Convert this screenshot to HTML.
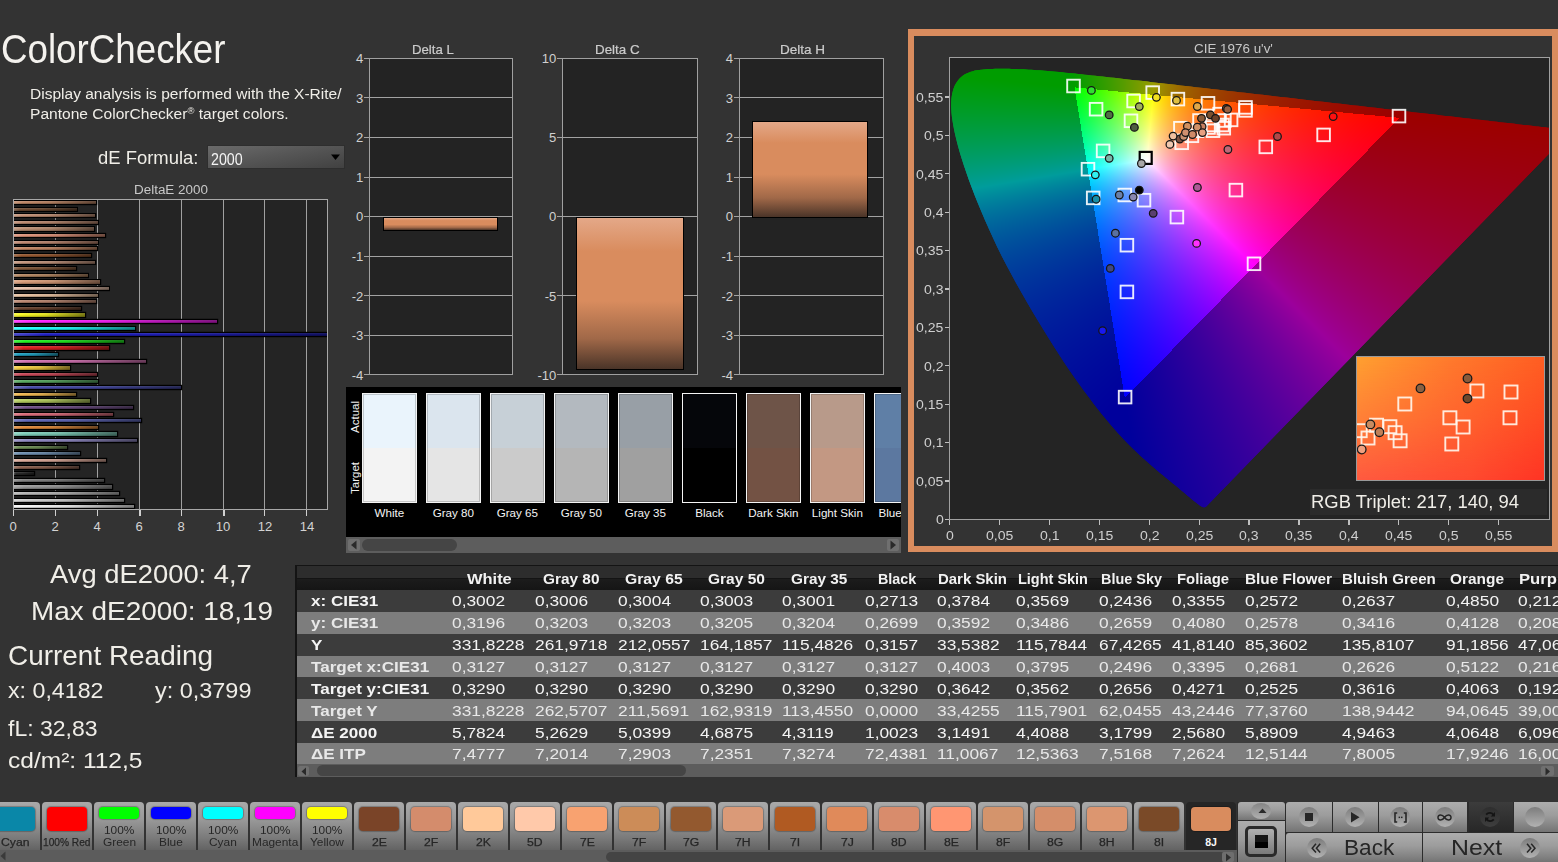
<!DOCTYPE html><html><head><meta charset="utf-8"><style>
html,body{margin:0;padding:0;}
body{width:1558px;height:862px;overflow:hidden;background:#333333;position:relative;font-family:"Liberation Sans",sans-serif;}
.t{position:absolute;white-space:nowrap;}
.r{position:absolute;}
</style></head><body><div class="t" style="left:1.00px;top:29.89px;font-size:39.83px;line-height:39.83px;color:#f4f2ee;transform:scaleX(0.9221);transform-origin:0 0;">ColorChecker</div>
<div class="t" style="left:30.00px;top:87.05px;font-size:14.83px;line-height:14.83px;color:#f0eee8;transform:scaleX(1.0472);transform-origin:0 0;">Display analysis is performed with the X-Rite/</div>
<div class="t" style="left:30.00px;top:107.05px;font-size:14.83px;line-height:14.83px;color:#f0eee8;transform:scaleX(1.0495);transform-origin:0 0;">Pantone ColorChecker<span style="font-size:9px;position:relative;top:-5px">&reg;</span> target colors.</div>
<div class="t" style="left:98.00px;top:150.04px;font-size:17.44px;line-height:17.44px;color:#f0eee8;transform:scaleX(1.0579);transform-origin:0 0;">dE Formula:</div>
<div class="r" style="left:206.80px;top:144.70px;width:138.50px;height:24.50px;background:linear-gradient(170deg,#6c6c6c 0%,#575757 45%,#404040 100%);box-shadow:inset 0 0 0 1px #2e2e2e;"></div>
<div class="t" style="left:211.00px;top:151.40px;font-size:17.01px;line-height:17.01px;color:#f4f4f4;transform:scaleX(0.8379);transform-origin:0 0;">2000</div>
<svg class="r" style="left:331px;top:154px" width="10" height="7"><path d="M0 0.5 L9 0.5 L4.5 6 Z" fill="#000"/></svg>
<div class="t" style="left:133.70px;top:184.00px;font-size:12.65px;line-height:12.65px;color:#c8c8c8;transform:scaleX(1.0632);transform-origin:0 0;">DeltaE 2000</div>
<div class="r" style="left:13.20px;top:199.30px;width:314.70px;height:310.70px;background:#242424;"></div>
<div class="r" style="left:55.00px;top:199.30px;width:1.00px;height:310.70px;background:#a0a0a0;"></div>
<div class="r" style="left:97.00px;top:199.30px;width:1.00px;height:310.70px;background:#a0a0a0;"></div>
<div class="r" style="left:139.00px;top:199.30px;width:1.00px;height:310.70px;background:#a0a0a0;"></div>
<div class="r" style="left:181.00px;top:199.30px;width:1.00px;height:310.70px;background:#a0a0a0;"></div>
<div class="r" style="left:223.00px;top:199.30px;width:1.00px;height:310.70px;background:#a0a0a0;"></div>
<div class="r" style="left:264.00px;top:199.30px;width:1.00px;height:310.70px;background:#a0a0a0;"></div>
<div class="r" style="left:306.00px;top:199.30px;width:1.00px;height:310.70px;background:#a0a0a0;"></div>
<div class="r" style="left:55.00px;top:199.30px;width:1.00px;height:310.70px;background:#a0a0a0;"></div>
<div class="r" style="left:97.00px;top:199.30px;width:1.00px;height:310.70px;background:#a0a0a0;"></div>
<div class="r" style="left:139.00px;top:199.30px;width:1.00px;height:310.70px;background:#a0a0a0;"></div>
<div class="r" style="left:181.00px;top:199.30px;width:1.00px;height:310.70px;background:#a0a0a0;"></div>
<div class="r" style="left:223.00px;top:199.30px;width:1.00px;height:310.70px;background:#a0a0a0;"></div>
<div class="r" style="left:264.00px;top:199.30px;width:1.00px;height:310.70px;background:#a0a0a0;"></div>
<div class="r" style="left:306.00px;top:199.30px;width:1.00px;height:310.70px;background:#a0a0a0;"></div>
<div class="r" style="left:14.2px;top:200.3px;width:312.7px;height:308.7px;overflow:hidden">
<div class="r" style="left:-0.50px;top:304.90px;width:120.76px;height:3.20px;background:linear-gradient(90deg,rgba(255,255,255,0.18),rgba(255,255,255,0) 10%,rgba(0,0,0,0.1) 45%,rgba(0,0,0,0.5)),linear-gradient(180deg,rgba(255,255,255,0.15),rgba(0,0,0,0) 50%,rgba(0,0,0,0.3)),#f4f4f4;box-shadow:0 0 0 1.2px #000;"></div>
<div class="r" style="left:-0.50px;top:298.29px;width:109.85px;height:3.20px;background:linear-gradient(90deg,rgba(255,255,255,0.18),rgba(255,255,255,0) 10%,rgba(0,0,0,0.1) 45%,rgba(0,0,0,0.5)),linear-gradient(180deg,rgba(255,255,255,0.15),rgba(0,0,0,0) 50%,rgba(0,0,0,0.3)),#cfcfcf;box-shadow:0 0 0 1.2px #000;"></div>
<div class="r" style="left:-0.50px;top:291.67px;width:105.24px;height:3.20px;background:linear-gradient(90deg,rgba(255,255,255,0.18),rgba(255,255,255,0) 10%,rgba(0,0,0,0.1) 45%,rgba(0,0,0,0.5)),linear-gradient(180deg,rgba(255,255,255,0.15),rgba(0,0,0,0) 50%,rgba(0,0,0,0.3)),#b5b5b5;box-shadow:0 0 0 1.2px #000;"></div>
<div class="r" style="left:-0.50px;top:285.06px;width:97.90px;height:3.20px;background:linear-gradient(90deg,rgba(255,255,255,0.18),rgba(255,255,255,0) 10%,rgba(0,0,0,0.1) 45%,rgba(0,0,0,0.5)),linear-gradient(180deg,rgba(255,255,255,0.15),rgba(0,0,0,0) 50%,rgba(0,0,0,0.3)),#9a9a9a;box-shadow:0 0 0 1.2px #000;"></div>
<div class="r" style="left:-0.50px;top:278.45px;width:89.92px;height:3.20px;background:linear-gradient(90deg,rgba(255,255,255,0.18),rgba(255,255,255,0) 10%,rgba(0,0,0,0.1) 45%,rgba(0,0,0,0.5)),linear-gradient(180deg,rgba(255,255,255,0.15),rgba(0,0,0,0) 50%,rgba(0,0,0,0.3)),#808080;box-shadow:0 0 0 1.2px #000;"></div>
<div class="r" style="left:-0.50px;top:271.83px;width:20.48px;height:3.20px;background:linear-gradient(90deg,rgba(255,255,255,0.18),rgba(255,255,255,0) 10%,rgba(0,0,0,0.1) 45%,rgba(0,0,0,0.5)),linear-gradient(180deg,rgba(255,255,255,0.15),rgba(0,0,0,0) 50%,rgba(0,0,0,0.3)),#2a2a2a;box-shadow:0 0 0 1.2px #000;"></div>
<div class="r" style="left:-0.50px;top:265.22px;width:65.59px;height:3.20px;background:linear-gradient(90deg,rgba(255,255,255,0.18),rgba(255,255,255,0) 10%,rgba(0,0,0,0.1) 45%,rgba(0,0,0,0.5)),linear-gradient(180deg,rgba(255,255,255,0.15),rgba(0,0,0,0) 50%,rgba(0,0,0,0.3)),#8a5f4e;box-shadow:0 0 0 1.2px #000;"></div>
<div class="r" style="left:-0.50px;top:258.61px;width:92.02px;height:3.20px;background:linear-gradient(90deg,rgba(255,255,255,0.18),rgba(255,255,255,0) 10%,rgba(0,0,0,0.1) 45%,rgba(0,0,0,0.5)),linear-gradient(180deg,rgba(255,255,255,0.15),rgba(0,0,0,0) 50%,rgba(0,0,0,0.3)),#d8a898;box-shadow:0 0 0 1.2px #000;"></div>
<div class="r" style="left:-0.50px;top:252.00px;width:66.22px;height:3.20px;background:linear-gradient(90deg,rgba(255,255,255,0.18),rgba(255,255,255,0) 10%,rgba(0,0,0,0.1) 45%,rgba(0,0,0,0.5)),linear-gradient(180deg,rgba(255,255,255,0.15),rgba(0,0,0,0) 50%,rgba(0,0,0,0.3)),#6f8fb0;box-shadow:0 0 0 1.2px #000;"></div>
<div class="r" style="left:-0.50px;top:245.38px;width:53.42px;height:3.20px;background:linear-gradient(90deg,rgba(255,255,255,0.18),rgba(255,255,255,0) 10%,rgba(0,0,0,0.1) 45%,rgba(0,0,0,0.5)),linear-gradient(180deg,rgba(255,255,255,0.15),rgba(0,0,0,0) 50%,rgba(0,0,0,0.3)),#6f8f55;box-shadow:0 0 0 1.2px #000;"></div>
<div class="r" style="left:-0.50px;top:238.77px;width:123.07px;height:3.20px;background:linear-gradient(90deg,rgba(255,255,255,0.18),rgba(255,255,255,0) 10%,rgba(0,0,0,0.1) 45%,rgba(0,0,0,0.5)),linear-gradient(180deg,rgba(255,255,255,0.15),rgba(0,0,0,0) 50%,rgba(0,0,0,0.3)),#8f88c0;box-shadow:0 0 0 1.2px #000;"></div>
<div class="r" style="left:-0.50px;top:232.16px;width:103.35px;height:3.20px;background:linear-gradient(90deg,rgba(255,255,255,0.18),rgba(255,255,255,0) 10%,rgba(0,0,0,0.1) 45%,rgba(0,0,0,0.5)),linear-gradient(180deg,rgba(255,255,255,0.15),rgba(0,0,0,0) 50%,rgba(0,0,0,0.3)),#7fd0bb;box-shadow:0 0 0 1.2px #000;"></div>
<div class="r" style="left:-0.50px;top:225.54px;width:84.68px;height:3.20px;background:linear-gradient(90deg,rgba(255,255,255,0.18),rgba(255,255,255,0) 10%,rgba(0,0,0,0.1) 45%,rgba(0,0,0,0.5)),linear-gradient(180deg,rgba(255,255,255,0.15),rgba(0,0,0,0) 50%,rgba(0,0,0,0.3)),#e08a3a;box-shadow:0 0 0 1.2px #000;"></div>
<div class="r" style="left:-0.50px;top:218.93px;width:127.27px;height:3.20px;background:linear-gradient(90deg,rgba(255,255,255,0.18),rgba(255,255,255,0) 10%,rgba(0,0,0,0.1) 45%,rgba(0,0,0,0.5)),linear-gradient(180deg,rgba(255,255,255,0.15),rgba(0,0,0,0) 50%,rgba(0,0,0,0.3)),#6068b8;box-shadow:0 0 0 1.2px #000;"></div>
<div class="r" style="left:-0.50px;top:212.32px;width:99.78px;height:3.20px;background:linear-gradient(90deg,rgba(255,255,255,0.18),rgba(255,255,255,0) 10%,rgba(0,0,0,0.1) 45%,rgba(0,0,0,0.5)),linear-gradient(180deg,rgba(255,255,255,0.15),rgba(0,0,0,0) 50%,rgba(0,0,0,0.3)),#d86a78;box-shadow:0 0 0 1.2px #000;"></div>
<div class="r" style="left:-0.50px;top:205.70px;width:118.88px;height:3.20px;background:linear-gradient(90deg,rgba(255,255,255,0.18),rgba(255,255,255,0) 10%,rgba(0,0,0,0.1) 45%,rgba(0,0,0,0.5)),linear-gradient(180deg,rgba(255,255,255,0.15),rgba(0,0,0,0) 50%,rgba(0,0,0,0.3)),#705088;box-shadow:0 0 0 1.2px #000;"></div>
<div class="r" style="left:-0.50px;top:199.09px;width:76.71px;height:3.20px;background:linear-gradient(90deg,rgba(255,255,255,0.18),rgba(255,255,255,0) 10%,rgba(0,0,0,0.1) 45%,rgba(0,0,0,0.5)),linear-gradient(180deg,rgba(255,255,255,0.15),rgba(0,0,0,0) 50%,rgba(0,0,0,0.3)),#b8d060;box-shadow:0 0 0 1.2px #000;"></div>
<div class="r" style="left:-0.50px;top:192.48px;width:62.44px;height:3.20px;background:linear-gradient(90deg,rgba(255,255,255,0.18),rgba(255,255,255,0) 10%,rgba(0,0,0,0.1) 45%,rgba(0,0,0,0.5)),linear-gradient(180deg,rgba(255,255,255,0.15),rgba(0,0,0,0) 50%,rgba(0,0,0,0.3)),#f0b850;box-shadow:0 0 0 1.2px #000;"></div>
<div class="r" style="left:-0.50px;top:185.87px;width:167.34px;height:3.20px;background:linear-gradient(90deg,rgba(255,255,255,0.18),rgba(255,255,255,0) 10%,rgba(0,0,0,0.1) 45%,rgba(0,0,0,0.5)),linear-gradient(180deg,rgba(255,255,255,0.15),rgba(0,0,0,0) 50%,rgba(0,0,0,0.3)),#484ca8;box-shadow:0 0 0 1.2px #000;"></div>
<div class="r" style="left:-0.50px;top:179.25px;width:83.84px;height:3.20px;background:linear-gradient(90deg,rgba(255,255,255,0.18),rgba(255,255,255,0) 10%,rgba(0,0,0,0.1) 45%,rgba(0,0,0,0.5)),linear-gradient(180deg,rgba(255,255,255,0.15),rgba(0,0,0,0) 50%,rgba(0,0,0,0.3)),#58a860;box-shadow:0 0 0 1.2px #000;"></div>
<div class="r" style="left:-0.50px;top:172.64px;width:83.21px;height:3.20px;background:linear-gradient(90deg,rgba(255,255,255,0.18),rgba(255,255,255,0) 10%,rgba(0,0,0,0.1) 45%,rgba(0,0,0,0.5)),linear-gradient(180deg,rgba(255,255,255,0.15),rgba(0,0,0,0) 50%,rgba(0,0,0,0.3)),#c84858;box-shadow:0 0 0 1.2px #000;"></div>
<div class="r" style="left:-0.50px;top:166.03px;width:55.94px;height:3.20px;background:linear-gradient(90deg,rgba(255,255,255,0.18),rgba(255,255,255,0) 10%,rgba(0,0,0,0.1) 45%,rgba(0,0,0,0.5)),linear-gradient(180deg,rgba(255,255,255,0.15),rgba(0,0,0,0) 50%,rgba(0,0,0,0.3)),#f8d040;box-shadow:0 0 0 1.2px #000;"></div>
<div class="r" style="left:-0.50px;top:159.41px;width:131.88px;height:3.20px;background:linear-gradient(90deg,rgba(255,255,255,0.18),rgba(255,255,255,0) 10%,rgba(0,0,0,0.1) 45%,rgba(0,0,0,0.5)),linear-gradient(180deg,rgba(255,255,255,0.15),rgba(0,0,0,0) 50%,rgba(0,0,0,0.3)),#d070b0;box-shadow:0 0 0 1.2px #000;"></div>
<div class="r" style="left:-0.50px;top:152.80px;width:44.61px;height:3.20px;background:linear-gradient(90deg,rgba(255,255,255,0.18),rgba(255,255,255,0) 10%,rgba(0,0,0,0.1) 45%,rgba(0,0,0,0.5)),linear-gradient(180deg,rgba(255,255,255,0.15),rgba(0,0,0,0) 50%,rgba(0,0,0,0.3)),#20a0c0;box-shadow:0 0 0 1.2px #000;"></div>
<div class="r" style="left:-0.50px;top:146.19px;width:94.96px;height:3.20px;background:linear-gradient(90deg,rgba(255,255,255,0.18),rgba(255,255,255,0) 10%,rgba(0,0,0,0.1) 45%,rgba(0,0,0,0.5)),linear-gradient(180deg,rgba(255,255,255,0.15),rgba(0,0,0,0) 50%,rgba(0,0,0,0.3)),#e02020;box-shadow:0 0 0 1.2px #000;"></div>
<div class="r" style="left:-0.50px;top:139.57px;width:110.27px;height:3.20px;background:linear-gradient(90deg,rgba(255,255,255,0.18),rgba(255,255,255,0) 10%,rgba(0,0,0,0.1) 45%,rgba(0,0,0,0.5)),linear-gradient(180deg,rgba(255,255,255,0.15),rgba(0,0,0,0) 50%,rgba(0,0,0,0.3)),#20f020;box-shadow:0 0 0 1.2px #000;"></div>
<div class="r" style="left:-0.50px;top:132.96px;width:314.20px;height:3.20px;background:linear-gradient(90deg,rgba(255,255,255,0.18),rgba(255,255,255,0) 10%,rgba(0,0,0,0.1) 45%,rgba(0,0,0,0.5)),linear-gradient(180deg,rgba(255,255,255,0.15),rgba(0,0,0,0) 50%,rgba(0,0,0,0.3)),#2020c0;box-shadow:0 0 0 1.2px #000;"></div>
<div class="r" style="left:-0.50px;top:126.35px;width:121.18px;height:3.20px;background:linear-gradient(90deg,rgba(255,255,255,0.18),rgba(255,255,255,0) 10%,rgba(0,0,0,0.1) 45%,rgba(0,0,0,0.5)),linear-gradient(180deg,rgba(255,255,255,0.15),rgba(0,0,0,0) 50%,rgba(0,0,0,0.3)),#20ffff;box-shadow:0 0 0 1.2px #000;"></div>
<div class="r" style="left:-0.50px;top:119.73px;width:203.43px;height:3.20px;background:linear-gradient(90deg,rgba(255,255,255,0.18),rgba(255,255,255,0) 10%,rgba(0,0,0,0.1) 45%,rgba(0,0,0,0.5)),linear-gradient(180deg,rgba(255,255,255,0.15),rgba(0,0,0,0) 50%,rgba(0,0,0,0.3)),#ff20ff;box-shadow:0 0 0 1.2px #000;"></div>
<div class="r" style="left:-0.50px;top:113.12px;width:71.67px;height:3.20px;background:linear-gradient(90deg,rgba(255,255,255,0.18),rgba(255,255,255,0) 10%,rgba(0,0,0,0.1) 45%,rgba(0,0,0,0.5)),linear-gradient(180deg,rgba(255,255,255,0.15),rgba(0,0,0,0) 50%,rgba(0,0,0,0.3)),#f8f820;box-shadow:0 0 0 1.2px #000;"></div>
<div class="r" style="left:-0.50px;top:106.51px;width:67.69px;height:3.20px;filter:saturate(0.75) brightness(0.95);background:linear-gradient(90deg,rgba(255,255,255,0.18),rgba(255,255,255,0) 10%,rgba(0,0,0,0.1) 45%,rgba(0,0,0,0.5)),linear-gradient(180deg,rgba(255,255,255,0.15),rgba(0,0,0,0) 50%,rgba(0,0,0,0.3)),#7a4428;box-shadow:0 0 0 1.2px #000;"></div>
<div class="r" style="left:-0.50px;top:99.90px;width:82.37px;height:3.20px;filter:saturate(0.75) brightness(0.95);background:linear-gradient(90deg,rgba(255,255,255,0.18),rgba(255,255,255,0) 10%,rgba(0,0,0,0.1) 45%,rgba(0,0,0,0.5)),linear-gradient(180deg,rgba(255,255,255,0.15),rgba(0,0,0,0) 50%,rgba(0,0,0,0.3)),#d48c6c;box-shadow:0 0 0 1.2px #000;"></div>
<div class="r" style="left:-0.50px;top:93.28px;width:83.84px;height:3.20px;filter:saturate(0.75) brightness(0.95);background:linear-gradient(90deg,rgba(255,255,255,0.18),rgba(255,255,255,0) 10%,rgba(0,0,0,0.1) 45%,rgba(0,0,0,0.5)),linear-gradient(180deg,rgba(255,255,255,0.15),rgba(0,0,0,0) 50%,rgba(0,0,0,0.3)),#ffc99a;box-shadow:0 0 0 1.2px #000;"></div>
<div class="r" style="left:-0.50px;top:86.67px;width:94.96px;height:3.20px;filter:saturate(0.75) brightness(0.95);background:linear-gradient(90deg,rgba(255,255,255,0.18),rgba(255,255,255,0) 10%,rgba(0,0,0,0.1) 45%,rgba(0,0,0,0.5)),linear-gradient(180deg,rgba(255,255,255,0.15),rgba(0,0,0,0) 50%,rgba(0,0,0,0.3)),#ffc9aa;box-shadow:0 0 0 1.2px #000;"></div>
<div class="r" style="left:-0.50px;top:80.06px;width:86.57px;height:3.20px;filter:saturate(0.75) brightness(0.95);background:linear-gradient(90deg,rgba(255,255,255,0.18),rgba(255,255,255,0) 10%,rgba(0,0,0,0.1) 45%,rgba(0,0,0,0.5)),linear-gradient(180deg,rgba(255,255,255,0.15),rgba(0,0,0,0) 50%,rgba(0,0,0,0.3)),#f8a270;box-shadow:0 0 0 1.2px #000;"></div>
<div class="r" style="left:-0.50px;top:73.44px;width:73.98px;height:3.20px;filter:saturate(0.75) brightness(0.95);background:linear-gradient(90deg,rgba(255,255,255,0.18),rgba(255,255,255,0) 10%,rgba(0,0,0,0.1) 45%,rgba(0,0,0,0.5)),linear-gradient(180deg,rgba(255,255,255,0.15),rgba(0,0,0,0) 50%,rgba(0,0,0,0.3)),#cc8c58;box-shadow:0 0 0 1.2px #000;"></div>
<div class="r" style="left:-0.50px;top:66.83px;width:62.44px;height:3.20px;filter:saturate(0.75) brightness(0.95);background:linear-gradient(90deg,rgba(255,255,255,0.18),rgba(255,255,255,0) 10%,rgba(0,0,0,0.1) 45%,rgba(0,0,0,0.5)),linear-gradient(180deg,rgba(255,255,255,0.15),rgba(0,0,0,0) 50%,rgba(0,0,0,0.3)),#93592f;box-shadow:0 0 0 1.2px #000;"></div>
<div class="r" style="left:-0.50px;top:60.22px;width:81.32px;height:3.20px;filter:saturate(0.75) brightness(0.95);background:linear-gradient(90deg,rgba(255,255,255,0.18),rgba(255,255,255,0) 10%,rgba(0,0,0,0.1) 45%,rgba(0,0,0,0.5)),linear-gradient(180deg,rgba(255,255,255,0.15),rgba(0,0,0,0) 50%,rgba(0,0,0,0.3)),#da9a78;box-shadow:0 0 0 1.2px #000;"></div>
<div class="r" style="left:-0.50px;top:53.60px;width:77.13px;height:3.20px;filter:saturate(0.75) brightness(0.95);background:linear-gradient(90deg,rgba(255,255,255,0.18),rgba(255,255,255,0) 10%,rgba(0,0,0,0.1) 45%,rgba(0,0,0,0.5)),linear-gradient(180deg,rgba(255,255,255,0.15),rgba(0,0,0,0) 50%,rgba(0,0,0,0.3)),#b05a22;box-shadow:0 0 0 1.2px #000;"></div>
<div class="r" style="left:-0.50px;top:46.99px;width:83.42px;height:3.20px;filter:saturate(0.75) brightness(0.95);background:linear-gradient(90deg,rgba(255,255,255,0.18),rgba(255,255,255,0) 10%,rgba(0,0,0,0.1) 45%,rgba(0,0,0,0.5)),linear-gradient(180deg,rgba(255,255,255,0.15),rgba(0,0,0,0) 50%,rgba(0,0,0,0.3)),#e08a5a;box-shadow:0 0 0 1.2px #000;"></div>
<div class="r" style="left:-0.50px;top:40.38px;width:83.84px;height:3.20px;filter:saturate(0.75) brightness(0.95);background:linear-gradient(90deg,rgba(255,255,255,0.18),rgba(255,255,255,0) 10%,rgba(0,0,0,0.1) 45%,rgba(0,0,0,0.5)),linear-gradient(180deg,rgba(255,255,255,0.15),rgba(0,0,0,0) 50%,rgba(0,0,0,0.3)),#d88c6c;box-shadow:0 0 0 1.2px #000;"></div>
<div class="r" style="left:-0.50px;top:33.77px;width:91.81px;height:3.20px;filter:saturate(0.75) brightness(0.95);background:linear-gradient(90deg,rgba(255,255,255,0.18),rgba(255,255,255,0) 10%,rgba(0,0,0,0.1) 45%,rgba(0,0,0,0.5)),linear-gradient(180deg,rgba(255,255,255,0.15),rgba(0,0,0,0) 50%,rgba(0,0,0,0.3)),#ff9672;box-shadow:0 0 0 1.2px #000;"></div>
<div class="r" style="left:-0.50px;top:27.15px;width:80.27px;height:3.20px;filter:saturate(0.75) brightness(0.95);background:linear-gradient(90deg,rgba(255,255,255,0.18),rgba(255,255,255,0) 10%,rgba(0,0,0,0.1) 45%,rgba(0,0,0,0.5)),linear-gradient(180deg,rgba(255,255,255,0.15),rgba(0,0,0,0) 50%,rgba(0,0,0,0.3)),#d4946c;box-shadow:0 0 0 1.2px #000;"></div>
<div class="r" style="left:-0.50px;top:20.54px;width:83.84px;height:3.20px;filter:saturate(0.75) brightness(0.95);background:linear-gradient(90deg,rgba(255,255,255,0.18),rgba(255,255,255,0) 10%,rgba(0,0,0,0.1) 45%,rgba(0,0,0,0.5)),linear-gradient(180deg,rgba(255,255,255,0.15),rgba(0,0,0,0) 50%,rgba(0,0,0,0.3)),#d48e6a;box-shadow:0 0 0 1.2px #000;"></div>
<div class="r" style="left:-0.50px;top:13.93px;width:81.32px;height:3.20px;filter:saturate(0.75) brightness(0.95);background:linear-gradient(90deg,rgba(255,255,255,0.18),rgba(255,255,255,0) 10%,rgba(0,0,0,0.1) 45%,rgba(0,0,0,0.5)),linear-gradient(180deg,rgba(255,255,255,0.15),rgba(0,0,0,0) 50%,rgba(0,0,0,0.3)),#dc9670;box-shadow:0 0 0 1.2px #000;"></div>
<div class="r" style="left:-0.50px;top:7.31px;width:62.86px;height:3.20px;filter:saturate(0.75) brightness(0.95);background:linear-gradient(90deg,rgba(255,255,255,0.18),rgba(255,255,255,0) 10%,rgba(0,0,0,0.1) 45%,rgba(0,0,0,0.5)),linear-gradient(180deg,rgba(255,255,255,0.15),rgba(0,0,0,0) 50%,rgba(0,0,0,0.3)),#7a4a28;box-shadow:0 0 0 1.2px #000;"></div>
<div class="r" style="left:-0.50px;top:0.70px;width:82.37px;height:3.20px;filter:saturate(0.75) brightness(0.95);background:linear-gradient(90deg,rgba(255,255,255,0.18),rgba(255,255,255,0) 10%,rgba(0,0,0,0.1) 45%,rgba(0,0,0,0.5)),linear-gradient(180deg,rgba(255,255,255,0.15),rgba(0,0,0,0) 50%,rgba(0,0,0,0.3)),#d98c5e;box-shadow:0 0 0 1.2px #000;"></div>
</div>
<div class="r" style="left:13.20px;top:199.30px;width:314.70px;height:310.70px;box-shadow:inset 0 0 0 1px #a8a8a8;"></div>
<div class="r" style="left:13.00px;top:510.00px;width:1.00px;height:5.50px;background:#d0d0d0;"></div>
<div class="t" style="left:9.56px;top:519.93px;font-size:13.08px;line-height:13.08px;color:#d4d4d4;">0</div>
<div class="r" style="left:55.00px;top:510.00px;width:1.00px;height:5.50px;background:#d0d0d0;"></div>
<div class="t" style="left:51.52px;top:519.93px;font-size:13.08px;line-height:13.08px;color:#d4d4d4;">2</div>
<div class="r" style="left:97.00px;top:510.00px;width:1.00px;height:5.50px;background:#d0d0d0;"></div>
<div class="t" style="left:93.48px;top:519.93px;font-size:13.08px;line-height:13.08px;color:#d4d4d4;">4</div>
<div class="r" style="left:138.50px;top:510.00px;width:2.00px;height:5.50px;background:#d0d0d0;"></div>
<div class="t" style="left:135.44px;top:519.93px;font-size:13.08px;line-height:13.08px;color:#d4d4d4;">6</div>
<div class="r" style="left:181.00px;top:510.00px;width:1.00px;height:5.50px;background:#d0d0d0;"></div>
<div class="t" style="left:177.40px;top:519.93px;font-size:13.08px;line-height:13.08px;color:#d4d4d4;">8</div>
<div class="r" style="left:222.50px;top:510.00px;width:2.00px;height:5.50px;background:#d0d0d0;"></div>
<div class="t" style="left:215.72px;top:519.93px;font-size:13.08px;line-height:13.08px;color:#d4d4d4;">10</div>
<div class="r" style="left:264.00px;top:510.00px;width:1.00px;height:5.50px;background:#d0d0d0;"></div>
<div class="t" style="left:257.68px;top:519.93px;font-size:13.08px;line-height:13.08px;color:#d4d4d4;">12</div>
<div class="r" style="left:306.00px;top:510.00px;width:1.00px;height:5.50px;background:#d0d0d0;"></div>
<div class="t" style="left:299.64px;top:519.93px;font-size:13.08px;line-height:13.08px;color:#d4d4d4;">14</div>
<div class="r" style="left:368.80px;top:58.10px;width:144.20px;height:316.50px;background:#232323;"></div>
<div class="r" style="left:363.80px;top:58.00px;width:149.20px;height:1.00px;background:#a2a2a2;"></div>
<div class="t" style="left:356.02px;top:52.13px;font-size:13.08px;line-height:13.08px;color:#d0d0d0;">4</div>
<div class="r" style="left:363.80px;top:97.00px;width:149.20px;height:1.00px;background:#a2a2a2;"></div>
<div class="t" style="left:356.02px;top:91.69px;font-size:13.08px;line-height:13.08px;color:#d0d0d0;">3</div>
<div class="r" style="left:363.80px;top:137.00px;width:149.20px;height:1.00px;background:#a2a2a2;"></div>
<div class="t" style="left:356.02px;top:131.25px;font-size:13.08px;line-height:13.08px;color:#d0d0d0;">2</div>
<div class="r" style="left:363.80px;top:177.00px;width:149.20px;height:1.00px;background:#a2a2a2;"></div>
<div class="t" style="left:356.02px;top:170.81px;font-size:13.08px;line-height:13.08px;color:#d0d0d0;">1</div>
<div class="r" style="left:363.80px;top:216.00px;width:149.20px;height:1.00px;background:#a2a2a2;"></div>
<div class="t" style="left:356.02px;top:210.38px;font-size:13.08px;line-height:13.08px;color:#d0d0d0;">0</div>
<div class="r" style="left:363.80px;top:256.00px;width:149.20px;height:1.00px;background:#a2a2a2;"></div>
<div class="t" style="left:351.67px;top:249.94px;font-size:13.08px;line-height:13.08px;color:#d0d0d0;">-1</div>
<div class="r" style="left:363.80px;top:295.00px;width:149.20px;height:1.00px;background:#a2a2a2;"></div>
<div class="t" style="left:351.67px;top:289.50px;font-size:13.08px;line-height:13.08px;color:#d0d0d0;">-2</div>
<div class="r" style="left:363.80px;top:335.00px;width:149.20px;height:1.00px;background:#a2a2a2;"></div>
<div class="t" style="left:351.67px;top:329.06px;font-size:13.08px;line-height:13.08px;color:#d0d0d0;">-3</div>
<div class="r" style="left:363.80px;top:374.00px;width:149.20px;height:1.00px;background:#a2a2a2;"></div>
<div class="t" style="left:351.67px;top:368.63px;font-size:13.08px;line-height:13.08px;color:#d0d0d0;">-4</div>
<div class="r" style="left:368.80px;top:58.10px;width:144.20px;height:316.50px;box-shadow:inset 0 0 0 1px #a0a0a0;"></div>
<div class="t" style="left:411.90px;top:43.97px;font-size:12.79px;line-height:12.79px;color:#cccccc;transform:scaleX(1.0314);transform-origin:0 0;-webkit-text-stroke:0.2px #cccccc;">Delta L</div>
<div class="r" style="left:383.50px;top:217.60px;width:113.50px;height:12.20px;background:linear-gradient(180deg,#e4a888 0%,#d98c5e 22%,#d98c5e 55%,#a06848 80%,#4a3428 100%);box-shadow:0 0 0 1px #000;"></div>
<div class="r" style="left:561.80px;top:58.10px;width:135.80px;height:316.50px;background:#232323;"></div>
<div class="r" style="left:556.80px;top:58.00px;width:140.80px;height:1.00px;background:#a2a2a2;"></div>
<div class="t" style="left:541.75px;top:52.13px;font-size:13.08px;line-height:13.08px;color:#d0d0d0;">10</div>
<div class="r" style="left:556.80px;top:137.00px;width:140.80px;height:1.00px;background:#a2a2a2;"></div>
<div class="t" style="left:549.02px;top:131.25px;font-size:13.08px;line-height:13.08px;color:#d0d0d0;">5</div>
<div class="r" style="left:556.80px;top:216.00px;width:140.80px;height:1.00px;background:#a2a2a2;"></div>
<div class="t" style="left:549.02px;top:210.38px;font-size:13.08px;line-height:13.08px;color:#d0d0d0;">0</div>
<div class="r" style="left:556.80px;top:295.00px;width:140.80px;height:1.00px;background:#a2a2a2;"></div>
<div class="t" style="left:544.67px;top:289.50px;font-size:13.08px;line-height:13.08px;color:#d0d0d0;">-5</div>
<div class="r" style="left:556.80px;top:374.00px;width:140.80px;height:1.00px;background:#a2a2a2;"></div>
<div class="t" style="left:537.39px;top:368.63px;font-size:13.08px;line-height:13.08px;color:#d0d0d0;">-10</div>
<div class="r" style="left:561.80px;top:58.10px;width:135.80px;height:316.50px;box-shadow:inset 0 0 0 1px #a0a0a0;"></div>
<div class="t" style="left:595.20px;top:43.97px;font-size:12.79px;line-height:12.79px;color:#cccccc;transform:scaleX(1.0457);transform-origin:0 0;-webkit-text-stroke:0.2px #cccccc;">Delta C</div>
<div class="r" style="left:576.80px;top:217.60px;width:106.40px;height:151.00px;background:linear-gradient(180deg,#e4a888 0%,#d98c5e 22%,#d98c5e 55%,#a06848 80%,#4a3428 100%);box-shadow:0 0 0 1px #000;"></div>
<div class="r" style="left:738.60px;top:58.10px;width:145.30px;height:316.50px;background:#232323;"></div>
<div class="r" style="left:733.60px;top:58.00px;width:150.30px;height:1.00px;background:#a2a2a2;"></div>
<div class="t" style="left:725.82px;top:52.13px;font-size:13.08px;line-height:13.08px;color:#d0d0d0;">4</div>
<div class="r" style="left:733.60px;top:97.00px;width:150.30px;height:1.00px;background:#a2a2a2;"></div>
<div class="t" style="left:725.82px;top:91.69px;font-size:13.08px;line-height:13.08px;color:#d0d0d0;">3</div>
<div class="r" style="left:733.60px;top:137.00px;width:150.30px;height:1.00px;background:#a2a2a2;"></div>
<div class="t" style="left:725.82px;top:131.25px;font-size:13.08px;line-height:13.08px;color:#d0d0d0;">2</div>
<div class="r" style="left:733.60px;top:177.00px;width:150.30px;height:1.00px;background:#a2a2a2;"></div>
<div class="t" style="left:725.82px;top:170.81px;font-size:13.08px;line-height:13.08px;color:#d0d0d0;">1</div>
<div class="r" style="left:733.60px;top:216.00px;width:150.30px;height:1.00px;background:#a2a2a2;"></div>
<div class="t" style="left:725.82px;top:210.38px;font-size:13.08px;line-height:13.08px;color:#d0d0d0;">0</div>
<div class="r" style="left:733.60px;top:256.00px;width:150.30px;height:1.00px;background:#a2a2a2;"></div>
<div class="t" style="left:721.47px;top:249.94px;font-size:13.08px;line-height:13.08px;color:#d0d0d0;">-1</div>
<div class="r" style="left:733.60px;top:295.00px;width:150.30px;height:1.00px;background:#a2a2a2;"></div>
<div class="t" style="left:721.47px;top:289.50px;font-size:13.08px;line-height:13.08px;color:#d0d0d0;">-2</div>
<div class="r" style="left:733.60px;top:335.00px;width:150.30px;height:1.00px;background:#a2a2a2;"></div>
<div class="t" style="left:721.47px;top:329.06px;font-size:13.08px;line-height:13.08px;color:#d0d0d0;">-3</div>
<div class="r" style="left:733.60px;top:374.00px;width:150.30px;height:1.00px;background:#a2a2a2;"></div>
<div class="t" style="left:721.47px;top:368.63px;font-size:13.08px;line-height:13.08px;color:#d0d0d0;">-4</div>
<div class="r" style="left:738.60px;top:58.10px;width:145.30px;height:316.50px;box-shadow:inset 0 0 0 1px #a0a0a0;"></div>
<div class="t" style="left:779.70px;top:43.97px;font-size:12.79px;line-height:12.79px;color:#cccccc;transform:scaleX(1.0574);transform-origin:0 0;-webkit-text-stroke:0.2px #cccccc;">Delta H</div>
<div class="r" style="left:753.30px;top:121.80px;width:113.70px;height:94.80px;background:linear-gradient(180deg,#e4a888 0%,#d98c5e 22%,#d98c5e 55%,#a06848 80%,#4a3428 100%);box-shadow:0 0 0 1px #000;"></div>
<div class="r" style="left:346.30px;top:387.30px;width:554.50px;height:149.50px;background:#000;"></div>
<div class="t" style="left:355px;top:416.5px;font-size:11.5px;line-height:12px;color:#f4f4f4;transform:translate(-50%,-50%) rotate(-90deg);">Actual</div>
<div class="t" style="left:355px;top:478px;font-size:11.5px;line-height:12px;color:#f4f4f4;transform:translate(-50%,-50%) rotate(-90deg);">Target</div>
<div class="r" style="left:346.3px;top:387.3px;width:554.5px;height:149.5px;overflow:hidden">
<div class="r" style="left:15.60px;top:5.9px;width:55px;height:109.6px;box-sizing:border-box;border:1.5px solid #f4f4f4;box-shadow:inset 0 0 0 1px rgba(0,0,0,0.18);background:linear-gradient(180deg,#eaf4fc 50%,#f3f3f3 50%);"></div>
<div class="t" style="left:28.24px;top:119.66px;font-size:11.63px;line-height:11.63px;color:#f4f4f4">White</div>
<div class="r" style="left:79.60px;top:5.9px;width:55px;height:109.6px;box-sizing:border-box;border:1.5px solid #f4f4f4;box-shadow:inset 0 0 0 1px rgba(0,0,0,0.18);background:linear-gradient(180deg,#dbe5ee 50%,#e5e5e5 50%);"></div>
<div class="t" style="left:86.42px;top:119.66px;font-size:11.63px;line-height:11.63px;color:#f4f4f4">Gray 80</div>
<div class="r" style="left:143.60px;top:5.9px;width:55px;height:109.6px;box-sizing:border-box;border:1.5px solid #f4f4f4;box-shadow:inset 0 0 0 1px rgba(0,0,0,0.18);background:linear-gradient(180deg,#c7d0d7 50%,#cbcbcb 50%);"></div>
<div class="t" style="left:150.42px;top:119.66px;font-size:11.63px;line-height:11.63px;color:#f4f4f4">Gray 65</div>
<div class="r" style="left:207.60px;top:5.9px;width:55px;height:109.6px;box-sizing:border-box;border:1.5px solid #f4f4f4;box-shadow:inset 0 0 0 1px rgba(0,0,0,0.18);background:linear-gradient(180deg,#b3b9bf 50%,#b5b5b5 50%);"></div>
<div class="t" style="left:214.42px;top:119.66px;font-size:11.63px;line-height:11.63px;color:#f4f4f4">Gray 50</div>
<div class="r" style="left:271.60px;top:5.9px;width:55px;height:109.6px;box-sizing:border-box;border:1.5px solid #f4f4f4;box-shadow:inset 0 0 0 1px rgba(0,0,0,0.18);background:linear-gradient(180deg,#989fa6 50%,#a0a0a0 50%);"></div>
<div class="t" style="left:278.42px;top:119.66px;font-size:11.63px;line-height:11.63px;color:#f4f4f4">Gray 35</div>
<div class="r" style="left:335.60px;top:5.9px;width:55px;height:109.6px;box-sizing:border-box;border:1.5px solid #f4f4f4;box-shadow:inset 0 0 0 1px rgba(0,0,0,0.18);background:linear-gradient(180deg,#05060a 50%,#000000 50%);"></div>
<div class="t" style="left:348.88px;top:119.66px;font-size:11.63px;line-height:11.63px;color:#f4f4f4">Black</div>
<div class="r" style="left:399.60px;top:5.9px;width:55px;height:109.6px;box-sizing:border-box;border:1.5px solid #f4f4f4;box-shadow:inset 0 0 0 1px rgba(0,0,0,0.18);background:linear-gradient(180deg,#6e5448 50%,#735244 50%);"></div>
<div class="t" style="left:401.90px;top:119.66px;font-size:11.63px;line-height:11.63px;color:#f4f4f4">Dark Skin</div>
<div class="r" style="left:463.60px;top:5.9px;width:55px;height:109.6px;box-sizing:border-box;border:1.5px solid #f4f4f4;box-shadow:inset 0 0 0 1px rgba(0,0,0,0.18);background:linear-gradient(180deg,#b89a8a 50%,#c39883 50%);"></div>
<div class="t" style="left:465.57px;top:119.66px;font-size:11.63px;line-height:11.63px;color:#f4f4f4">Light Skin</div>
<div class="r" style="left:527.60px;top:5.9px;width:55px;height:109.6px;box-sizing:border-box;border:1.5px solid #f4f4f4;box-shadow:inset 0 0 0 1px rgba(0,0,0,0.18);background:linear-gradient(180deg,#5f7fa6 50%,#5c78a0 50%);"></div>
<div class="t" style="left:532.16px;top:119.66px;font-size:11.63px;line-height:11.63px;color:#f4f4f4">Blue Sky</div>
</div>
<div class="r" style="left:346.30px;top:536.60px;width:554.50px;height:16.70px;background:#5d5d5d;"></div>
<div class="r" style="left:362.00px;top:538.60px;width:94.50px;height:12.50px;background:#454545;border-radius:6px;"></div>
<div class="r" style="left:347.50px;top:538.80px;width:12.50px;height:12.50px;background:#6f6f6f;border-radius:2px;"></div>
<svg class="r" style="left:350px;top:540px" width="8" height="10"><path d="M6.5 0.5 L6.5 9.5 L1 5 Z" fill="#2a2a2a"/></svg>
<div class="r" style="left:886.50px;top:538.80px;width:12.50px;height:12.50px;background:#6f6f6f;border-radius:2px;"></div>
<svg class="r" style="left:889px;top:540px" width="8" height="10"><path d="M1.5 0.5 L1.5 9.5 L7 5 Z" fill="#2a2a2a"/></svg>
<div class="t" style="left:49.90px;top:560.75px;font-size:26.16px;line-height:26.16px;color:#f0eee8;transform:scaleX(1.0461);transform-origin:0 0;">Avg dE2000: 4,7</div>
<div class="t" style="left:30.50px;top:598.45px;font-size:26.16px;line-height:26.16px;color:#f0eee8;transform:scaleX(1.0674);transform-origin:0 0;">Max dE2000: 18,19</div>
<div class="t" style="left:8.00px;top:643.31px;font-size:27.04px;line-height:27.04px;color:#f0eee8;transform:scaleX(1.0334);transform-origin:0 0;">Current Reading</div>
<div class="t" style="left:7.80px;top:681.09px;font-size:21.51px;line-height:21.51px;color:#f0eee8;transform:scaleX(1.0790);transform-origin:0 0;">x: 0,4182</div>
<div class="t" style="left:154.60px;top:681.09px;font-size:21.51px;line-height:21.51px;color:#f0eee8;transform:scaleX(1.0903);transform-origin:0 0;">y: 0,3799</div>
<div class="t" style="left:7.80px;top:719.39px;font-size:21.51px;line-height:21.51px;color:#f0eee8;transform:scaleX(1.0689);transform-origin:0 0;">fL: 32,83</div>
<div class="t" style="left:7.80px;top:751.39px;font-size:21.51px;line-height:21.51px;color:#f0eee8;transform:scaleX(1.1403);transform-origin:0 0;">cd/m&sup2;: 112,5</div>
<div class="r" style="left:908.00px;top:29.30px;width:650.00px;height:522.70px;background:#d98c5e;"></div>
<div class="r" style="left:914.20px;top:35.60px;width:638.10px;height:510.20px;background:#333333;"></div>
<div class="t" style="left:1194.00px;top:43.05px;font-size:12.94px;line-height:12.94px;color:#c8c8c8;transform:scaleX(1.0363);transform-origin:0 0;">CIE 1976 u'v'</div>
<div class="r" style="left:949.00px;top:57.00px;width:601.00px;height:463.00px;background:#242424;"></div>
<div class="r" style="left:949.0px;top:57.0px;width:601.0px;height:463.0px;overflow:hidden">
<svg class="r" style="left:0;top:0" width="601.0" height="463.0"><defs><clipPath id="hs"><path d="M256.99 449.66 L256.97 449.65 L256.95 449.65 L256.92 449.64 L256.89 449.64 L256.85 449.64 L256.82 449.66 L256.79 449.69 L256.76 449.73 L256.72 449.78 L256.69 449.83 L256.65 449.88 L256.60 449.91 L256.55 449.92 L256.50 449.92 L256.45 449.91 L256.39 449.90 L256.33 449.90 L256.27 449.91 L256.21 449.94 L256.15 449.98 L256.09 450.04 L256.02 450.09 L255.96 450.13 L255.89 450.16 L255.81 450.18 L255.73 450.18 L255.65 450.18 L255.57 450.17 L255.48 450.17 L255.39 450.16 L255.29 450.17 L255.18 450.17 L255.08 450.17 L254.96 450.17 L254.85 450.17 L254.72 450.17 L254.60 450.18 L254.48 450.20 L254.36 450.22 L254.23 450.23 L254.07 450.22 L253.89 450.17 L253.70 450.10 L253.49 450.02 L253.26 449.91 L253.01 449.78 L252.72 449.62 L252.40 449.43 L252.04 449.21 L251.65 448.97 L251.23 448.69 L250.79 448.39 L250.31 448.06 L249.82 447.71 L249.31 447.33 L248.78 446.94 L248.23 446.52 L247.64 446.06 L247.01 445.57 L246.33 445.03 L245.59 444.44 L244.81 443.82 L243.99 443.15 L243.12 442.45 L242.22 441.71 L241.28 440.94 L240.32 440.12 L239.32 439.27 L238.29 438.38 L237.22 437.46 L236.10 436.50 L234.93 435.51 L233.71 434.50 L232.46 433.46 L231.17 432.38 L229.81 431.27 L228.39 430.09 L226.89 428.85 L225.30 427.55 L223.64 426.19 L221.90 424.78 L220.11 423.31 L218.25 421.78 L216.34 420.20 L214.38 418.58 L212.38 416.93 L210.31 415.23 L208.18 413.45 L205.96 411.57 L203.65 409.58 L201.26 407.49 L198.79 405.33 L196.24 403.07 L193.60 400.69 L190.88 398.17 L188.07 395.50 L185.20 392.73 L182.29 389.91 L179.29 386.95 L176.16 383.78 L172.87 380.29 L169.36 376.43 L165.63 372.19 L161.70 367.65 L157.61 362.81 L153.36 357.66 L149.00 352.21 L144.53 346.44 L139.93 340.36 L135.18 333.96 L130.31 327.26 L125.34 320.26 L120.30 312.98 L115.22 305.44 L110.05 297.56 L104.76 289.33 L99.40 280.81 L94.02 272.09 L88.68 263.27 L83.42 254.40 L78.17 245.42 L72.88 236.23 L67.62 226.93 L62.47 217.60 L57.51 208.34 L52.81 199.22 L48.35 190.16 L44.06 181.08 L39.95 172.07 L36.05 163.20 L32.35 154.55 L28.89 146.23 L25.65 138.17 L22.62 130.30 L19.81 122.66 L17.21 115.29 L14.82 108.24 L12.66 101.56 L10.74 95.25 L9.05 89.27 L7.58 83.62 L6.30 78.26 L5.21 73.18 L4.26 68.37 L3.50 63.85 L2.92 59.65 L2.52 55.73 L2.29 52.05 L2.20 48.57 L2.23 45.25 L2.41 42.12 L2.75 39.21 L3.23 36.50 L3.84 33.96 L4.58 31.60 L5.43 29.37 L6.41 27.30 L7.53 25.40 L8.77 23.66 L10.11 22.07 L11.55 20.62 L13.06 19.29 L14.65 18.11 L16.35 17.09 L18.13 16.20 L19.99 15.44 L21.90 14.76 L23.86 14.14 L25.87 13.62 L27.95 13.22 L30.09 12.90 L32.27 12.65 L34.49 12.44 L36.72 12.24 L38.99 12.07 L41.30 11.96 L43.64 11.88 L46.01 11.83 L48.38 11.80 L50.74 11.77 L53.09 11.76 L55.45 11.77 L57.81 11.79 L60.18 11.83 L62.57 11.88 L64.98 11.95 L67.41 12.03 L69.84 12.13 L72.30 12.24 L74.78 12.36 L77.28 12.50 L79.83 12.65 L82.42 12.81 L85.03 12.98 L87.68 13.17 L90.36 13.37 L93.08 13.58 L95.84 13.80 L98.64 14.03 L101.47 14.28 L104.34 14.54 L107.26 14.81 L110.22 15.08 L113.23 15.37 L116.29 15.67 L119.40 15.98 L122.55 16.29 L125.75 16.62 L129.02 16.96 L132.34 17.30 L135.73 17.66 L139.17 18.02 L142.67 18.40 L146.23 18.78 L149.85 19.17 L153.53 19.58 L157.28 19.99 L161.08 20.41 L164.95 20.85 L168.88 21.29 L172.89 21.74 L176.96 22.20 L181.11 22.66 L185.33 23.14 L189.62 23.62 L193.98 24.11 L198.41 24.62 L202.91 25.13 L207.48 25.65 L212.13 26.18 L216.84 26.72 L221.63 27.27 L226.48 27.83 L231.42 28.40 L236.42 28.97 L241.50 29.56 L246.65 30.15 L251.87 30.75 L257.16 31.36 L262.51 31.98 L267.94 32.61 L273.44 33.24 L279.01 33.88 L284.64 34.53 L290.32 35.19 L296.05 35.84 L301.84 36.51 L307.70 37.18 L313.61 37.86 L319.56 38.54 L325.54 39.22 L331.53 39.91 L337.56 40.61 L343.65 41.31 L349.76 42.02 L355.88 42.73 L361.96 43.43 L367.98 44.13 L373.94 44.81 L379.87 45.50 L385.77 46.18 L391.64 46.85 L397.49 47.52 L403.31 48.19 L409.13 48.86 L414.96 49.53 L420.76 50.20 L426.50 50.86 L432.16 51.51 L437.69 52.14 L443.11 52.76 L448.45 53.37 L453.70 53.97 L458.85 54.56 L463.90 55.13 L468.84 55.70 L473.69 56.25 L478.44 56.80 L483.09 57.34 L487.64 57.87 L492.07 58.38 L496.38 58.88 L500.56 59.36 L504.63 59.83 L508.59 60.29 L512.43 60.74 L516.17 61.17 L519.81 61.59 L523.33 61.99 L526.74 62.38 L530.05 62.76 L533.25 63.12 L536.38 63.48 L539.42 63.83 L542.38 64.17 L545.25 64.50 L548.03 64.82 L550.73 65.13 L553.37 65.44 L555.97 65.74 L558.51 66.03 L560.99 66.32 L563.42 66.60 L565.78 66.87 L568.07 67.13 L570.31 67.39 L572.49 67.64 L574.60 67.89 L576.66 68.13 L578.65 68.36 L580.58 68.58 L582.44 68.79 L584.23 69.00 L585.96 69.19 L587.62 69.38 L589.22 69.56 L590.76 69.73 L592.24 69.90 L593.66 70.06 L595.01 70.22 L596.29 70.36 L597.52 70.51 L598.71 70.64 L599.86 70.78 L600.96 70.90 L602.01 71.03 L603.02 71.14 L603.98 71.25 L604.90 71.36 L605.78 71.46 L606.62 71.56 L607.43 71.65 L608.19 71.74 L608.90 71.82 L609.58 71.90 L610.21 71.97 L610.79 72.04 L611.31 72.10 L611.79 72.15 L612.23 72.21 L612.67 72.26 L613.10 72.31 L613.51 72.35 L613.88 72.40 L614.24 72.44 L614.61 72.48 L615.01 72.53 L615.48 72.58 L616.03 72.64 L616.63 72.71 L617.28 72.79 L617.93 72.86 L618.59 72.94 L619.21 73.01 L619.84 73.09 L620.52 73.16 L621.19 73.24 L621.80 73.31 L622.32 73.37 L622.70 73.41 Z"/></clipPath></defs><g clip-path="url(#hs)" shape-rendering="crispEdges"><rect x="0" y="0" width="12" height="12" fill="#009c00"/><rect x="12" y="0" width="12" height="12" fill="#009c00"/><rect x="24" y="0" width="12" height="12" fill="#009c00"/><rect x="36" y="0" width="12" height="12" fill="#009c00"/><rect x="48" y="0" width="12" height="12" fill="#009c00"/><rect x="60" y="0" width="12" height="12" fill="#009c00"/><rect x="72" y="0" width="12" height="12" fill="#009c00"/><rect x="84" y="0" width="12" height="12" fill="#009c00"/><rect x="96" y="0" width="12" height="12" fill="#009c00"/><rect x="108" y="0" width="12" height="12" fill="#009c00"/><rect x="120" y="0" width="12" height="12" fill="#069c00"/><rect x="132" y="0" width="12" height="12" fill="#189c00"/><rect x="144" y="0" width="12" height="12" fill="#2b9c00"/><rect x="156" y="0" width="12" height="12" fill="#409c00"/><rect x="168" y="0" width="12" height="12" fill="#569c00"/><rect x="180" y="0" width="12" height="12" fill="#6d9c00"/><rect x="192" y="0" width="12" height="12" fill="#879c00"/><rect x="204" y="0" width="12" height="12" fill="#9c9500"/><rect x="216" y="0" width="12" height="12" fill="#9c7e00"/><rect x="228" y="0" width="12" height="12" fill="#9c6c00"/><rect x="240" y="0" width="12" height="12" fill="#9c5d00"/><rect x="252" y="0" width="12" height="12" fill="#9c5100"/><rect x="264" y="0" width="12" height="12" fill="#9c4700"/><rect x="276" y="0" width="12" height="12" fill="#9c3e00"/><rect x="288" y="0" width="12" height="12" fill="#9c3700"/><rect x="300" y="0" width="12" height="12" fill="#9c3000"/><rect x="312" y="0" width="12" height="12" fill="#9c2b00"/><rect x="324" y="0" width="12" height="12" fill="#9c2600"/><rect x="336" y="0" width="12" height="12" fill="#9c2100"/><rect x="348" y="0" width="12" height="12" fill="#9c1d00"/><rect x="360" y="0" width="12" height="12" fill="#9c1900"/><rect x="372" y="0" width="12" height="12" fill="#9c1600"/><rect x="384" y="0" width="12" height="12" fill="#9c1300"/><rect x="396" y="0" width="12" height="12" fill="#9c1000"/><rect x="408" y="0" width="12" height="12" fill="#9c0e00"/><rect x="420" y="0" width="12" height="12" fill="#9c0c00"/><rect x="432" y="0" width="12" height="12" fill="#9c0900"/><rect x="444" y="0" width="12" height="12" fill="#9c0700"/><rect x="456" y="0" width="12" height="12" fill="#9c0600"/><rect x="468" y="0" width="12" height="12" fill="#9c0400"/><rect x="480" y="0" width="12" height="12" fill="#9c0200"/><rect x="492" y="0" width="12" height="12" fill="#9c0100"/><rect x="504" y="0" width="12" height="12" fill="#9c0000"/><rect x="516" y="0" width="12" height="12" fill="#9c0000"/><rect x="528" y="0" width="12" height="12" fill="#9c0000"/><rect x="540" y="0" width="12" height="12" fill="#9c0000"/><rect x="552" y="0" width="12" height="12" fill="#9c0000"/><rect x="564" y="0" width="12" height="12" fill="#9c0000"/><rect x="576" y="0" width="12" height="12" fill="#9c0000"/><rect x="588" y="0" width="12" height="12" fill="#9c0000"/><rect x="600" y="0" width="12" height="12" fill="#9c0000"/><rect x="612" y="0" width="12" height="12" fill="#9c0000"/><rect x="0" y="12" width="12" height="12" fill="#009c00"/><rect x="12" y="12" width="12" height="12" fill="#009c00"/><rect x="24" y="12" width="12" height="12" fill="#009c00"/><rect x="36" y="12" width="12" height="12" fill="#009c00"/><rect x="48" y="12" width="12" height="12" fill="#009c00"/><rect x="60" y="12" width="12" height="12" fill="#009c00"/><rect x="72" y="12" width="12" height="12" fill="#009c00"/><rect x="84" y="12" width="12" height="12" fill="#009c00"/><rect x="96" y="12" width="12" height="12" fill="#009c00"/><rect x="108" y="12" width="12" height="12" fill="#009c00"/><rect x="120" y="12" width="12" height="12" fill="#049c00"/><rect x="132" y="12" width="12" height="12" fill="#169c00"/><rect x="144" y="12" width="12" height="12" fill="#2a9c00"/><rect x="156" y="12" width="12" height="12" fill="#3f9c00"/><rect x="168" y="12" width="12" height="12" fill="#569c00"/><rect x="180" y="12" width="12" height="12" fill="#6e9c00"/><rect x="192" y="12" width="12" height="12" fill="#889c00"/><rect x="204" y="12" width="12" height="12" fill="#9c9300"/><rect x="216" y="12" width="12" height="12" fill="#9c7b00"/><rect x="228" y="12" width="12" height="12" fill="#9c6900"/><rect x="240" y="12" width="12" height="12" fill="#9c5a00"/><rect x="252" y="12" width="12" height="12" fill="#9c4e00"/><rect x="264" y="12" width="12" height="12" fill="#9c4400"/><rect x="276" y="12" width="12" height="12" fill="#9c3c00"/><rect x="288" y="12" width="12" height="12" fill="#9c3400"/><rect x="300" y="12" width="12" height="12" fill="#9c2e00"/><rect x="312" y="12" width="12" height="12" fill="#9c2800"/><rect x="324" y="12" width="12" height="12" fill="#9c2300"/><rect x="336" y="12" width="12" height="12" fill="#9c1f00"/><rect x="348" y="12" width="12" height="12" fill="#9c1b00"/><rect x="360" y="12" width="12" height="12" fill="#9c1700"/><rect x="372" y="12" width="12" height="12" fill="#9c1400"/><rect x="384" y="12" width="12" height="12" fill="#9c1100"/><rect x="396" y="12" width="12" height="12" fill="#9c0f00"/><rect x="408" y="12" width="12" height="12" fill="#9c0c00"/><rect x="420" y="12" width="12" height="12" fill="#9c0a00"/><rect x="432" y="12" width="12" height="12" fill="#9c0800"/><rect x="444" y="12" width="12" height="12" fill="#9c0600"/><rect x="456" y="12" width="12" height="12" fill="#9c0400"/><rect x="468" y="12" width="12" height="12" fill="#9c0200"/><rect x="480" y="12" width="12" height="12" fill="#9c0100"/><rect x="492" y="12" width="12" height="12" fill="#9c0000"/><rect x="504" y="12" width="12" height="12" fill="#9c0000"/><rect x="516" y="12" width="12" height="12" fill="#9c0000"/><rect x="528" y="12" width="12" height="12" fill="#9c0000"/><rect x="540" y="12" width="12" height="12" fill="#9c0000"/><rect x="552" y="12" width="12" height="12" fill="#9c0000"/><rect x="564" y="12" width="12" height="12" fill="#9c0000"/><rect x="576" y="12" width="12" height="12" fill="#9c0000"/><rect x="588" y="12" width="12" height="12" fill="#9c0000"/><rect x="600" y="12" width="12" height="12" fill="#9c0000"/><rect x="612" y="12" width="12" height="12" fill="#9c0000"/><rect x="0" y="24" width="12" height="12" fill="#009c0b"/><rect x="12" y="24" width="12" height="12" fill="#009c0a"/><rect x="24" y="24" width="12" height="12" fill="#009c0a"/><rect x="36" y="24" width="12" height="12" fill="#009c08"/><rect x="48" y="24" width="12" height="12" fill="#009c07"/><rect x="60" y="24" width="12" height="12" fill="#009c06"/><rect x="72" y="24" width="12" height="12" fill="#009c05"/><rect x="84" y="24" width="12" height="12" fill="#009c04"/><rect x="96" y="24" width="12" height="12" fill="#009c02"/><rect x="108" y="24" width="12" height="12" fill="#009c01"/><rect x="120" y="24" width="12" height="12" fill="#019c00"/><rect x="132" y="24" width="12" height="12" fill="#149c00"/><rect x="144" y="24" width="12" height="12" fill="#289c00"/><rect x="156" y="24" width="12" height="12" fill="#3e9c00"/><rect x="168" y="24" width="12" height="12" fill="#559c00"/><rect x="180" y="24" width="12" height="12" fill="#6f9c00"/><rect x="192" y="24" width="12" height="12" fill="#8a9c00"/><rect x="204" y="24" width="12" height="12" fill="#9c9000"/><rect x="216" y="24" width="12" height="12" fill="#9c7800"/><rect x="228" y="24" width="12" height="12" fill="#9c6600"/><rect x="240" y="24" width="12" height="12" fill="#9c5700"/><rect x="252" y="24" width="12" height="12" fill="#9c4b00"/><rect x="264" y="24" width="12" height="12" fill="#9c4100"/><rect x="276" y="24" width="12" height="12" fill="#9c3900"/><rect x="288" y="24" width="12" height="12" fill="#9c3200"/><rect x="300" y="24" width="12" height="12" fill="#9c2b00"/><rect x="312" y="24" width="12" height="12" fill="#9c2600"/><rect x="324" y="24" width="12" height="12" fill="#9c2100"/><rect x="336" y="24" width="12" height="12" fill="#9c1d00"/><rect x="348" y="24" width="12" height="12" fill="#9c1900"/><rect x="360" y="24" width="12" height="12" fill="#9c1500"/><rect x="372" y="24" width="12" height="12" fill="#9c1200"/><rect x="384" y="24" width="12" height="12" fill="#9c0f00"/><rect x="396" y="24" width="12" height="12" fill="#9c0d00"/><rect x="408" y="24" width="12" height="12" fill="#9c0a00"/><rect x="420" y="24" width="12" height="12" fill="#9c0800"/><rect x="432" y="24" width="12" height="12" fill="#9c0600"/><rect x="444" y="24" width="12" height="12" fill="#9c0400"/><rect x="456" y="24" width="12" height="12" fill="#9c0200"/><rect x="468" y="24" width="12" height="12" fill="#9c0100"/><rect x="480" y="24" width="12" height="12" fill="#9c0000"/><rect x="492" y="24" width="12" height="12" fill="#9c0000"/><rect x="504" y="24" width="12" height="12" fill="#9c0000"/><rect x="516" y="24" width="12" height="12" fill="#9c0000"/><rect x="528" y="24" width="12" height="12" fill="#9c0000"/><rect x="540" y="24" width="12" height="12" fill="#9c0000"/><rect x="552" y="24" width="12" height="12" fill="#9c0000"/><rect x="564" y="24" width="12" height="12" fill="#9c0000"/><rect x="576" y="24" width="12" height="12" fill="#9c0000"/><rect x="588" y="24" width="12" height="12" fill="#9c0000"/><rect x="600" y="24" width="12" height="12" fill="#9c0000"/><rect x="612" y="24" width="12" height="12" fill="#9c0000"/><rect x="0" y="36" width="12" height="12" fill="#009c19"/><rect x="12" y="36" width="12" height="12" fill="#009c18"/><rect x="24" y="36" width="12" height="12" fill="#009c17"/><rect x="36" y="36" width="12" height="12" fill="#009c17"/><rect x="48" y="36" width="12" height="12" fill="#009c16"/><rect x="60" y="36" width="12" height="12" fill="#009c15"/><rect x="72" y="36" width="12" height="12" fill="#009c15"/><rect x="84" y="36" width="12" height="12" fill="#009c14"/><rect x="96" y="36" width="12" height="12" fill="#009c13"/><rect x="108" y="36" width="12" height="12" fill="#009c12"/><rect x="120" y="36" width="12" height="12" fill="#009c11"/><rect x="132" y="36" width="12" height="12" fill="#119c10"/><rect x="144" y="36" width="12" height="12" fill="#269c0f"/><rect x="156" y="36" width="12" height="12" fill="#3d9c0d"/><rect x="168" y="36" width="12" height="12" fill="#559c0c"/><rect x="180" y="36" width="12" height="12" fill="#709c0b"/><rect x="192" y="36" width="12" height="12" fill="#8d9c09"/><rect x="204" y="36" width="12" height="12" fill="#9c8d06"/><rect x="216" y="36" width="12" height="12" fill="#9c7504"/><rect x="228" y="36" width="12" height="12" fill="#9c6302"/><rect x="240" y="36" width="12" height="12" fill="#9c5400"/><rect x="252" y="36" width="12" height="12" fill="#9c4800"/><rect x="264" y="36" width="12" height="12" fill="#9c3f00"/><rect x="276" y="36" width="12" height="12" fill="#9c3600"/><rect x="288" y="36" width="12" height="12" fill="#9c2f00"/><rect x="300" y="36" width="12" height="12" fill="#9c2900"/><rect x="312" y="36" width="12" height="12" fill="#9c2400"/><rect x="324" y="36" width="12" height="12" fill="#9c1f00"/><rect x="336" y="36" width="12" height="12" fill="#9c1b00"/><rect x="348" y="36" width="12" height="12" fill="#9c1700"/><rect x="360" y="36" width="12" height="12" fill="#9c1300"/><rect x="372" y="36" width="12" height="12" fill="#9c1000"/><rect x="384" y="36" width="12" height="12" fill="#9c0d00"/><rect x="396" y="36" width="12" height="12" fill="#9c0b00"/><rect x="408" y="36" width="12" height="12" fill="#9c0900"/><rect x="420" y="36" width="12" height="12" fill="#9c0600"/><rect x="432" y="36" width="12" height="12" fill="#9c0400"/><rect x="444" y="36" width="12" height="12" fill="#9c0300"/><rect x="456" y="36" width="12" height="12" fill="#9c0100"/><rect x="468" y="36" width="12" height="12" fill="#9c0000"/><rect x="480" y="36" width="12" height="12" fill="#9c0000"/><rect x="492" y="36" width="12" height="12" fill="#9c0000"/><rect x="504" y="36" width="12" height="12" fill="#9c0000"/><rect x="516" y="36" width="12" height="12" fill="#9c0000"/><rect x="528" y="36" width="12" height="12" fill="#9c0000"/><rect x="540" y="36" width="12" height="12" fill="#9c0000"/><rect x="552" y="36" width="12" height="12" fill="#9c0000"/><rect x="564" y="36" width="12" height="12" fill="#9c0000"/><rect x="576" y="36" width="12" height="12" fill="#9c0000"/><rect x="588" y="36" width="12" height="12" fill="#9c0000"/><rect x="600" y="36" width="12" height="12" fill="#9c0000"/><rect x="612" y="36" width="12" height="12" fill="#9c0000"/><rect x="0" y="48" width="12" height="12" fill="#009c27"/><rect x="12" y="48" width="12" height="12" fill="#009c26"/><rect x="24" y="48" width="12" height="12" fill="#009c26"/><rect x="36" y="48" width="12" height="12" fill="#009c26"/><rect x="48" y="48" width="12" height="12" fill="#009c26"/><rect x="60" y="48" width="12" height="12" fill="#009c25"/><rect x="72" y="48" width="12" height="12" fill="#009c25"/><rect x="84" y="48" width="12" height="12" fill="#009c25"/><rect x="96" y="48" width="12" height="12" fill="#009c24"/><rect x="108" y="48" width="12" height="12" fill="#009c24"/><rect x="120" y="48" width="12" height="12" fill="#009c24"/><rect x="132" y="48" width="12" height="12" fill="#0f9c23"/><rect x="144" y="48" width="12" height="12" fill="#249c23"/><rect x="156" y="48" width="12" height="12" fill="#3c9c22"/><rect x="168" y="48" width="12" height="12" fill="#559c22"/><rect x="180" y="48" width="12" height="12" fill="#719c21"/><rect x="192" y="48" width="12" height="12" fill="#8f9c21"/><rect x="204" y="48" width="12" height="12" fill="#9c891c"/><rect x="216" y="48" width="12" height="12" fill="#9c7217"/><rect x="228" y="48" width="12" height="12" fill="#9c6013"/><rect x="240" y="48" width="12" height="12" fill="#9c510f"/><rect x="252" y="48" width="12" height="12" fill="#9c450d"/><rect x="264" y="48" width="12" height="12" fill="#9c3c0a"/><rect x="276" y="48" width="12" height="12" fill="#9c3308"/><rect x="288" y="48" width="12" height="12" fill="#9c2c07"/><rect x="300" y="48" width="12" height="12" fill="#9c2605"/><rect x="312" y="48" width="12" height="12" fill="#9c2104"/><rect x="324" y="48" width="12" height="12" fill="#9c1c03"/><rect x="336" y="48" width="12" height="12" fill="#9c1802"/><rect x="348" y="48" width="12" height="12" fill="#9c1501"/><rect x="360" y="48" width="12" height="12" fill="#9c1101"/><rect x="372" y="48" width="12" height="12" fill="#9c0e00"/><rect x="384" y="48" width="12" height="12" fill="#9c0c00"/><rect x="396" y="48" width="12" height="12" fill="#9c0900"/><rect x="408" y="48" width="12" height="12" fill="#9c0700"/><rect x="420" y="48" width="12" height="12" fill="#9c0500"/><rect x="432" y="48" width="12" height="12" fill="#9c0300"/><rect x="444" y="48" width="12" height="12" fill="#9c0100"/><rect x="456" y="48" width="12" height="12" fill="#9c0000"/><rect x="468" y="48" width="12" height="12" fill="#9c0000"/><rect x="480" y="48" width="12" height="12" fill="#9c0000"/><rect x="492" y="48" width="12" height="12" fill="#9c0000"/><rect x="504" y="48" width="12" height="12" fill="#9c0000"/><rect x="516" y="48" width="12" height="12" fill="#9c0000"/><rect x="528" y="48" width="12" height="12" fill="#9c0000"/><rect x="540" y="48" width="12" height="12" fill="#9c0000"/><rect x="552" y="48" width="12" height="12" fill="#9c0000"/><rect x="564" y="48" width="12" height="12" fill="#9c0000"/><rect x="576" y="48" width="12" height="12" fill="#9c0000"/><rect x="588" y="48" width="12" height="12" fill="#9c0000"/><rect x="600" y="48" width="12" height="12" fill="#9c0000"/><rect x="612" y="48" width="12" height="12" fill="#9c0000"/><rect x="0" y="60" width="12" height="12" fill="#009c35"/><rect x="12" y="60" width="12" height="12" fill="#009c36"/><rect x="24" y="60" width="12" height="12" fill="#009c36"/><rect x="36" y="60" width="12" height="12" fill="#009c36"/><rect x="48" y="60" width="12" height="12" fill="#009c36"/><rect x="60" y="60" width="12" height="12" fill="#009c36"/><rect x="72" y="60" width="12" height="12" fill="#009c37"/><rect x="84" y="60" width="12" height="12" fill="#009c37"/><rect x="96" y="60" width="12" height="12" fill="#009c37"/><rect x="108" y="60" width="12" height="12" fill="#009c38"/><rect x="120" y="60" width="12" height="12" fill="#009c38"/><rect x="132" y="60" width="12" height="12" fill="#0c9c38"/><rect x="144" y="60" width="12" height="12" fill="#229c39"/><rect x="156" y="60" width="12" height="12" fill="#3a9c39"/><rect x="168" y="60" width="12" height="12" fill="#559c39"/><rect x="180" y="60" width="12" height="12" fill="#729c3a"/><rect x="192" y="60" width="12" height="12" fill="#919c3a"/><rect x="204" y="60" width="12" height="12" fill="#9c8633"/><rect x="216" y="60" width="12" height="12" fill="#9c6f2a"/><rect x="228" y="60" width="12" height="12" fill="#9c5c24"/><rect x="240" y="60" width="12" height="12" fill="#9c4e1f"/><rect x="252" y="60" width="12" height="12" fill="#9c421a"/><rect x="264" y="60" width="12" height="12" fill="#9c3917"/><rect x="276" y="60" width="12" height="12" fill="#9c3114"/><rect x="288" y="60" width="12" height="12" fill="#9c2a12"/><rect x="300" y="60" width="12" height="12" fill="#9c240f"/><rect x="312" y="60" width="12" height="12" fill="#9c1f0e"/><rect x="324" y="60" width="12" height="12" fill="#9c1a0c"/><rect x="336" y="60" width="12" height="12" fill="#9c160b"/><rect x="348" y="60" width="12" height="12" fill="#9c1209"/><rect x="360" y="60" width="12" height="12" fill="#9c0f08"/><rect x="372" y="60" width="12" height="12" fill="#9c0c07"/><rect x="384" y="60" width="12" height="12" fill="#9c0a06"/><rect x="396" y="60" width="12" height="12" fill="#9c0705"/><rect x="408" y="60" width="12" height="12" fill="#9c0504"/><rect x="420" y="60" width="12" height="12" fill="#9c0304"/><rect x="432" y="60" width="12" height="12" fill="#9c0103"/><rect x="444" y="60" width="12" height="12" fill="#9c0002"/><rect x="456" y="60" width="12" height="12" fill="#9c0002"/><rect x="468" y="60" width="12" height="12" fill="#9c0001"/><rect x="480" y="60" width="12" height="12" fill="#9c0001"/><rect x="492" y="60" width="12" height="12" fill="#9c0000"/><rect x="504" y="60" width="12" height="12" fill="#9c0000"/><rect x="516" y="60" width="12" height="12" fill="#9c0000"/><rect x="528" y="60" width="12" height="12" fill="#9c0000"/><rect x="540" y="60" width="12" height="12" fill="#9c0000"/><rect x="552" y="60" width="12" height="12" fill="#9c0000"/><rect x="564" y="60" width="12" height="12" fill="#9c0000"/><rect x="576" y="60" width="12" height="12" fill="#9c0000"/><rect x="588" y="60" width="12" height="12" fill="#9c0000"/><rect x="600" y="60" width="12" height="12" fill="#9c0000"/><rect x="612" y="60" width="12" height="12" fill="#9c0000"/><rect x="0" y="72" width="12" height="12" fill="#009c45"/><rect x="12" y="72" width="12" height="12" fill="#009c46"/><rect x="24" y="72" width="12" height="12" fill="#009c46"/><rect x="36" y="72" width="12" height="12" fill="#009c47"/><rect x="48" y="72" width="12" height="12" fill="#009c48"/><rect x="60" y="72" width="12" height="12" fill="#009c49"/><rect x="72" y="72" width="12" height="12" fill="#009c49"/><rect x="84" y="72" width="12" height="12" fill="#009c4a"/><rect x="96" y="72" width="12" height="12" fill="#009c4b"/><rect x="108" y="72" width="12" height="12" fill="#009c4c"/><rect x="120" y="72" width="12" height="12" fill="#009c4e"/><rect x="132" y="72" width="12" height="12" fill="#099c4f"/><rect x="144" y="72" width="12" height="12" fill="#209c50"/><rect x="156" y="72" width="12" height="12" fill="#399c52"/><rect x="168" y="72" width="12" height="12" fill="#559c53"/><rect x="180" y="72" width="12" height="12" fill="#739c55"/><rect x="192" y="72" width="12" height="12" fill="#949c57"/><rect x="204" y="72" width="12" height="12" fill="#9c834b"/><rect x="216" y="72" width="12" height="12" fill="#9c6b3f"/><rect x="228" y="72" width="12" height="12" fill="#9c5936"/><rect x="240" y="72" width="12" height="12" fill="#9c4b2f"/><rect x="252" y="72" width="12" height="12" fill="#9c3f29"/><rect x="264" y="72" width="12" height="12" fill="#9c3624"/><rect x="276" y="72" width="12" height="12" fill="#9c2e20"/><rect x="288" y="72" width="12" height="12" fill="#9c271d"/><rect x="300" y="72" width="12" height="12" fill="#9c211a"/><rect x="312" y="72" width="12" height="12" fill="#9c1c17"/><rect x="324" y="72" width="12" height="12" fill="#9c1815"/><rect x="336" y="72" width="12" height="12" fill="#9c1413"/><rect x="348" y="72" width="12" height="12" fill="#9c1011"/><rect x="360" y="72" width="12" height="12" fill="#9c0d10"/><rect x="372" y="72" width="12" height="12" fill="#9c0a0e"/><rect x="384" y="72" width="12" height="12" fill="#9c080d"/><rect x="396" y="72" width="12" height="12" fill="#9c050c"/><rect x="408" y="72" width="12" height="12" fill="#9c030b"/><rect x="420" y="72" width="12" height="12" fill="#9c010a"/><rect x="432" y="72" width="12" height="12" fill="#9c0009"/><rect x="444" y="72" width="12" height="12" fill="#9c0008"/><rect x="456" y="72" width="12" height="12" fill="#9c0007"/><rect x="468" y="72" width="12" height="12" fill="#9c0006"/><rect x="480" y="72" width="12" height="12" fill="#9c0006"/><rect x="492" y="72" width="12" height="12" fill="#9c0005"/><rect x="504" y="72" width="12" height="12" fill="#9c0004"/><rect x="516" y="72" width="12" height="12" fill="#9c0004"/><rect x="528" y="72" width="12" height="12" fill="#9c0003"/><rect x="540" y="72" width="12" height="12" fill="#9c0003"/><rect x="552" y="72" width="12" height="12" fill="#9c0002"/><rect x="564" y="72" width="12" height="12" fill="#9c0002"/><rect x="576" y="72" width="12" height="12" fill="#9c0002"/><rect x="588" y="72" width="12" height="12" fill="#9c0001"/><rect x="600" y="72" width="12" height="12" fill="#9c0001"/><rect x="612" y="72" width="12" height="12" fill="#9c0000"/><rect x="0" y="84" width="12" height="12" fill="#009c55"/><rect x="12" y="84" width="12" height="12" fill="#009c57"/><rect x="24" y="84" width="12" height="12" fill="#009c58"/><rect x="36" y="84" width="12" height="12" fill="#009c59"/><rect x="48" y="84" width="12" height="12" fill="#009c5a"/><rect x="60" y="84" width="12" height="12" fill="#009c5c"/><rect x="72" y="84" width="12" height="12" fill="#009c5d"/><rect x="84" y="84" width="12" height="12" fill="#009c5f"/><rect x="96" y="84" width="12" height="12" fill="#009c61"/><rect x="108" y="84" width="12" height="12" fill="#009c63"/><rect x="120" y="84" width="12" height="12" fill="#009c65"/><rect x="132" y="84" width="12" height="12" fill="#059c67"/><rect x="144" y="84" width="12" height="12" fill="#1d9c6a"/><rect x="156" y="84" width="12" height="12" fill="#389c6c"/><rect x="168" y="84" width="12" height="12" fill="#549c6f"/><rect x="180" y="84" width="12" height="12" fill="#749c73"/><rect x="192" y="84" width="12" height="12" fill="#979c76"/><rect x="204" y="84" width="12" height="12" fill="#9c7f64"/><rect x="216" y="84" width="12" height="12" fill="#9c6754"/><rect x="228" y="84" width="12" height="12" fill="#9c5548"/><rect x="240" y="84" width="12" height="12" fill="#9c473f"/><rect x="252" y="84" width="12" height="12" fill="#9c3c38"/><rect x="264" y="84" width="12" height="12" fill="#9c3331"/><rect x="276" y="84" width="12" height="12" fill="#9c2b2c"/><rect x="288" y="84" width="12" height="12" fill="#9c2428"/><rect x="300" y="84" width="12" height="12" fill="#9c1e24"/><rect x="312" y="84" width="12" height="12" fill="#9c1a21"/><rect x="324" y="84" width="12" height="12" fill="#9c151e"/><rect x="336" y="84" width="12" height="12" fill="#9c111c"/><rect x="348" y="84" width="12" height="12" fill="#9c0e19"/><rect x="360" y="84" width="12" height="12" fill="#9c0b17"/><rect x="372" y="84" width="12" height="12" fill="#9c0815"/><rect x="384" y="84" width="12" height="12" fill="#9c0614"/><rect x="396" y="84" width="12" height="12" fill="#9c0312"/><rect x="408" y="84" width="12" height="12" fill="#9c0111"/><rect x="420" y="84" width="12" height="12" fill="#9c0010"/><rect x="432" y="84" width="12" height="12" fill="#9c000e"/><rect x="444" y="84" width="12" height="12" fill="#9c000d"/><rect x="456" y="84" width="12" height="12" fill="#9c000c"/><rect x="468" y="84" width="12" height="12" fill="#9c000c"/><rect x="480" y="84" width="12" height="12" fill="#9c000b"/><rect x="492" y="84" width="12" height="12" fill="#9c000a"/><rect x="504" y="84" width="12" height="12" fill="#9c0009"/><rect x="516" y="84" width="12" height="12" fill="#9c0008"/><rect x="528" y="84" width="12" height="12" fill="#9c0008"/><rect x="540" y="84" width="12" height="12" fill="#9c0007"/><rect x="552" y="84" width="12" height="12" fill="#9c0007"/><rect x="564" y="84" width="12" height="12" fill="#9c0006"/><rect x="576" y="84" width="12" height="12" fill="#9c0005"/><rect x="588" y="84" width="12" height="12" fill="#9c0005"/><rect x="600" y="84" width="12" height="12" fill="#9c0004"/><rect x="612" y="84" width="12" height="12" fill="#9c0004"/><rect x="0" y="96" width="12" height="12" fill="#009c67"/><rect x="12" y="96" width="12" height="12" fill="#009c68"/><rect x="24" y="96" width="12" height="12" fill="#009c6a"/><rect x="36" y="96" width="12" height="12" fill="#009c6c"/><rect x="48" y="96" width="12" height="12" fill="#009c6e"/><rect x="60" y="96" width="12" height="12" fill="#009c70"/><rect x="72" y="96" width="12" height="12" fill="#009c73"/><rect x="84" y="96" width="12" height="12" fill="#009c75"/><rect x="96" y="96" width="12" height="12" fill="#009c78"/><rect x="108" y="96" width="12" height="12" fill="#009c7b"/><rect x="120" y="96" width="12" height="12" fill="#009c7e"/><rect x="132" y="96" width="12" height="12" fill="#029c82"/><rect x="144" y="96" width="12" height="12" fill="#1b9c86"/><rect x="156" y="96" width="12" height="12" fill="#369c8a"/><rect x="168" y="96" width="12" height="12" fill="#549c8e"/><rect x="180" y="96" width="12" height="12" fill="#769c94"/><rect x="192" y="96" width="12" height="12" fill="#9b9c99"/><rect x="204" y="96" width="12" height="12" fill="#9c7b7e"/><rect x="216" y="96" width="12" height="12" fill="#9c636b"/><rect x="228" y="96" width="12" height="12" fill="#9c525c"/><rect x="240" y="96" width="12" height="12" fill="#9c4450"/><rect x="252" y="96" width="12" height="12" fill="#9c3847"/><rect x="264" y="96" width="12" height="12" fill="#9c2f3f"/><rect x="276" y="96" width="12" height="12" fill="#9c2839"/><rect x="288" y="96" width="12" height="12" fill="#9c2133"/><rect x="300" y="96" width="12" height="12" fill="#9c1c2f"/><rect x="312" y="96" width="12" height="12" fill="#9c172b"/><rect x="324" y="96" width="12" height="12" fill="#9c1327"/><rect x="336" y="96" width="12" height="12" fill="#9c0f24"/><rect x="348" y="96" width="12" height="12" fill="#9c0c21"/><rect x="360" y="96" width="12" height="12" fill="#9c091f"/><rect x="372" y="96" width="12" height="12" fill="#9c061d"/><rect x="384" y="96" width="12" height="12" fill="#9c041b"/><rect x="396" y="96" width="12" height="12" fill="#9c0119"/><rect x="408" y="96" width="12" height="12" fill="#9c0017"/><rect x="420" y="96" width="12" height="12" fill="#9c0016"/><rect x="432" y="96" width="12" height="12" fill="#9c0014"/><rect x="444" y="96" width="12" height="12" fill="#9c0013"/><rect x="456" y="96" width="12" height="12" fill="#9c0012"/><rect x="468" y="96" width="12" height="12" fill="#9c0011"/><rect x="480" y="96" width="12" height="12" fill="#9c0010"/><rect x="492" y="96" width="12" height="12" fill="#9c000f"/><rect x="504" y="96" width="12" height="12" fill="#9c000e"/><rect x="516" y="96" width="12" height="12" fill="#9c000d"/><rect x="528" y="96" width="12" height="12" fill="#9c000c"/><rect x="540" y="96" width="12" height="12" fill="#9c000b"/><rect x="552" y="96" width="12" height="12" fill="#9c000b"/><rect x="564" y="96" width="12" height="12" fill="#9c000a"/><rect x="576" y="96" width="12" height="12" fill="#9c0009"/><rect x="588" y="96" width="12" height="12" fill="#9c0009"/><rect x="600" y="96" width="12" height="12" fill="#9c0008"/><rect x="612" y="96" width="12" height="12" fill="#9c0008"/><rect x="0" y="108" width="12" height="12" fill="#009c79"/><rect x="12" y="108" width="12" height="12" fill="#009c7b"/><rect x="24" y="108" width="12" height="12" fill="#009c7e"/><rect x="36" y="108" width="12" height="12" fill="#009c81"/><rect x="48" y="108" width="12" height="12" fill="#009c83"/><rect x="60" y="108" width="12" height="12" fill="#009c87"/><rect x="72" y="108" width="12" height="12" fill="#009c8a"/><rect x="84" y="108" width="12" height="12" fill="#009c8d"/><rect x="96" y="108" width="12" height="12" fill="#009c91"/><rect x="108" y="108" width="12" height="12" fill="#009c95"/><rect x="120" y="108" width="12" height="12" fill="#009c9a"/><rect x="132" y="108" width="12" height="12" fill="#00989c"/><rect x="144" y="108" width="12" height="12" fill="#17939c"/><rect x="156" y="108" width="12" height="12" fill="#308e9c"/><rect x="168" y="108" width="12" height="12" fill="#4a899c"/><rect x="180" y="108" width="12" height="12" fill="#65839c"/><rect x="192" y="108" width="12" height="12" fill="#807e9c"/><rect x="204" y="108" width="12" height="12" fill="#9c779a"/><rect x="216" y="108" width="12" height="12" fill="#9c5f82"/><rect x="228" y="108" width="12" height="12" fill="#9c4e70"/><rect x="240" y="108" width="12" height="12" fill="#9c4062"/><rect x="252" y="108" width="12" height="12" fill="#9c3557"/><rect x="264" y="108" width="12" height="12" fill="#9c2c4d"/><rect x="276" y="108" width="12" height="12" fill="#9c2546"/><rect x="288" y="108" width="12" height="12" fill="#9c1e3f"/><rect x="300" y="108" width="12" height="12" fill="#9c193a"/><rect x="312" y="108" width="12" height="12" fill="#9c1435"/><rect x="324" y="108" width="12" height="12" fill="#9c1031"/><rect x="336" y="108" width="12" height="12" fill="#9c0c2d"/><rect x="348" y="108" width="12" height="12" fill="#9c092a"/><rect x="360" y="108" width="12" height="12" fill="#9c0627"/><rect x="372" y="108" width="12" height="12" fill="#9c0424"/><rect x="384" y="108" width="12" height="12" fill="#9c0222"/><rect x="396" y="108" width="12" height="12" fill="#9c0020"/><rect x="408" y="108" width="12" height="12" fill="#9c001e"/><rect x="420" y="108" width="12" height="12" fill="#9c001c"/><rect x="432" y="108" width="12" height="12" fill="#9c001a"/><rect x="444" y="108" width="12" height="12" fill="#9c0019"/><rect x="456" y="108" width="12" height="12" fill="#9c0017"/><rect x="468" y="108" width="12" height="12" fill="#9c0016"/><rect x="480" y="108" width="12" height="12" fill="#9c0015"/><rect x="492" y="108" width="12" height="12" fill="#9c0014"/><rect x="504" y="108" width="12" height="12" fill="#9c0013"/><rect x="516" y="108" width="12" height="12" fill="#9c0012"/><rect x="528" y="108" width="12" height="12" fill="#9c0011"/><rect x="540" y="108" width="12" height="12" fill="#9c0010"/><rect x="552" y="108" width="12" height="12" fill="#9c000f"/><rect x="564" y="108" width="12" height="12" fill="#9c000e"/><rect x="576" y="108" width="12" height="12" fill="#9c000d"/><rect x="588" y="108" width="12" height="12" fill="#9c000d"/><rect x="600" y="108" width="12" height="12" fill="#9c000c"/><rect x="612" y="108" width="12" height="12" fill="#9c000b"/><rect x="0" y="120" width="12" height="12" fill="#009c8d"/><rect x="12" y="120" width="12" height="12" fill="#009c90"/><rect x="24" y="120" width="12" height="12" fill="#009c93"/><rect x="36" y="120" width="12" height="12" fill="#009c97"/><rect x="48" y="120" width="12" height="12" fill="#009c9a"/><rect x="60" y="120" width="12" height="12" fill="#00999c"/><rect x="72" y="120" width="12" height="12" fill="#00959c"/><rect x="84" y="120" width="12" height="12" fill="#00919c"/><rect x="96" y="120" width="12" height="12" fill="#008c9c"/><rect x="108" y="120" width="12" height="12" fill="#00889c"/><rect x="120" y="120" width="12" height="12" fill="#00849c"/><rect x="132" y="120" width="12" height="12" fill="#007f9c"/><rect x="144" y="120" width="12" height="12" fill="#107a9c"/><rect x="156" y="120" width="12" height="12" fill="#26769c"/><rect x="168" y="120" width="12" height="12" fill="#3d719c"/><rect x="180" y="120" width="12" height="12" fill="#546c9c"/><rect x="192" y="120" width="12" height="12" fill="#6b669c"/><rect x="204" y="120" width="12" height="12" fill="#84619c"/><rect x="216" y="120" width="12" height="12" fill="#9c5b9b"/><rect x="228" y="120" width="12" height="12" fill="#9c4a85"/><rect x="240" y="120" width="12" height="12" fill="#9c3c74"/><rect x="252" y="120" width="12" height="12" fill="#9c3167"/><rect x="264" y="120" width="12" height="12" fill="#9c295c"/><rect x="276" y="120" width="12" height="12" fill="#9c2153"/><rect x="288" y="120" width="12" height="12" fill="#9c1b4b"/><rect x="300" y="120" width="12" height="12" fill="#9c1645"/><rect x="312" y="120" width="12" height="12" fill="#9c113f"/><rect x="324" y="120" width="12" height="12" fill="#9c0d3b"/><rect x="336" y="120" width="12" height="12" fill="#9c0a36"/><rect x="348" y="120" width="12" height="12" fill="#9c0732"/><rect x="360" y="120" width="12" height="12" fill="#9c042f"/><rect x="372" y="120" width="12" height="12" fill="#9c022c"/><rect x="384" y="120" width="12" height="12" fill="#9c0029"/><rect x="396" y="120" width="12" height="12" fill="#9c0027"/><rect x="408" y="120" width="12" height="12" fill="#9c0024"/><rect x="420" y="120" width="12" height="12" fill="#9c0022"/><rect x="432" y="120" width="12" height="12" fill="#9c0020"/><rect x="444" y="120" width="12" height="12" fill="#9c001f"/><rect x="456" y="120" width="12" height="12" fill="#9c001d"/><rect x="468" y="120" width="12" height="12" fill="#9c001b"/><rect x="480" y="120" width="12" height="12" fill="#9c001a"/><rect x="492" y="120" width="12" height="12" fill="#9c0019"/><rect x="504" y="120" width="12" height="12" fill="#9c0017"/><rect x="516" y="120" width="12" height="12" fill="#9c0016"/><rect x="528" y="120" width="12" height="12" fill="#9c0015"/><rect x="540" y="120" width="12" height="12" fill="#9c0014"/><rect x="552" y="120" width="12" height="12" fill="#9c0013"/><rect x="564" y="120" width="12" height="12" fill="#9c0012"/><rect x="576" y="120" width="12" height="12" fill="#9c0011"/><rect x="588" y="120" width="12" height="12" fill="#9c0011"/><rect x="600" y="120" width="12" height="12" fill="#9c0010"/><rect x="612" y="120" width="12" height="12" fill="#9c000f"/><rect x="0" y="132" width="12" height="12" fill="#00969c"/><rect x="12" y="132" width="12" height="12" fill="#00929c"/><rect x="24" y="132" width="12" height="12" fill="#008f9c"/><rect x="36" y="132" width="12" height="12" fill="#008b9c"/><rect x="48" y="132" width="12" height="12" fill="#00879c"/><rect x="60" y="132" width="12" height="12" fill="#00849c"/><rect x="72" y="132" width="12" height="12" fill="#00809c"/><rect x="84" y="132" width="12" height="12" fill="#007c9c"/><rect x="96" y="132" width="12" height="12" fill="#00789c"/><rect x="108" y="132" width="12" height="12" fill="#00749c"/><rect x="120" y="132" width="12" height="12" fill="#00709c"/><rect x="132" y="132" width="12" height="12" fill="#006b9c"/><rect x="144" y="132" width="12" height="12" fill="#0b679c"/><rect x="156" y="132" width="12" height="12" fill="#1f639c"/><rect x="168" y="132" width="12" height="12" fill="#325e9c"/><rect x="180" y="132" width="12" height="12" fill="#47599c"/><rect x="192" y="132" width="12" height="12" fill="#5b559c"/><rect x="204" y="132" width="12" height="12" fill="#71509c"/><rect x="216" y="132" width="12" height="12" fill="#864b9c"/><rect x="228" y="132" width="12" height="12" fill="#9c459b"/><rect x="240" y="132" width="12" height="12" fill="#9c3887"/><rect x="252" y="132" width="12" height="12" fill="#9c2e78"/><rect x="264" y="132" width="12" height="12" fill="#9c256b"/><rect x="276" y="132" width="12" height="12" fill="#9c1e61"/><rect x="288" y="132" width="12" height="12" fill="#9c1858"/><rect x="300" y="132" width="12" height="12" fill="#9c1350"/><rect x="312" y="132" width="12" height="12" fill="#9c0f4a"/><rect x="324" y="132" width="12" height="12" fill="#9c0b44"/><rect x="336" y="132" width="12" height="12" fill="#9c073f"/><rect x="348" y="132" width="12" height="12" fill="#9c043b"/><rect x="360" y="132" width="12" height="12" fill="#9c0237"/><rect x="372" y="132" width="12" height="12" fill="#9c0034"/><rect x="384" y="132" width="12" height="12" fill="#9c0031"/><rect x="396" y="132" width="12" height="12" fill="#9c002e"/><rect x="408" y="132" width="12" height="12" fill="#9c002b"/><rect x="420" y="132" width="12" height="12" fill="#9c0029"/><rect x="432" y="132" width="12" height="12" fill="#9c0026"/><rect x="444" y="132" width="12" height="12" fill="#9c0024"/><rect x="456" y="132" width="12" height="12" fill="#9c0023"/><rect x="468" y="132" width="12" height="12" fill="#9c0021"/><rect x="480" y="132" width="12" height="12" fill="#9c001f"/><rect x="492" y="132" width="12" height="12" fill="#9c001e"/><rect x="504" y="132" width="12" height="12" fill="#9c001c"/><rect x="516" y="132" width="12" height="12" fill="#9c001b"/><rect x="528" y="132" width="12" height="12" fill="#9c001a"/><rect x="540" y="132" width="12" height="12" fill="#9c0018"/><rect x="552" y="132" width="12" height="12" fill="#9c0017"/><rect x="564" y="132" width="12" height="12" fill="#9c0016"/><rect x="576" y="132" width="12" height="12" fill="#9c0015"/><rect x="588" y="132" width="12" height="12" fill="#9c0014"/><rect x="600" y="132" width="12" height="12" fill="#9c0014"/><rect x="612" y="132" width="12" height="12" fill="#9c0013"/><rect x="0" y="144" width="12" height="12" fill="#00849c"/><rect x="12" y="144" width="12" height="12" fill="#00809c"/><rect x="24" y="144" width="12" height="12" fill="#007d9c"/><rect x="36" y="144" width="12" height="12" fill="#007a9c"/><rect x="48" y="144" width="12" height="12" fill="#00769c"/><rect x="60" y="144" width="12" height="12" fill="#00739c"/><rect x="72" y="144" width="12" height="12" fill="#006f9c"/><rect x="84" y="144" width="12" height="12" fill="#006b9c"/><rect x="96" y="144" width="12" height="12" fill="#00679c"/><rect x="108" y="144" width="12" height="12" fill="#00649c"/><rect x="120" y="144" width="12" height="12" fill="#00609c"/><rect x="132" y="144" width="12" height="12" fill="#005c9c"/><rect x="144" y="144" width="12" height="12" fill="#07589c"/><rect x="156" y="144" width="12" height="12" fill="#19549c"/><rect x="168" y="144" width="12" height="12" fill="#2a4f9c"/><rect x="180" y="144" width="12" height="12" fill="#3c4b9c"/><rect x="192" y="144" width="12" height="12" fill="#4f479c"/><rect x="204" y="144" width="12" height="12" fill="#62429c"/><rect x="216" y="144" width="12" height="12" fill="#753e9c"/><rect x="228" y="144" width="12" height="12" fill="#88399c"/><rect x="240" y="144" width="12" height="12" fill="#9c349b"/><rect x="252" y="144" width="12" height="12" fill="#9c2a89"/><rect x="264" y="144" width="12" height="12" fill="#9c217b"/><rect x="276" y="144" width="12" height="12" fill="#9c1b6f"/><rect x="288" y="144" width="12" height="12" fill="#9c1565"/><rect x="300" y="144" width="12" height="12" fill="#9c105c"/><rect x="312" y="144" width="12" height="12" fill="#9c0c55"/><rect x="324" y="144" width="12" height="12" fill="#9c084f"/><rect x="336" y="144" width="12" height="12" fill="#9c0549"/><rect x="348" y="144" width="12" height="12" fill="#9c0244"/><rect x="360" y="144" width="12" height="12" fill="#9c0040"/><rect x="372" y="144" width="12" height="12" fill="#9c003c"/><rect x="384" y="144" width="12" height="12" fill="#9c0038"/><rect x="396" y="144" width="12" height="12" fill="#9c0035"/><rect x="408" y="144" width="12" height="12" fill="#9c0032"/><rect x="420" y="144" width="12" height="12" fill="#9c002f"/><rect x="432" y="144" width="12" height="12" fill="#9c002d"/><rect x="444" y="144" width="12" height="12" fill="#9c002a"/><rect x="456" y="144" width="12" height="12" fill="#9c0028"/><rect x="468" y="144" width="12" height="12" fill="#9c0026"/><rect x="480" y="144" width="12" height="12" fill="#9c0024"/><rect x="492" y="144" width="12" height="12" fill="#9c0023"/><rect x="504" y="144" width="12" height="12" fill="#9c0021"/><rect x="516" y="144" width="12" height="12" fill="#9c0020"/><rect x="528" y="144" width="12" height="12" fill="#9c001e"/><rect x="540" y="144" width="12" height="12" fill="#9c001d"/><rect x="552" y="144" width="12" height="12" fill="#9c001c"/><rect x="564" y="144" width="12" height="12" fill="#9c001b"/><rect x="576" y="144" width="12" height="12" fill="#9c0019"/><rect x="588" y="144" width="12" height="12" fill="#9c0018"/><rect x="600" y="144" width="12" height="12" fill="#9c0017"/><rect x="612" y="144" width="12" height="12" fill="#9c0016"/><rect x="0" y="156" width="12" height="12" fill="#00759c"/><rect x="12" y="156" width="12" height="12" fill="#00729c"/><rect x="24" y="156" width="12" height="12" fill="#006e9c"/><rect x="36" y="156" width="12" height="12" fill="#006b9c"/><rect x="48" y="156" width="12" height="12" fill="#00689c"/><rect x="60" y="156" width="12" height="12" fill="#00649c"/><rect x="72" y="156" width="12" height="12" fill="#00619c"/><rect x="84" y="156" width="12" height="12" fill="#005d9c"/><rect x="96" y="156" width="12" height="12" fill="#005a9c"/><rect x="108" y="156" width="12" height="12" fill="#00569c"/><rect x="120" y="156" width="12" height="12" fill="#00539c"/><rect x="132" y="156" width="12" height="12" fill="#004f9c"/><rect x="144" y="156" width="12" height="12" fill="#044b9c"/><rect x="156" y="156" width="12" height="12" fill="#14479c"/><rect x="168" y="156" width="12" height="12" fill="#24439c"/><rect x="180" y="156" width="12" height="12" fill="#343f9c"/><rect x="192" y="156" width="12" height="12" fill="#453b9c"/><rect x="204" y="156" width="12" height="12" fill="#55379c"/><rect x="216" y="156" width="12" height="12" fill="#67339c"/><rect x="228" y="156" width="12" height="12" fill="#782f9c"/><rect x="240" y="156" width="12" height="12" fill="#8a2a9c"/><rect x="252" y="156" width="12" height="12" fill="#9c269b"/><rect x="264" y="156" width="12" height="12" fill="#9c1e8b"/><rect x="276" y="156" width="12" height="12" fill="#9c177d"/><rect x="288" y="156" width="12" height="12" fill="#9c1172"/><rect x="300" y="156" width="12" height="12" fill="#9c0d68"/><rect x="312" y="156" width="12" height="12" fill="#9c0960"/><rect x="324" y="156" width="12" height="12" fill="#9c0559"/><rect x="336" y="156" width="12" height="12" fill="#9c0253"/><rect x="348" y="156" width="12" height="12" fill="#9c004d"/><rect x="360" y="156" width="12" height="12" fill="#9c0048"/><rect x="372" y="156" width="12" height="12" fill="#9c0044"/><rect x="384" y="156" width="12" height="12" fill="#9c0040"/><rect x="396" y="156" width="12" height="12" fill="#9c003c"/><rect x="408" y="156" width="12" height="12" fill="#9c0039"/><rect x="420" y="156" width="12" height="12" fill="#9c0036"/><rect x="432" y="156" width="12" height="12" fill="#9c0033"/><rect x="444" y="156" width="12" height="12" fill="#9c0030"/><rect x="456" y="156" width="12" height="12" fill="#9c002e"/><rect x="468" y="156" width="12" height="12" fill="#9c002c"/><rect x="480" y="156" width="12" height="12" fill="#9c002a"/><rect x="492" y="156" width="12" height="12" fill="#9c0028"/><rect x="504" y="156" width="12" height="12" fill="#9c0026"/><rect x="516" y="156" width="12" height="12" fill="#9c0024"/><rect x="528" y="156" width="12" height="12" fill="#9c0023"/><rect x="540" y="156" width="12" height="12" fill="#9c0021"/><rect x="552" y="156" width="12" height="12" fill="#9c0020"/><rect x="564" y="156" width="12" height="12" fill="#9c001f"/><rect x="576" y="156" width="12" height="12" fill="#9c001e"/><rect x="588" y="156" width="12" height="12" fill="#9c001c"/><rect x="600" y="156" width="12" height="12" fill="#9c001b"/><rect x="612" y="156" width="12" height="12" fill="#9c001a"/><rect x="0" y="168" width="12" height="12" fill="#00689c"/><rect x="12" y="168" width="12" height="12" fill="#00659c"/><rect x="24" y="168" width="12" height="12" fill="#00629c"/><rect x="36" y="168" width="12" height="12" fill="#005f9c"/><rect x="48" y="168" width="12" height="12" fill="#005c9c"/><rect x="60" y="168" width="12" height="12" fill="#00589c"/><rect x="72" y="168" width="12" height="12" fill="#00559c"/><rect x="84" y="168" width="12" height="12" fill="#00529c"/><rect x="96" y="168" width="12" height="12" fill="#004f9c"/><rect x="108" y="168" width="12" height="12" fill="#004b9c"/><rect x="120" y="168" width="12" height="12" fill="#00489c"/><rect x="132" y="168" width="12" height="12" fill="#00449c"/><rect x="144" y="168" width="12" height="12" fill="#01419c"/><rect x="156" y="168" width="12" height="12" fill="#103d9c"/><rect x="168" y="168" width="12" height="12" fill="#1e399c"/><rect x="180" y="168" width="12" height="12" fill="#2d369c"/><rect x="192" y="168" width="12" height="12" fill="#3c329c"/><rect x="204" y="168" width="12" height="12" fill="#4b2e9c"/><rect x="216" y="168" width="12" height="12" fill="#5b2a9c"/><rect x="228" y="168" width="12" height="12" fill="#6b269c"/><rect x="240" y="168" width="12" height="12" fill="#7b229c"/><rect x="252" y="168" width="12" height="12" fill="#8b1e9c"/><rect x="264" y="168" width="12" height="12" fill="#9c1a9b"/><rect x="276" y="168" width="12" height="12" fill="#9c138c"/><rect x="288" y="168" width="12" height="12" fill="#9c0e7f"/><rect x="300" y="168" width="12" height="12" fill="#9c0a75"/><rect x="312" y="168" width="12" height="12" fill="#9c066b"/><rect x="324" y="168" width="12" height="12" fill="#9c0263"/><rect x="336" y="168" width="12" height="12" fill="#9c005c"/><rect x="348" y="168" width="12" height="12" fill="#9c0056"/><rect x="360" y="168" width="12" height="12" fill="#9c0051"/><rect x="372" y="168" width="12" height="12" fill="#9c004c"/><rect x="384" y="168" width="12" height="12" fill="#9c0047"/><rect x="396" y="168" width="12" height="12" fill="#9c0043"/><rect x="408" y="168" width="12" height="12" fill="#9c0040"/><rect x="420" y="168" width="12" height="12" fill="#9c003c"/><rect x="432" y="168" width="12" height="12" fill="#9c0039"/><rect x="444" y="168" width="12" height="12" fill="#9c0036"/><rect x="456" y="168" width="12" height="12" fill="#9c0034"/><rect x="468" y="168" width="12" height="12" fill="#9c0031"/><rect x="480" y="168" width="12" height="12" fill="#9c002f"/><rect x="492" y="168" width="12" height="12" fill="#9c002d"/><rect x="504" y="168" width="12" height="12" fill="#9c002b"/><rect x="516" y="168" width="12" height="12" fill="#9c0029"/><rect x="528" y="168" width="12" height="12" fill="#9c0028"/><rect x="540" y="168" width="12" height="12" fill="#9c0026"/><rect x="552" y="168" width="12" height="12" fill="#9c0024"/><rect x="564" y="168" width="12" height="12" fill="#9c0023"/><rect x="576" y="168" width="12" height="12" fill="#9c0022"/><rect x="588" y="168" width="12" height="12" fill="#9c0020"/><rect x="600" y="168" width="12" height="12" fill="#9c001f"/><rect x="612" y="168" width="12" height="12" fill="#9c001e"/><rect x="0" y="180" width="12" height="12" fill="#005d9c"/><rect x="12" y="180" width="12" height="12" fill="#005a9c"/><rect x="24" y="180" width="12" height="12" fill="#00579c"/><rect x="36" y="180" width="12" height="12" fill="#00549c"/><rect x="48" y="180" width="12" height="12" fill="#00519c"/><rect x="60" y="180" width="12" height="12" fill="#004e9c"/><rect x="72" y="180" width="12" height="12" fill="#004b9c"/><rect x="84" y="180" width="12" height="12" fill="#00489c"/><rect x="96" y="180" width="12" height="12" fill="#00459c"/><rect x="108" y="180" width="12" height="12" fill="#00429c"/><rect x="120" y="180" width="12" height="12" fill="#003f9c"/><rect x="132" y="180" width="12" height="12" fill="#003b9c"/><rect x="144" y="180" width="12" height="12" fill="#00389c"/><rect x="156" y="180" width="12" height="12" fill="#0c359c"/><rect x="168" y="180" width="12" height="12" fill="#1a319c"/><rect x="180" y="180" width="12" height="12" fill="#272e9c"/><rect x="192" y="180" width="12" height="12" fill="#352a9c"/><rect x="204" y="180" width="12" height="12" fill="#43269c"/><rect x="216" y="180" width="12" height="12" fill="#51239c"/><rect x="228" y="180" width="12" height="12" fill="#601f9c"/><rect x="240" y="180" width="12" height="12" fill="#6e1b9c"/><rect x="252" y="180" width="12" height="12" fill="#7d189c"/><rect x="264" y="180" width="12" height="12" fill="#8c149c"/><rect x="276" y="180" width="12" height="12" fill="#9c109b"/><rect x="288" y="180" width="12" height="12" fill="#9c0b8d"/><rect x="300" y="180" width="12" height="12" fill="#9c0681"/><rect x="312" y="180" width="12" height="12" fill="#9c0377"/><rect x="324" y="180" width="12" height="12" fill="#9c006e"/><rect x="336" y="180" width="12" height="12" fill="#9c0066"/><rect x="348" y="180" width="12" height="12" fill="#9c0060"/><rect x="360" y="180" width="12" height="12" fill="#9c0059"/><rect x="372" y="180" width="12" height="12" fill="#9c0054"/><rect x="384" y="180" width="12" height="12" fill="#9c004f"/><rect x="396" y="180" width="12" height="12" fill="#9c004b"/><rect x="408" y="180" width="12" height="12" fill="#9c0047"/><rect x="420" y="180" width="12" height="12" fill="#9c0043"/><rect x="432" y="180" width="12" height="12" fill="#9c0040"/><rect x="444" y="180" width="12" height="12" fill="#9c003d"/><rect x="456" y="180" width="12" height="12" fill="#9c003a"/><rect x="468" y="180" width="12" height="12" fill="#9c0037"/><rect x="480" y="180" width="12" height="12" fill="#9c0035"/><rect x="492" y="180" width="12" height="12" fill="#9c0032"/><rect x="504" y="180" width="12" height="12" fill="#9c0030"/><rect x="516" y="180" width="12" height="12" fill="#9c002e"/><rect x="528" y="180" width="12" height="12" fill="#9c002c"/><rect x="540" y="180" width="12" height="12" fill="#9c002b"/><rect x="552" y="180" width="12" height="12" fill="#9c0029"/><rect x="564" y="180" width="12" height="12" fill="#9c0027"/><rect x="576" y="180" width="12" height="12" fill="#9c0026"/><rect x="588" y="180" width="12" height="12" fill="#9c0024"/><rect x="600" y="180" width="12" height="12" fill="#9c0023"/><rect x="612" y="180" width="12" height="12" fill="#9c0022"/><rect x="0" y="192" width="12" height="12" fill="#00549c"/><rect x="12" y="192" width="12" height="12" fill="#00519c"/><rect x="24" y="192" width="12" height="12" fill="#004e9c"/><rect x="36" y="192" width="12" height="12" fill="#004b9c"/><rect x="48" y="192" width="12" height="12" fill="#00499c"/><rect x="60" y="192" width="12" height="12" fill="#00469c"/><rect x="72" y="192" width="12" height="12" fill="#00439c"/><rect x="84" y="192" width="12" height="12" fill="#00409c"/><rect x="96" y="192" width="12" height="12" fill="#003d9c"/><rect x="108" y="192" width="12" height="12" fill="#003a9c"/><rect x="120" y="192" width="12" height="12" fill="#00379c"/><rect x="132" y="192" width="12" height="12" fill="#00349c"/><rect x="144" y="192" width="12" height="12" fill="#00309c"/><rect x="156" y="192" width="12" height="12" fill="#0a2d9c"/><rect x="168" y="192" width="12" height="12" fill="#162a9c"/><rect x="180" y="192" width="12" height="12" fill="#22279c"/><rect x="192" y="192" width="12" height="12" fill="#2f239c"/><rect x="204" y="192" width="12" height="12" fill="#3c209c"/><rect x="216" y="192" width="12" height="12" fill="#491d9c"/><rect x="228" y="192" width="12" height="12" fill="#56199c"/><rect x="240" y="192" width="12" height="12" fill="#64169c"/><rect x="252" y="192" width="12" height="12" fill="#72129c"/><rect x="264" y="192" width="12" height="12" fill="#7f0e9c"/><rect x="276" y="192" width="12" height="12" fill="#8d0b9c"/><rect x="288" y="192" width="12" height="12" fill="#9c079b"/><rect x="300" y="192" width="12" height="12" fill="#9c038e"/><rect x="312" y="192" width="12" height="12" fill="#9c0083"/><rect x="324" y="192" width="12" height="12" fill="#9c0079"/><rect x="336" y="192" width="12" height="12" fill="#9c0071"/><rect x="348" y="192" width="12" height="12" fill="#9c0069"/><rect x="360" y="192" width="12" height="12" fill="#9c0062"/><rect x="372" y="192" width="12" height="12" fill="#9c005c"/><rect x="384" y="192" width="12" height="12" fill="#9c0057"/><rect x="396" y="192" width="12" height="12" fill="#9c0052"/><rect x="408" y="192" width="12" height="12" fill="#9c004e"/><rect x="420" y="192" width="12" height="12" fill="#9c004a"/><rect x="432" y="192" width="12" height="12" fill="#9c0046"/><rect x="444" y="192" width="12" height="12" fill="#9c0043"/><rect x="456" y="192" width="12" height="12" fill="#9c0040"/><rect x="468" y="192" width="12" height="12" fill="#9c003d"/><rect x="480" y="192" width="12" height="12" fill="#9c003a"/><rect x="492" y="192" width="12" height="12" fill="#9c0038"/><rect x="504" y="192" width="12" height="12" fill="#9c0035"/><rect x="516" y="192" width="12" height="12" fill="#9c0033"/><rect x="528" y="192" width="12" height="12" fill="#9c0031"/><rect x="540" y="192" width="12" height="12" fill="#9c002f"/><rect x="552" y="192" width="12" height="12" fill="#9c002d"/><rect x="564" y="192" width="12" height="12" fill="#9c002c"/><rect x="576" y="192" width="12" height="12" fill="#9c002a"/><rect x="588" y="192" width="12" height="12" fill="#9c0029"/><rect x="600" y="192" width="12" height="12" fill="#9c0027"/><rect x="612" y="192" width="12" height="12" fill="#9c0026"/><rect x="0" y="204" width="12" height="12" fill="#004b9c"/><rect x="12" y="204" width="12" height="12" fill="#00499c"/><rect x="24" y="204" width="12" height="12" fill="#00469c"/><rect x="36" y="204" width="12" height="12" fill="#00449c"/><rect x="48" y="204" width="12" height="12" fill="#00419c"/><rect x="60" y="204" width="12" height="12" fill="#003e9c"/><rect x="72" y="204" width="12" height="12" fill="#003b9c"/><rect x="84" y="204" width="12" height="12" fill="#00399c"/><rect x="96" y="204" width="12" height="12" fill="#00369c"/><rect x="108" y="204" width="12" height="12" fill="#00339c"/><rect x="120" y="204" width="12" height="12" fill="#00309c"/><rect x="132" y="204" width="12" height="12" fill="#002d9c"/><rect x="144" y="204" width="12" height="12" fill="#002a9c"/><rect x="156" y="204" width="12" height="12" fill="#07279c"/><rect x="168" y="204" width="12" height="12" fill="#13249c"/><rect x="180" y="204" width="12" height="12" fill="#1e219c"/><rect x="192" y="204" width="12" height="12" fill="#2a1e9c"/><rect x="204" y="204" width="12" height="12" fill="#361b9c"/><rect x="216" y="204" width="12" height="12" fill="#42179c"/><rect x="228" y="204" width="12" height="12" fill="#4e149c"/><rect x="240" y="204" width="12" height="12" fill="#5b119c"/><rect x="252" y="204" width="12" height="12" fill="#670d9c"/><rect x="264" y="204" width="12" height="12" fill="#740a9c"/><rect x="276" y="204" width="12" height="12" fill="#81079c"/><rect x="288" y="204" width="12" height="12" fill="#8e039c"/><rect x="300" y="204" width="12" height="12" fill="#9c009b"/><rect x="312" y="204" width="12" height="12" fill="#9c008f"/><rect x="324" y="204" width="12" height="12" fill="#9c0084"/><rect x="336" y="204" width="12" height="12" fill="#9c007b"/><rect x="348" y="204" width="12" height="12" fill="#9c0073"/><rect x="360" y="204" width="12" height="12" fill="#9c006c"/><rect x="372" y="204" width="12" height="12" fill="#9c0065"/><rect x="384" y="204" width="12" height="12" fill="#9c005f"/><rect x="396" y="204" width="12" height="12" fill="#9c005a"/><rect x="408" y="204" width="12" height="12" fill="#9c0055"/><rect x="420" y="204" width="12" height="12" fill="#9c0051"/><rect x="432" y="204" width="12" height="12" fill="#9c004d"/><rect x="444" y="204" width="12" height="12" fill="#9c0049"/><rect x="456" y="204" width="12" height="12" fill="#9c0046"/><rect x="468" y="204" width="12" height="12" fill="#9c0043"/><rect x="480" y="204" width="12" height="12" fill="#9c0040"/><rect x="492" y="204" width="12" height="12" fill="#9c003d"/><rect x="504" y="204" width="12" height="12" fill="#9c003a"/><rect x="516" y="204" width="12" height="12" fill="#9c0038"/><rect x="528" y="204" width="12" height="12" fill="#9c0036"/><rect x="540" y="204" width="12" height="12" fill="#9c0034"/><rect x="552" y="204" width="12" height="12" fill="#9c0032"/><rect x="564" y="204" width="12" height="12" fill="#9c0030"/><rect x="576" y="204" width="12" height="12" fill="#9c002e"/><rect x="588" y="204" width="12" height="12" fill="#9c002d"/><rect x="600" y="204" width="12" height="12" fill="#9c002b"/><rect x="612" y="204" width="12" height="12" fill="#9c002a"/><rect x="0" y="216" width="12" height="12" fill="#00449c"/><rect x="12" y="216" width="12" height="12" fill="#00429c"/><rect x="24" y="216" width="12" height="12" fill="#003f9c"/><rect x="36" y="216" width="12" height="12" fill="#003d9c"/><rect x="48" y="216" width="12" height="12" fill="#003a9c"/><rect x="60" y="216" width="12" height="12" fill="#00379c"/><rect x="72" y="216" width="12" height="12" fill="#00359c"/><rect x="84" y="216" width="12" height="12" fill="#00329c"/><rect x="96" y="216" width="12" height="12" fill="#002f9c"/><rect x="108" y="216" width="12" height="12" fill="#002d9c"/><rect x="120" y="216" width="12" height="12" fill="#002a9c"/><rect x="132" y="216" width="12" height="12" fill="#00279c"/><rect x="144" y="216" width="12" height="12" fill="#00249c"/><rect x="156" y="216" width="12" height="12" fill="#05219c"/><rect x="168" y="216" width="12" height="12" fill="#101f9c"/><rect x="180" y="216" width="12" height="12" fill="#1b1c9c"/><rect x="192" y="216" width="12" height="12" fill="#26199c"/><rect x="204" y="216" width="12" height="12" fill="#31169c"/><rect x="216" y="216" width="12" height="12" fill="#3c139c"/><rect x="228" y="216" width="12" height="12" fill="#47109c"/><rect x="240" y="216" width="12" height="12" fill="#530c9c"/><rect x="252" y="216" width="12" height="12" fill="#5f099c"/><rect x="264" y="216" width="12" height="12" fill="#6b069c"/><rect x="276" y="216" width="12" height="12" fill="#77039c"/><rect x="288" y="216" width="12" height="12" fill="#83009c"/><rect x="300" y="216" width="12" height="12" fill="#8f009c"/><rect x="312" y="216" width="12" height="12" fill="#9c009c"/><rect x="324" y="216" width="12" height="12" fill="#9c0090"/><rect x="336" y="216" width="12" height="12" fill="#9c0086"/><rect x="348" y="216" width="12" height="12" fill="#9c007d"/><rect x="360" y="216" width="12" height="12" fill="#9c0075"/><rect x="372" y="216" width="12" height="12" fill="#9c006e"/><rect x="384" y="216" width="12" height="12" fill="#9c0067"/><rect x="396" y="216" width="12" height="12" fill="#9c0062"/><rect x="408" y="216" width="12" height="12" fill="#9c005c"/><rect x="420" y="216" width="12" height="12" fill="#9c0058"/><rect x="432" y="216" width="12" height="12" fill="#9c0053"/><rect x="444" y="216" width="12" height="12" fill="#9c004f"/><rect x="456" y="216" width="12" height="12" fill="#9c004c"/><rect x="468" y="216" width="12" height="12" fill="#9c0048"/><rect x="480" y="216" width="12" height="12" fill="#9c0045"/><rect x="492" y="216" width="12" height="12" fill="#9c0042"/><rect x="504" y="216" width="12" height="12" fill="#9c0040"/><rect x="516" y="216" width="12" height="12" fill="#9c003d"/><rect x="528" y="216" width="12" height="12" fill="#9c003b"/><rect x="540" y="216" width="12" height="12" fill="#9c0039"/><rect x="552" y="216" width="12" height="12" fill="#9c0036"/><rect x="564" y="216" width="12" height="12" fill="#9c0034"/><rect x="576" y="216" width="12" height="12" fill="#9c0033"/><rect x="588" y="216" width="12" height="12" fill="#9c0031"/><rect x="600" y="216" width="12" height="12" fill="#9c002f"/><rect x="612" y="216" width="12" height="12" fill="#9c002e"/><rect x="0" y="228" width="12" height="12" fill="#003e9c"/><rect x="12" y="228" width="12" height="12" fill="#003b9c"/><rect x="24" y="228" width="12" height="12" fill="#00399c"/><rect x="36" y="228" width="12" height="12" fill="#00369c"/><rect x="48" y="228" width="12" height="12" fill="#00349c"/><rect x="60" y="228" width="12" height="12" fill="#00329c"/><rect x="72" y="228" width="12" height="12" fill="#002f9c"/><rect x="84" y="228" width="12" height="12" fill="#002c9c"/><rect x="96" y="228" width="12" height="12" fill="#002a9c"/><rect x="108" y="228" width="12" height="12" fill="#00279c"/><rect x="120" y="228" width="12" height="12" fill="#00259c"/><rect x="132" y="228" width="12" height="12" fill="#00229c"/><rect x="144" y="228" width="12" height="12" fill="#001f9c"/><rect x="156" y="228" width="12" height="12" fill="#031d9c"/><rect x="168" y="228" width="12" height="12" fill="#0d1a9c"/><rect x="180" y="228" width="12" height="12" fill="#17179c"/><rect x="192" y="228" width="12" height="12" fill="#22149c"/><rect x="204" y="228" width="12" height="12" fill="#2c119c"/><rect x="216" y="228" width="12" height="12" fill="#370f9c"/><rect x="228" y="228" width="12" height="12" fill="#410c9c"/><rect x="240" y="228" width="12" height="12" fill="#4c099c"/><rect x="252" y="228" width="12" height="12" fill="#57069c"/><rect x="264" y="228" width="12" height="12" fill="#62039c"/><rect x="276" y="228" width="12" height="12" fill="#6d009c"/><rect x="288" y="228" width="12" height="12" fill="#79009c"/><rect x="300" y="228" width="12" height="12" fill="#84009c"/><rect x="312" y="228" width="12" height="12" fill="#90009c"/><rect x="324" y="228" width="12" height="12" fill="#9c009c"/><rect x="336" y="228" width="12" height="12" fill="#9c0091"/><rect x="348" y="228" width="12" height="12" fill="#9c0087"/><rect x="360" y="228" width="12" height="12" fill="#9c007e"/><rect x="372" y="228" width="12" height="12" fill="#9c0077"/><rect x="384" y="228" width="12" height="12" fill="#9c0070"/><rect x="396" y="228" width="12" height="12" fill="#9c006a"/><rect x="408" y="228" width="12" height="12" fill="#9c0064"/><rect x="420" y="228" width="12" height="12" fill="#9c005f"/><rect x="432" y="228" width="12" height="12" fill="#9c005a"/><rect x="444" y="228" width="12" height="12" fill="#9c0056"/><rect x="456" y="228" width="12" height="12" fill="#9c0052"/><rect x="468" y="228" width="12" height="12" fill="#9c004e"/><rect x="480" y="228" width="12" height="12" fill="#9c004b"/><rect x="492" y="228" width="12" height="12" fill="#9c0048"/><rect x="504" y="228" width="12" height="12" fill="#9c0045"/><rect x="516" y="228" width="12" height="12" fill="#9c0042"/><rect x="528" y="228" width="12" height="12" fill="#9c0040"/><rect x="540" y="228" width="12" height="12" fill="#9c003d"/><rect x="552" y="228" width="12" height="12" fill="#9c003b"/><rect x="564" y="228" width="12" height="12" fill="#9c0039"/><rect x="576" y="228" width="12" height="12" fill="#9c0037"/><rect x="588" y="228" width="12" height="12" fill="#9c0035"/><rect x="600" y="228" width="12" height="12" fill="#9c0033"/><rect x="612" y="228" width="12" height="12" fill="#9c0032"/><rect x="0" y="240" width="12" height="12" fill="#00389c"/><rect x="12" y="240" width="12" height="12" fill="#00369c"/><rect x="24" y="240" width="12" height="12" fill="#00339c"/><rect x="36" y="240" width="12" height="12" fill="#00319c"/><rect x="48" y="240" width="12" height="12" fill="#002f9c"/><rect x="60" y="240" width="12" height="12" fill="#002c9c"/><rect x="72" y="240" width="12" height="12" fill="#002a9c"/><rect x="84" y="240" width="12" height="12" fill="#00279c"/><rect x="96" y="240" width="12" height="12" fill="#00259c"/><rect x="108" y="240" width="12" height="12" fill="#00239c"/><rect x="120" y="240" width="12" height="12" fill="#00209c"/><rect x="132" y="240" width="12" height="12" fill="#001d9c"/><rect x="144" y="240" width="12" height="12" fill="#001b9c"/><rect x="156" y="240" width="12" height="12" fill="#01189c"/><rect x="168" y="240" width="12" height="12" fill="#0b169c"/><rect x="180" y="240" width="12" height="12" fill="#14139c"/><rect x="192" y="240" width="12" height="12" fill="#1e109c"/><rect x="204" y="240" width="12" height="12" fill="#280e9c"/><rect x="216" y="240" width="12" height="12" fill="#320b9c"/><rect x="228" y="240" width="12" height="12" fill="#3c089c"/><rect x="240" y="240" width="12" height="12" fill="#46059c"/><rect x="252" y="240" width="12" height="12" fill="#50039c"/><rect x="264" y="240" width="12" height="12" fill="#5b009c"/><rect x="276" y="240" width="12" height="12" fill="#65009c"/><rect x="288" y="240" width="12" height="12" fill="#70009c"/><rect x="300" y="240" width="12" height="12" fill="#7b009c"/><rect x="312" y="240" width="12" height="12" fill="#85009c"/><rect x="324" y="240" width="12" height="12" fill="#90009c"/><rect x="336" y="240" width="12" height="12" fill="#9b009c"/><rect x="348" y="240" width="12" height="12" fill="#9c0091"/><rect x="360" y="240" width="12" height="12" fill="#9c0088"/><rect x="372" y="240" width="12" height="12" fill="#9c0080"/><rect x="384" y="240" width="12" height="12" fill="#9c0078"/><rect x="396" y="240" width="12" height="12" fill="#9c0072"/><rect x="408" y="240" width="12" height="12" fill="#9c006c"/><rect x="420" y="240" width="12" height="12" fill="#9c0066"/><rect x="432" y="240" width="12" height="12" fill="#9c0061"/><rect x="444" y="240" width="12" height="12" fill="#9c005d"/><rect x="456" y="240" width="12" height="12" fill="#9c0058"/><rect x="468" y="240" width="12" height="12" fill="#9c0054"/><rect x="480" y="240" width="12" height="12" fill="#9c0051"/><rect x="492" y="240" width="12" height="12" fill="#9c004d"/><rect x="504" y="240" width="12" height="12" fill="#9c004a"/><rect x="516" y="240" width="12" height="12" fill="#9c0047"/><rect x="528" y="240" width="12" height="12" fill="#9c0045"/><rect x="540" y="240" width="12" height="12" fill="#9c0042"/><rect x="552" y="240" width="12" height="12" fill="#9c0040"/><rect x="564" y="240" width="12" height="12" fill="#9c003d"/><rect x="576" y="240" width="12" height="12" fill="#9c003b"/><rect x="588" y="240" width="12" height="12" fill="#9c0039"/><rect x="600" y="240" width="12" height="12" fill="#9c0037"/><rect x="612" y="240" width="12" height="12" fill="#9c0036"/><rect x="0" y="252" width="12" height="12" fill="#00339c"/><rect x="12" y="252" width="12" height="12" fill="#00319c"/><rect x="24" y="252" width="12" height="12" fill="#002e9c"/><rect x="36" y="252" width="12" height="12" fill="#002c9c"/><rect x="48" y="252" width="12" height="12" fill="#002a9c"/><rect x="60" y="252" width="12" height="12" fill="#00289c"/><rect x="72" y="252" width="12" height="12" fill="#00259c"/><rect x="84" y="252" width="12" height="12" fill="#00239c"/><rect x="96" y="252" width="12" height="12" fill="#00219c"/><rect x="108" y="252" width="12" height="12" fill="#001e9c"/><rect x="120" y="252" width="12" height="12" fill="#001c9c"/><rect x="132" y="252" width="12" height="12" fill="#00199c"/><rect x="144" y="252" width="12" height="12" fill="#00179c"/><rect x="156" y="252" width="12" height="12" fill="#00159c"/><rect x="168" y="252" width="12" height="12" fill="#09129c"/><rect x="180" y="252" width="12" height="12" fill="#120f9c"/><rect x="192" y="252" width="12" height="12" fill="#1b0d9c"/><rect x="204" y="252" width="12" height="12" fill="#240a9c"/><rect x="216" y="252" width="12" height="12" fill="#2e089c"/><rect x="228" y="252" width="12" height="12" fill="#37059c"/><rect x="240" y="252" width="12" height="12" fill="#41039c"/><rect x="252" y="252" width="12" height="12" fill="#4a009c"/><rect x="264" y="252" width="12" height="12" fill="#54009c"/><rect x="276" y="252" width="12" height="12" fill="#5e009c"/><rect x="288" y="252" width="12" height="12" fill="#68009c"/><rect x="300" y="252" width="12" height="12" fill="#72009c"/><rect x="312" y="252" width="12" height="12" fill="#7c009c"/><rect x="324" y="252" width="12" height="12" fill="#86009c"/><rect x="336" y="252" width="12" height="12" fill="#91009c"/><rect x="348" y="252" width="12" height="12" fill="#9b009c"/><rect x="360" y="252" width="12" height="12" fill="#9c0092"/><rect x="372" y="252" width="12" height="12" fill="#9c0089"/><rect x="384" y="252" width="12" height="12" fill="#9c0081"/><rect x="396" y="252" width="12" height="12" fill="#9c007a"/><rect x="408" y="252" width="12" height="12" fill="#9c0073"/><rect x="420" y="252" width="12" height="12" fill="#9c006d"/><rect x="432" y="252" width="12" height="12" fill="#9c0068"/><rect x="444" y="252" width="12" height="12" fill="#9c0063"/><rect x="456" y="252" width="12" height="12" fill="#9c005f"/><rect x="468" y="252" width="12" height="12" fill="#9c005b"/><rect x="480" y="252" width="12" height="12" fill="#9c0057"/><rect x="492" y="252" width="12" height="12" fill="#9c0053"/><rect x="504" y="252" width="12" height="12" fill="#9c0050"/><rect x="516" y="252" width="12" height="12" fill="#9c004d"/><rect x="528" y="252" width="12" height="12" fill="#9c004a"/><rect x="540" y="252" width="12" height="12" fill="#9c0047"/><rect x="552" y="252" width="12" height="12" fill="#9c0044"/><rect x="564" y="252" width="12" height="12" fill="#9c0042"/><rect x="576" y="252" width="12" height="12" fill="#9c0040"/><rect x="588" y="252" width="12" height="12" fill="#9c003e"/><rect x="600" y="252" width="12" height="12" fill="#9c003c"/><rect x="612" y="252" width="12" height="12" fill="#9c003a"/><rect x="0" y="264" width="12" height="12" fill="#002e9c"/><rect x="12" y="264" width="12" height="12" fill="#002c9c"/><rect x="24" y="264" width="12" height="12" fill="#002a9c"/><rect x="36" y="264" width="12" height="12" fill="#00289c"/><rect x="48" y="264" width="12" height="12" fill="#00269c"/><rect x="60" y="264" width="12" height="12" fill="#00239c"/><rect x="72" y="264" width="12" height="12" fill="#00219c"/><rect x="84" y="264" width="12" height="12" fill="#001f9c"/><rect x="96" y="264" width="12" height="12" fill="#001d9c"/><rect x="108" y="264" width="12" height="12" fill="#001a9c"/><rect x="120" y="264" width="12" height="12" fill="#00189c"/><rect x="132" y="264" width="12" height="12" fill="#00169c"/><rect x="144" y="264" width="12" height="12" fill="#00139c"/><rect x="156" y="264" width="12" height="12" fill="#00119c"/><rect x="168" y="264" width="12" height="12" fill="#070f9c"/><rect x="180" y="264" width="12" height="12" fill="#100c9c"/><rect x="192" y="264" width="12" height="12" fill="#180a9c"/><rect x="204" y="264" width="12" height="12" fill="#21079c"/><rect x="216" y="264" width="12" height="12" fill="#2a059c"/><rect x="228" y="264" width="12" height="12" fill="#33029c"/><rect x="240" y="264" width="12" height="12" fill="#3c009c"/><rect x="252" y="264" width="12" height="12" fill="#45009c"/><rect x="264" y="264" width="12" height="12" fill="#4e009c"/><rect x="276" y="264" width="12" height="12" fill="#57009c"/><rect x="288" y="264" width="12" height="12" fill="#61009c"/><rect x="300" y="264" width="12" height="12" fill="#6a009c"/><rect x="312" y="264" width="12" height="12" fill="#74009c"/><rect x="324" y="264" width="12" height="12" fill="#7e009c"/><rect x="336" y="264" width="12" height="12" fill="#87009c"/><rect x="348" y="264" width="12" height="12" fill="#91009c"/><rect x="360" y="264" width="12" height="12" fill="#9b009c"/><rect x="372" y="264" width="12" height="12" fill="#9c0092"/><rect x="384" y="264" width="12" height="12" fill="#9c008a"/><rect x="396" y="264" width="12" height="12" fill="#9c0082"/><rect x="408" y="264" width="12" height="12" fill="#9c007b"/><rect x="420" y="264" width="12" height="12" fill="#9c0075"/><rect x="432" y="264" width="12" height="12" fill="#9c006f"/><rect x="444" y="264" width="12" height="12" fill="#9c006a"/><rect x="456" y="264" width="12" height="12" fill="#9c0065"/><rect x="468" y="264" width="12" height="12" fill="#9c0061"/><rect x="480" y="264" width="12" height="12" fill="#9c005d"/><rect x="492" y="264" width="12" height="12" fill="#9c0059"/><rect x="504" y="264" width="12" height="12" fill="#9c0055"/><rect x="516" y="264" width="12" height="12" fill="#9c0052"/><rect x="528" y="264" width="12" height="12" fill="#9c004f"/><rect x="540" y="264" width="12" height="12" fill="#9c004c"/><rect x="552" y="264" width="12" height="12" fill="#9c0049"/><rect x="564" y="264" width="12" height="12" fill="#9c0047"/><rect x="576" y="264" width="12" height="12" fill="#9c0044"/><rect x="588" y="264" width="12" height="12" fill="#9c0042"/><rect x="600" y="264" width="12" height="12" fill="#9c0040"/><rect x="612" y="264" width="12" height="12" fill="#9c003e"/><rect x="0" y="276" width="12" height="12" fill="#002a9c"/><rect x="12" y="276" width="12" height="12" fill="#00289c"/><rect x="24" y="276" width="12" height="12" fill="#00269c"/><rect x="36" y="276" width="12" height="12" fill="#00249c"/><rect x="48" y="276" width="12" height="12" fill="#00229c"/><rect x="60" y="276" width="12" height="12" fill="#001f9c"/><rect x="72" y="276" width="12" height="12" fill="#001d9c"/><rect x="84" y="276" width="12" height="12" fill="#001b9c"/><rect x="96" y="276" width="12" height="12" fill="#00199c"/><rect x="108" y="276" width="12" height="12" fill="#00179c"/><rect x="120" y="276" width="12" height="12" fill="#00159c"/><rect x="132" y="276" width="12" height="12" fill="#00129c"/><rect x="144" y="276" width="12" height="12" fill="#00109c"/><rect x="156" y="276" width="12" height="12" fill="#000e9c"/><rect x="168" y="276" width="12" height="12" fill="#050c9c"/><rect x="180" y="276" width="12" height="12" fill="#0d099c"/><rect x="192" y="276" width="12" height="12" fill="#16079c"/><rect x="204" y="276" width="12" height="12" fill="#1e059c"/><rect x="216" y="276" width="12" height="12" fill="#26029c"/><rect x="228" y="276" width="12" height="12" fill="#2f009c"/><rect x="240" y="276" width="12" height="12" fill="#37009c"/><rect x="252" y="276" width="12" height="12" fill="#40009c"/><rect x="264" y="276" width="12" height="12" fill="#49009c"/><rect x="276" y="276" width="12" height="12" fill="#52009c"/><rect x="288" y="276" width="12" height="12" fill="#5b009c"/><rect x="300" y="276" width="12" height="12" fill="#64009c"/><rect x="312" y="276" width="12" height="12" fill="#6d009c"/><rect x="324" y="276" width="12" height="12" fill="#76009c"/><rect x="336" y="276" width="12" height="12" fill="#7f009c"/><rect x="348" y="276" width="12" height="12" fill="#88009c"/><rect x="360" y="276" width="12" height="12" fill="#92009c"/><rect x="372" y="276" width="12" height="12" fill="#9b009c"/><rect x="384" y="276" width="12" height="12" fill="#9c0093"/><rect x="396" y="276" width="12" height="12" fill="#9c008b"/><rect x="408" y="276" width="12" height="12" fill="#9c0083"/><rect x="420" y="276" width="12" height="12" fill="#9c007c"/><rect x="432" y="276" width="12" height="12" fill="#9c0076"/><rect x="444" y="276" width="12" height="12" fill="#9c0071"/><rect x="456" y="276" width="12" height="12" fill="#9c006c"/><rect x="468" y="276" width="12" height="12" fill="#9c0067"/><rect x="480" y="276" width="12" height="12" fill="#9c0063"/><rect x="492" y="276" width="12" height="12" fill="#9c005f"/><rect x="504" y="276" width="12" height="12" fill="#9c005b"/><rect x="516" y="276" width="12" height="12" fill="#9c0057"/><rect x="528" y="276" width="12" height="12" fill="#9c0054"/><rect x="540" y="276" width="12" height="12" fill="#9c0051"/><rect x="552" y="276" width="12" height="12" fill="#9c004e"/><rect x="564" y="276" width="12" height="12" fill="#9c004b"/><rect x="576" y="276" width="12" height="12" fill="#9c0049"/><rect x="588" y="276" width="12" height="12" fill="#9c0046"/><rect x="600" y="276" width="12" height="12" fill="#9c0044"/><rect x="612" y="276" width="12" height="12" fill="#9c0042"/><rect x="0" y="288" width="12" height="12" fill="#00269c"/><rect x="12" y="288" width="12" height="12" fill="#00249c"/><rect x="24" y="288" width="12" height="12" fill="#00229c"/><rect x="36" y="288" width="12" height="12" fill="#00209c"/><rect x="48" y="288" width="12" height="12" fill="#001e9c"/><rect x="60" y="288" width="12" height="12" fill="#001c9c"/><rect x="72" y="288" width="12" height="12" fill="#001a9c"/><rect x="84" y="288" width="12" height="12" fill="#00189c"/><rect x="96" y="288" width="12" height="12" fill="#00169c"/><rect x="108" y="288" width="12" height="12" fill="#00149c"/><rect x="120" y="288" width="12" height="12" fill="#00129c"/><rect x="132" y="288" width="12" height="12" fill="#000f9c"/><rect x="144" y="288" width="12" height="12" fill="#000d9c"/><rect x="156" y="288" width="12" height="12" fill="#000b9c"/><rect x="168" y="288" width="12" height="12" fill="#04099c"/><rect x="180" y="288" width="12" height="12" fill="#0c079c"/><rect x="192" y="288" width="12" height="12" fill="#13059c"/><rect x="204" y="288" width="12" height="12" fill="#1b029c"/><rect x="216" y="288" width="12" height="12" fill="#23009c"/><rect x="228" y="288" width="12" height="12" fill="#2b009c"/><rect x="240" y="288" width="12" height="12" fill="#34009c"/><rect x="252" y="288" width="12" height="12" fill="#3c009c"/><rect x="264" y="288" width="12" height="12" fill="#44009c"/><rect x="276" y="288" width="12" height="12" fill="#4c009c"/><rect x="288" y="288" width="12" height="12" fill="#55009c"/><rect x="300" y="288" width="12" height="12" fill="#5d009c"/><rect x="312" y="288" width="12" height="12" fill="#66009c"/><rect x="324" y="288" width="12" height="12" fill="#6f009c"/><rect x="336" y="288" width="12" height="12" fill="#77009c"/><rect x="348" y="288" width="12" height="12" fill="#80009c"/><rect x="360" y="288" width="12" height="12" fill="#89009c"/><rect x="372" y="288" width="12" height="12" fill="#92009c"/><rect x="384" y="288" width="12" height="12" fill="#9b009c"/><rect x="396" y="288" width="12" height="12" fill="#9c0093"/><rect x="408" y="288" width="12" height="12" fill="#9c008b"/><rect x="420" y="288" width="12" height="12" fill="#9c0084"/><rect x="432" y="288" width="12" height="12" fill="#9c007e"/><rect x="444" y="288" width="12" height="12" fill="#9c0078"/><rect x="456" y="288" width="12" height="12" fill="#9c0072"/><rect x="468" y="288" width="12" height="12" fill="#9c006d"/><rect x="480" y="288" width="12" height="12" fill="#9c0069"/><rect x="492" y="288" width="12" height="12" fill="#9c0064"/><rect x="504" y="288" width="12" height="12" fill="#9c0060"/><rect x="516" y="288" width="12" height="12" fill="#9c005d"/><rect x="528" y="288" width="12" height="12" fill="#9c0059"/><rect x="540" y="288" width="12" height="12" fill="#9c0056"/><rect x="552" y="288" width="12" height="12" fill="#9c0053"/><rect x="564" y="288" width="12" height="12" fill="#9c0050"/><rect x="576" y="288" width="12" height="12" fill="#9c004d"/><rect x="588" y="288" width="12" height="12" fill="#9c004b"/><rect x="600" y="288" width="12" height="12" fill="#9c0048"/><rect x="612" y="288" width="12" height="12" fill="#9c0046"/><rect x="0" y="300" width="12" height="12" fill="#00229c"/><rect x="12" y="300" width="12" height="12" fill="#00209c"/><rect x="24" y="300" width="12" height="12" fill="#001f9c"/><rect x="36" y="300" width="12" height="12" fill="#001d9c"/><rect x="48" y="300" width="12" height="12" fill="#001b9c"/><rect x="60" y="300" width="12" height="12" fill="#00199c"/><rect x="72" y="300" width="12" height="12" fill="#00179c"/><rect x="84" y="300" width="12" height="12" fill="#00159c"/><rect x="96" y="300" width="12" height="12" fill="#00139c"/><rect x="108" y="300" width="12" height="12" fill="#00119c"/><rect x="120" y="300" width="12" height="12" fill="#000f9c"/><rect x="132" y="300" width="12" height="12" fill="#000d9c"/><rect x="144" y="300" width="12" height="12" fill="#000b9c"/><rect x="156" y="300" width="12" height="12" fill="#00099c"/><rect x="168" y="300" width="12" height="12" fill="#02069c"/><rect x="180" y="300" width="12" height="12" fill="#0a049c"/><rect x="192" y="300" width="12" height="12" fill="#11029c"/><rect x="204" y="300" width="12" height="12" fill="#19009c"/><rect x="216" y="300" width="12" height="12" fill="#21009c"/><rect x="228" y="300" width="12" height="12" fill="#28009c"/><rect x="240" y="300" width="12" height="12" fill="#30009c"/><rect x="252" y="300" width="12" height="12" fill="#38009c"/><rect x="264" y="300" width="12" height="12" fill="#40009c"/><rect x="276" y="300" width="12" height="12" fill="#48009c"/><rect x="288" y="300" width="12" height="12" fill="#50009c"/><rect x="300" y="300" width="12" height="12" fill="#58009c"/><rect x="312" y="300" width="12" height="12" fill="#60009c"/><rect x="324" y="300" width="12" height="12" fill="#68009c"/><rect x="336" y="300" width="12" height="12" fill="#71009c"/><rect x="348" y="300" width="12" height="12" fill="#79009c"/><rect x="360" y="300" width="12" height="12" fill="#81009c"/><rect x="372" y="300" width="12" height="12" fill="#8a009c"/><rect x="384" y="300" width="12" height="12" fill="#93009c"/><rect x="396" y="300" width="12" height="12" fill="#9b009c"/><rect x="408" y="300" width="12" height="12" fill="#9c0093"/><rect x="420" y="300" width="12" height="12" fill="#9c008c"/><rect x="432" y="300" width="12" height="12" fill="#9c0085"/><rect x="444" y="300" width="12" height="12" fill="#9c007f"/><rect x="456" y="300" width="12" height="12" fill="#9c0079"/><rect x="468" y="300" width="12" height="12" fill="#9c0074"/><rect x="480" y="300" width="12" height="12" fill="#9c006f"/><rect x="492" y="300" width="12" height="12" fill="#9c006a"/><rect x="504" y="300" width="12" height="12" fill="#9c0066"/><rect x="516" y="300" width="12" height="12" fill="#9c0062"/><rect x="528" y="300" width="12" height="12" fill="#9c005e"/><rect x="540" y="300" width="12" height="12" fill="#9c005b"/><rect x="552" y="300" width="12" height="12" fill="#9c0058"/><rect x="564" y="300" width="12" height="12" fill="#9c0055"/><rect x="576" y="300" width="12" height="12" fill="#9c0052"/><rect x="588" y="300" width="12" height="12" fill="#9c004f"/><rect x="600" y="300" width="12" height="12" fill="#9c004d"/><rect x="612" y="300" width="12" height="12" fill="#9c004a"/><rect x="0" y="312" width="12" height="12" fill="#001f9c"/><rect x="12" y="312" width="12" height="12" fill="#001d9c"/><rect x="24" y="312" width="12" height="12" fill="#001b9c"/><rect x="36" y="312" width="12" height="12" fill="#001a9c"/><rect x="48" y="312" width="12" height="12" fill="#00189c"/><rect x="60" y="312" width="12" height="12" fill="#00169c"/><rect x="72" y="312" width="12" height="12" fill="#00149c"/><rect x="84" y="312" width="12" height="12" fill="#00129c"/><rect x="96" y="312" width="12" height="12" fill="#00109c"/><rect x="108" y="312" width="12" height="12" fill="#000e9c"/><rect x="120" y="312" width="12" height="12" fill="#000c9c"/><rect x="132" y="312" width="12" height="12" fill="#000a9c"/><rect x="144" y="312" width="12" height="12" fill="#00089c"/><rect x="156" y="312" width="12" height="12" fill="#00069c"/><rect x="168" y="312" width="12" height="12" fill="#01049c"/><rect x="180" y="312" width="12" height="12" fill="#08029c"/><rect x="192" y="312" width="12" height="12" fill="#0f009c"/><rect x="204" y="312" width="12" height="12" fill="#17009c"/><rect x="216" y="312" width="12" height="12" fill="#1e009c"/><rect x="228" y="312" width="12" height="12" fill="#25009c"/><rect x="240" y="312" width="12" height="12" fill="#2d009c"/><rect x="252" y="312" width="12" height="12" fill="#34009c"/><rect x="264" y="312" width="12" height="12" fill="#3c009c"/><rect x="276" y="312" width="12" height="12" fill="#43009c"/><rect x="288" y="312" width="12" height="12" fill="#4b009c"/><rect x="300" y="312" width="12" height="12" fill="#53009c"/><rect x="312" y="312" width="12" height="12" fill="#5b009c"/><rect x="324" y="312" width="12" height="12" fill="#62009c"/><rect x="336" y="312" width="12" height="12" fill="#6a009c"/><rect x="348" y="312" width="12" height="12" fill="#72009c"/><rect x="360" y="312" width="12" height="12" fill="#7a009c"/><rect x="372" y="312" width="12" height="12" fill="#82009c"/><rect x="384" y="312" width="12" height="12" fill="#8b009c"/><rect x="396" y="312" width="12" height="12" fill="#93009c"/><rect x="408" y="312" width="12" height="12" fill="#9b009c"/><rect x="420" y="312" width="12" height="12" fill="#9c0094"/><rect x="432" y="312" width="12" height="12" fill="#9c008d"/><rect x="444" y="312" width="12" height="12" fill="#9c0086"/><rect x="456" y="312" width="12" height="12" fill="#9c0080"/><rect x="468" y="312" width="12" height="12" fill="#9c007a"/><rect x="480" y="312" width="12" height="12" fill="#9c0075"/><rect x="492" y="312" width="12" height="12" fill="#9c0070"/><rect x="504" y="312" width="12" height="12" fill="#9c006c"/><rect x="516" y="312" width="12" height="12" fill="#9c0068"/><rect x="528" y="312" width="12" height="12" fill="#9c0064"/><rect x="540" y="312" width="12" height="12" fill="#9c0060"/><rect x="552" y="312" width="12" height="12" fill="#9c005d"/><rect x="564" y="312" width="12" height="12" fill="#9c0059"/><rect x="576" y="312" width="12" height="12" fill="#9c0056"/><rect x="588" y="312" width="12" height="12" fill="#9c0054"/><rect x="600" y="312" width="12" height="12" fill="#9c0051"/><rect x="612" y="312" width="12" height="12" fill="#9c004e"/><rect x="0" y="324" width="12" height="12" fill="#001c9c"/><rect x="12" y="324" width="12" height="12" fill="#001a9c"/><rect x="24" y="324" width="12" height="12" fill="#00199c"/><rect x="36" y="324" width="12" height="12" fill="#00179c"/><rect x="48" y="324" width="12" height="12" fill="#00159c"/><rect x="60" y="324" width="12" height="12" fill="#00139c"/><rect x="72" y="324" width="12" height="12" fill="#00119c"/><rect x="84" y="324" width="12" height="12" fill="#000f9c"/><rect x="96" y="324" width="12" height="12" fill="#000e9c"/><rect x="108" y="324" width="12" height="12" fill="#000c9c"/><rect x="120" y="324" width="12" height="12" fill="#000a9c"/><rect x="132" y="324" width="12" height="12" fill="#00089c"/><rect x="144" y="324" width="12" height="12" fill="#00069c"/><rect x="156" y="324" width="12" height="12" fill="#00049c"/><rect x="168" y="324" width="12" height="12" fill="#00029c"/><rect x="180" y="324" width="12" height="12" fill="#07009c"/><rect x="192" y="324" width="12" height="12" fill="#0e009c"/><rect x="204" y="324" width="12" height="12" fill="#15009c"/><rect x="216" y="324" width="12" height="12" fill="#1c009c"/><rect x="228" y="324" width="12" height="12" fill="#23009c"/><rect x="240" y="324" width="12" height="12" fill="#2a009c"/><rect x="252" y="324" width="12" height="12" fill="#31009c"/><rect x="264" y="324" width="12" height="12" fill="#38009c"/><rect x="276" y="324" width="12" height="12" fill="#3f009c"/><rect x="288" y="324" width="12" height="12" fill="#47009c"/><rect x="300" y="324" width="12" height="12" fill="#4e009c"/><rect x="312" y="324" width="12" height="12" fill="#56009c"/><rect x="324" y="324" width="12" height="12" fill="#5d009c"/><rect x="336" y="324" width="12" height="12" fill="#65009c"/><rect x="348" y="324" width="12" height="12" fill="#6c009c"/><rect x="360" y="324" width="12" height="12" fill="#74009c"/><rect x="372" y="324" width="12" height="12" fill="#7c009c"/><rect x="384" y="324" width="12" height="12" fill="#83009c"/><rect x="396" y="324" width="12" height="12" fill="#8b009c"/><rect x="408" y="324" width="12" height="12" fill="#93009c"/><rect x="420" y="324" width="12" height="12" fill="#9b009c"/><rect x="432" y="324" width="12" height="12" fill="#9c0094"/><rect x="444" y="324" width="12" height="12" fill="#9c008d"/><rect x="456" y="324" width="12" height="12" fill="#9c0087"/><rect x="468" y="324" width="12" height="12" fill="#9c0081"/><rect x="480" y="324" width="12" height="12" fill="#9c007b"/><rect x="492" y="324" width="12" height="12" fill="#9c0076"/><rect x="504" y="324" width="12" height="12" fill="#9c0072"/><rect x="516" y="324" width="12" height="12" fill="#9c006d"/><rect x="528" y="324" width="12" height="12" fill="#9c0069"/><rect x="540" y="324" width="12" height="12" fill="#9c0065"/><rect x="552" y="324" width="12" height="12" fill="#9c0062"/><rect x="564" y="324" width="12" height="12" fill="#9c005e"/><rect x="576" y="324" width="12" height="12" fill="#9c005b"/><rect x="588" y="324" width="12" height="12" fill="#9c0058"/><rect x="600" y="324" width="12" height="12" fill="#9c0055"/><rect x="612" y="324" width="12" height="12" fill="#9c0053"/><rect x="0" y="336" width="12" height="12" fill="#00199c"/><rect x="12" y="336" width="12" height="12" fill="#00189c"/><rect x="24" y="336" width="12" height="12" fill="#00169c"/><rect x="36" y="336" width="12" height="12" fill="#00149c"/><rect x="48" y="336" width="12" height="12" fill="#00129c"/><rect x="60" y="336" width="12" height="12" fill="#00119c"/><rect x="72" y="336" width="12" height="12" fill="#000f9c"/><rect x="84" y="336" width="12" height="12" fill="#000d9c"/><rect x="96" y="336" width="12" height="12" fill="#000b9c"/><rect x="108" y="336" width="12" height="12" fill="#00099c"/><rect x="120" y="336" width="12" height="12" fill="#00089c"/><rect x="132" y="336" width="12" height="12" fill="#00069c"/><rect x="144" y="336" width="12" height="12" fill="#00049c"/><rect x="156" y="336" width="12" height="12" fill="#00029c"/><rect x="168" y="336" width="12" height="12" fill="#00009c"/><rect x="180" y="336" width="12" height="12" fill="#05009c"/><rect x="192" y="336" width="12" height="12" fill="#0c009c"/><rect x="204" y="336" width="12" height="12" fill="#13009c"/><rect x="216" y="336" width="12" height="12" fill="#19009c"/><rect x="228" y="336" width="12" height="12" fill="#20009c"/><rect x="240" y="336" width="12" height="12" fill="#27009c"/><rect x="252" y="336" width="12" height="12" fill="#2e009c"/><rect x="264" y="336" width="12" height="12" fill="#35009c"/><rect x="276" y="336" width="12" height="12" fill="#3c009c"/><rect x="288" y="336" width="12" height="12" fill="#43009c"/><rect x="300" y="336" width="12" height="12" fill="#4a009c"/><rect x="312" y="336" width="12" height="12" fill="#51009c"/><rect x="324" y="336" width="12" height="12" fill="#58009c"/><rect x="336" y="336" width="12" height="12" fill="#5f009c"/><rect x="348" y="336" width="12" height="12" fill="#67009c"/><rect x="360" y="336" width="12" height="12" fill="#6e009c"/><rect x="372" y="336" width="12" height="12" fill="#75009c"/><rect x="384" y="336" width="12" height="12" fill="#7d009c"/><rect x="396" y="336" width="12" height="12" fill="#84009c"/><rect x="408" y="336" width="12" height="12" fill="#8c009c"/><rect x="420" y="336" width="12" height="12" fill="#94009c"/><rect x="432" y="336" width="12" height="12" fill="#9b009c"/><rect x="444" y="336" width="12" height="12" fill="#9c0094"/><rect x="456" y="336" width="12" height="12" fill="#9c008e"/><rect x="468" y="336" width="12" height="12" fill="#9c0087"/><rect x="480" y="336" width="12" height="12" fill="#9c0082"/><rect x="492" y="336" width="12" height="12" fill="#9c007c"/><rect x="504" y="336" width="12" height="12" fill="#9c0077"/><rect x="516" y="336" width="12" height="12" fill="#9c0073"/><rect x="528" y="336" width="12" height="12" fill="#9c006e"/><rect x="540" y="336" width="12" height="12" fill="#9c006a"/><rect x="552" y="336" width="12" height="12" fill="#9c0067"/><rect x="564" y="336" width="12" height="12" fill="#9c0063"/><rect x="576" y="336" width="12" height="12" fill="#9c0060"/><rect x="588" y="336" width="12" height="12" fill="#9c005d"/><rect x="600" y="336" width="12" height="12" fill="#9c005a"/><rect x="612" y="336" width="12" height="12" fill="#9c0057"/><rect x="0" y="348" width="12" height="12" fill="#00179c"/><rect x="12" y="348" width="12" height="12" fill="#00159c"/><rect x="24" y="348" width="12" height="12" fill="#00139c"/><rect x="36" y="348" width="12" height="12" fill="#00129c"/><rect x="48" y="348" width="12" height="12" fill="#00109c"/><rect x="60" y="348" width="12" height="12" fill="#000e9c"/><rect x="72" y="348" width="12" height="12" fill="#000d9c"/><rect x="84" y="348" width="12" height="12" fill="#000b9c"/><rect x="96" y="348" width="12" height="12" fill="#00099c"/><rect x="108" y="348" width="12" height="12" fill="#00079c"/><rect x="120" y="348" width="12" height="12" fill="#00069c"/><rect x="132" y="348" width="12" height="12" fill="#00049c"/><rect x="144" y="348" width="12" height="12" fill="#00029c"/><rect x="156" y="348" width="12" height="12" fill="#00009c"/><rect x="168" y="348" width="12" height="12" fill="#00009c"/><rect x="180" y="348" width="12" height="12" fill="#04009c"/><rect x="192" y="348" width="12" height="12" fill="#0b009c"/><rect x="204" y="348" width="12" height="12" fill="#11009c"/><rect x="216" y="348" width="12" height="12" fill="#17009c"/><rect x="228" y="348" width="12" height="12" fill="#1e009c"/><rect x="240" y="348" width="12" height="12" fill="#24009c"/><rect x="252" y="348" width="12" height="12" fill="#2b009c"/><rect x="264" y="348" width="12" height="12" fill="#32009c"/><rect x="276" y="348" width="12" height="12" fill="#38009c"/><rect x="288" y="348" width="12" height="12" fill="#3f009c"/><rect x="300" y="348" width="12" height="12" fill="#46009c"/><rect x="312" y="348" width="12" height="12" fill="#4d009c"/><rect x="324" y="348" width="12" height="12" fill="#54009c"/><rect x="336" y="348" width="12" height="12" fill="#5a009c"/><rect x="348" y="348" width="12" height="12" fill="#61009c"/><rect x="360" y="348" width="12" height="12" fill="#68009c"/><rect x="372" y="348" width="12" height="12" fill="#70009c"/><rect x="384" y="348" width="12" height="12" fill="#77009c"/><rect x="396" y="348" width="12" height="12" fill="#7e009c"/><rect x="408" y="348" width="12" height="12" fill="#85009c"/><rect x="420" y="348" width="12" height="12" fill="#8c009c"/><rect x="432" y="348" width="12" height="12" fill="#94009c"/><rect x="444" y="348" width="12" height="12" fill="#9b009c"/><rect x="456" y="348" width="12" height="12" fill="#9c0095"/><rect x="468" y="348" width="12" height="12" fill="#9c008e"/><rect x="480" y="348" width="12" height="12" fill="#9c0088"/><rect x="492" y="348" width="12" height="12" fill="#9c0083"/><rect x="504" y="348" width="12" height="12" fill="#9c007d"/><rect x="516" y="348" width="12" height="12" fill="#9c0078"/><rect x="528" y="348" width="12" height="12" fill="#9c0074"/><rect x="540" y="348" width="12" height="12" fill="#9c0070"/><rect x="552" y="348" width="12" height="12" fill="#9c006c"/><rect x="564" y="348" width="12" height="12" fill="#9c0068"/><rect x="576" y="348" width="12" height="12" fill="#9c0065"/><rect x="588" y="348" width="12" height="12" fill="#9c0061"/><rect x="600" y="348" width="12" height="12" fill="#9c005e"/><rect x="612" y="348" width="12" height="12" fill="#9c005b"/><rect x="0" y="360" width="12" height="12" fill="#00149c"/><rect x="12" y="360" width="12" height="12" fill="#00139c"/><rect x="24" y="360" width="12" height="12" fill="#00119c"/><rect x="36" y="360" width="12" height="12" fill="#000f9c"/><rect x="48" y="360" width="12" height="12" fill="#000e9c"/><rect x="60" y="360" width="12" height="12" fill="#000c9c"/><rect x="72" y="360" width="12" height="12" fill="#000a9c"/><rect x="84" y="360" width="12" height="12" fill="#00099c"/><rect x="96" y="360" width="12" height="12" fill="#00079c"/><rect x="108" y="360" width="12" height="12" fill="#00059c"/><rect x="120" y="360" width="12" height="12" fill="#00049c"/><rect x="132" y="360" width="12" height="12" fill="#00029c"/><rect x="144" y="360" width="12" height="12" fill="#00009c"/><rect x="156" y="360" width="12" height="12" fill="#00009c"/><rect x="168" y="360" width="12" height="12" fill="#00009c"/><rect x="180" y="360" width="12" height="12" fill="#03009c"/><rect x="192" y="360" width="12" height="12" fill="#09009c"/><rect x="204" y="360" width="12" height="12" fill="#0f009c"/><rect x="216" y="360" width="12" height="12" fill="#16009c"/><rect x="228" y="360" width="12" height="12" fill="#1c009c"/><rect x="240" y="360" width="12" height="12" fill="#22009c"/><rect x="252" y="360" width="12" height="12" fill="#28009c"/><rect x="264" y="360" width="12" height="12" fill="#2f009c"/><rect x="276" y="360" width="12" height="12" fill="#35009c"/><rect x="288" y="360" width="12" height="12" fill="#3c009c"/><rect x="300" y="360" width="12" height="12" fill="#42009c"/><rect x="312" y="360" width="12" height="12" fill="#49009c"/><rect x="324" y="360" width="12" height="12" fill="#4f009c"/><rect x="336" y="360" width="12" height="12" fill="#56009c"/><rect x="348" y="360" width="12" height="12" fill="#5d009c"/><rect x="360" y="360" width="12" height="12" fill="#63009c"/><rect x="372" y="360" width="12" height="12" fill="#6a009c"/><rect x="384" y="360" width="12" height="12" fill="#71009c"/><rect x="396" y="360" width="12" height="12" fill="#78009c"/><rect x="408" y="360" width="12" height="12" fill="#7f009c"/><rect x="420" y="360" width="12" height="12" fill="#86009c"/><rect x="432" y="360" width="12" height="12" fill="#8d009c"/><rect x="444" y="360" width="12" height="12" fill="#94009c"/><rect x="456" y="360" width="12" height="12" fill="#9b009c"/><rect x="468" y="360" width="12" height="12" fill="#9c0095"/><rect x="480" y="360" width="12" height="12" fill="#9c008f"/><rect x="492" y="360" width="12" height="12" fill="#9c0089"/><rect x="504" y="360" width="12" height="12" fill="#9c0083"/><rect x="516" y="360" width="12" height="12" fill="#9c007e"/><rect x="528" y="360" width="12" height="12" fill="#9c0079"/><rect x="540" y="360" width="12" height="12" fill="#9c0075"/><rect x="552" y="360" width="12" height="12" fill="#9c0071"/><rect x="564" y="360" width="12" height="12" fill="#9c006d"/><rect x="576" y="360" width="12" height="12" fill="#9c0069"/><rect x="588" y="360" width="12" height="12" fill="#9c0066"/><rect x="600" y="360" width="12" height="12" fill="#9c0063"/><rect x="612" y="360" width="12" height="12" fill="#9c0060"/><rect x="0" y="372" width="12" height="12" fill="#00129c"/><rect x="12" y="372" width="12" height="12" fill="#00109c"/><rect x="24" y="372" width="12" height="12" fill="#000f9c"/><rect x="36" y="372" width="12" height="12" fill="#000d9c"/><rect x="48" y="372" width="12" height="12" fill="#000c9c"/><rect x="60" y="372" width="12" height="12" fill="#000a9c"/><rect x="72" y="372" width="12" height="12" fill="#00089c"/><rect x="84" y="372" width="12" height="12" fill="#00079c"/><rect x="96" y="372" width="12" height="12" fill="#00059c"/><rect x="108" y="372" width="12" height="12" fill="#00049c"/><rect x="120" y="372" width="12" height="12" fill="#00029c"/><rect x="132" y="372" width="12" height="12" fill="#00009c"/><rect x="144" y="372" width="12" height="12" fill="#00009c"/><rect x="156" y="372" width="12" height="12" fill="#00009c"/><rect x="168" y="372" width="12" height="12" fill="#00009c"/><rect x="180" y="372" width="12" height="12" fill="#02009c"/><rect x="192" y="372" width="12" height="12" fill="#08009c"/><rect x="204" y="372" width="12" height="12" fill="#0e009c"/><rect x="216" y="372" width="12" height="12" fill="#14009c"/><rect x="228" y="372" width="12" height="12" fill="#1a009c"/><rect x="240" y="372" width="12" height="12" fill="#20009c"/><rect x="252" y="372" width="12" height="12" fill="#26009c"/><rect x="264" y="372" width="12" height="12" fill="#2c009c"/><rect x="276" y="372" width="12" height="12" fill="#32009c"/><rect x="288" y="372" width="12" height="12" fill="#39009c"/><rect x="300" y="372" width="12" height="12" fill="#3f009c"/><rect x="312" y="372" width="12" height="12" fill="#45009c"/><rect x="324" y="372" width="12" height="12" fill="#4b009c"/><rect x="336" y="372" width="12" height="12" fill="#52009c"/><rect x="348" y="372" width="12" height="12" fill="#58009c"/><rect x="360" y="372" width="12" height="12" fill="#5f009c"/><rect x="372" y="372" width="12" height="12" fill="#65009c"/><rect x="384" y="372" width="12" height="12" fill="#6c009c"/><rect x="396" y="372" width="12" height="12" fill="#72009c"/><rect x="408" y="372" width="12" height="12" fill="#79009c"/><rect x="420" y="372" width="12" height="12" fill="#80009c"/><rect x="432" y="372" width="12" height="12" fill="#87009c"/><rect x="444" y="372" width="12" height="12" fill="#8d009c"/><rect x="456" y="372" width="12" height="12" fill="#94009c"/><rect x="468" y="372" width="12" height="12" fill="#9b009c"/><rect x="480" y="372" width="12" height="12" fill="#9c0095"/><rect x="492" y="372" width="12" height="12" fill="#9c008f"/><rect x="504" y="372" width="12" height="12" fill="#9c0089"/><rect x="516" y="372" width="12" height="12" fill="#9c0084"/><rect x="528" y="372" width="12" height="12" fill="#9c007f"/><rect x="540" y="372" width="12" height="12" fill="#9c007a"/><rect x="552" y="372" width="12" height="12" fill="#9c0076"/><rect x="564" y="372" width="12" height="12" fill="#9c0072"/><rect x="576" y="372" width="12" height="12" fill="#9c006e"/><rect x="588" y="372" width="12" height="12" fill="#9c006b"/><rect x="600" y="372" width="12" height="12" fill="#9c0067"/><rect x="612" y="372" width="12" height="12" fill="#9c0064"/><rect x="0" y="384" width="12" height="12" fill="#00109c"/><rect x="12" y="384" width="12" height="12" fill="#000e9c"/><rect x="24" y="384" width="12" height="12" fill="#000d9c"/><rect x="36" y="384" width="12" height="12" fill="#000b9c"/><rect x="48" y="384" width="12" height="12" fill="#000a9c"/><rect x="60" y="384" width="12" height="12" fill="#00089c"/><rect x="72" y="384" width="12" height="12" fill="#00079c"/><rect x="84" y="384" width="12" height="12" fill="#00059c"/><rect x="96" y="384" width="12" height="12" fill="#00039c"/><rect x="108" y="384" width="12" height="12" fill="#00029c"/><rect x="120" y="384" width="12" height="12" fill="#00009c"/><rect x="132" y="384" width="12" height="12" fill="#00009c"/><rect x="144" y="384" width="12" height="12" fill="#00009c"/><rect x="156" y="384" width="12" height="12" fill="#00009c"/><rect x="168" y="384" width="12" height="12" fill="#00009c"/><rect x="180" y="384" width="12" height="12" fill="#01009c"/><rect x="192" y="384" width="12" height="12" fill="#07009c"/><rect x="204" y="384" width="12" height="12" fill="#0c009c"/><rect x="216" y="384" width="12" height="12" fill="#12009c"/><rect x="228" y="384" width="12" height="12" fill="#18009c"/><rect x="240" y="384" width="12" height="12" fill="#1e009c"/><rect x="252" y="384" width="12" height="12" fill="#24009c"/><rect x="264" y="384" width="12" height="12" fill="#2a009c"/><rect x="276" y="384" width="12" height="12" fill="#30009c"/><rect x="288" y="384" width="12" height="12" fill="#36009c"/><rect x="300" y="384" width="12" height="12" fill="#3c009c"/><rect x="312" y="384" width="12" height="12" fill="#42009c"/><rect x="324" y="384" width="12" height="12" fill="#48009c"/><rect x="336" y="384" width="12" height="12" fill="#4e009c"/><rect x="348" y="384" width="12" height="12" fill="#54009c"/><rect x="360" y="384" width="12" height="12" fill="#5a009c"/><rect x="372" y="384" width="12" height="12" fill="#61009c"/><rect x="384" y="384" width="12" height="12" fill="#67009c"/><rect x="396" y="384" width="12" height="12" fill="#6d009c"/><rect x="408" y="384" width="12" height="12" fill="#74009c"/><rect x="420" y="384" width="12" height="12" fill="#7a009c"/><rect x="432" y="384" width="12" height="12" fill="#81009c"/><rect x="444" y="384" width="12" height="12" fill="#87009c"/><rect x="456" y="384" width="12" height="12" fill="#8e009c"/><rect x="468" y="384" width="12" height="12" fill="#94009c"/><rect x="480" y="384" width="12" height="12" fill="#9b009c"/><rect x="492" y="384" width="12" height="12" fill="#9c0096"/><rect x="504" y="384" width="12" height="12" fill="#9c0090"/><rect x="516" y="384" width="12" height="12" fill="#9c008a"/><rect x="528" y="384" width="12" height="12" fill="#9c0085"/><rect x="540" y="384" width="12" height="12" fill="#9c0080"/><rect x="552" y="384" width="12" height="12" fill="#9c007b"/><rect x="564" y="384" width="12" height="12" fill="#9c0077"/><rect x="576" y="384" width="12" height="12" fill="#9c0073"/><rect x="588" y="384" width="12" height="12" fill="#9c006f"/><rect x="600" y="384" width="12" height="12" fill="#9c006c"/><rect x="612" y="384" width="12" height="12" fill="#9c0068"/><rect x="0" y="396" width="12" height="12" fill="#000e9c"/><rect x="12" y="396" width="12" height="12" fill="#000c9c"/><rect x="24" y="396" width="12" height="12" fill="#000b9c"/><rect x="36" y="396" width="12" height="12" fill="#00099c"/><rect x="48" y="396" width="12" height="12" fill="#00089c"/><rect x="60" y="396" width="12" height="12" fill="#00069c"/><rect x="72" y="396" width="12" height="12" fill="#00059c"/><rect x="84" y="396" width="12" height="12" fill="#00039c"/><rect x="96" y="396" width="12" height="12" fill="#00029c"/><rect x="108" y="396" width="12" height="12" fill="#00009c"/><rect x="120" y="396" width="12" height="12" fill="#00009c"/><rect x="132" y="396" width="12" height="12" fill="#00009c"/><rect x="144" y="396" width="12" height="12" fill="#00009c"/><rect x="156" y="396" width="12" height="12" fill="#00009c"/><rect x="168" y="396" width="12" height="12" fill="#00009c"/><rect x="180" y="396" width="12" height="12" fill="#00009c"/><rect x="192" y="396" width="12" height="12" fill="#06009c"/><rect x="204" y="396" width="12" height="12" fill="#0b009c"/><rect x="216" y="396" width="12" height="12" fill="#11009c"/><rect x="228" y="396" width="12" height="12" fill="#16009c"/><rect x="240" y="396" width="12" height="12" fill="#1c009c"/><rect x="252" y="396" width="12" height="12" fill="#22009c"/><rect x="264" y="396" width="12" height="12" fill="#27009c"/><rect x="276" y="396" width="12" height="12" fill="#2d009c"/><rect x="288" y="396" width="12" height="12" fill="#33009c"/><rect x="300" y="396" width="12" height="12" fill="#39009c"/><rect x="312" y="396" width="12" height="12" fill="#3f009c"/><rect x="324" y="396" width="12" height="12" fill="#44009c"/><rect x="336" y="396" width="12" height="12" fill="#4a009c"/><rect x="348" y="396" width="12" height="12" fill="#50009c"/><rect x="360" y="396" width="12" height="12" fill="#56009c"/><rect x="372" y="396" width="12" height="12" fill="#5c009c"/><rect x="384" y="396" width="12" height="12" fill="#63009c"/><rect x="396" y="396" width="12" height="12" fill="#69009c"/><rect x="408" y="396" width="12" height="12" fill="#6f009c"/><rect x="420" y="396" width="12" height="12" fill="#75009c"/><rect x="432" y="396" width="12" height="12" fill="#7b009c"/><rect x="444" y="396" width="12" height="12" fill="#82009c"/><rect x="456" y="396" width="12" height="12" fill="#88009c"/><rect x="468" y="396" width="12" height="12" fill="#8e009c"/><rect x="480" y="396" width="12" height="12" fill="#95009c"/><rect x="492" y="396" width="12" height="12" fill="#9b009c"/><rect x="504" y="396" width="12" height="12" fill="#9c0096"/><rect x="516" y="396" width="12" height="12" fill="#9c0090"/><rect x="528" y="396" width="12" height="12" fill="#9c008a"/><rect x="540" y="396" width="12" height="12" fill="#9c0085"/><rect x="552" y="396" width="12" height="12" fill="#9c0081"/><rect x="564" y="396" width="12" height="12" fill="#9c007c"/><rect x="576" y="396" width="12" height="12" fill="#9c0078"/><rect x="588" y="396" width="12" height="12" fill="#9c0074"/><rect x="600" y="396" width="12" height="12" fill="#9c0070"/><rect x="612" y="396" width="12" height="12" fill="#9c006d"/><rect x="0" y="408" width="12" height="12" fill="#000c9c"/><rect x="12" y="408" width="12" height="12" fill="#000b9c"/><rect x="24" y="408" width="12" height="12" fill="#00099c"/><rect x="36" y="408" width="12" height="12" fill="#00089c"/><rect x="48" y="408" width="12" height="12" fill="#00069c"/><rect x="60" y="408" width="12" height="12" fill="#00059c"/><rect x="72" y="408" width="12" height="12" fill="#00039c"/><rect x="84" y="408" width="12" height="12" fill="#00029c"/><rect x="96" y="408" width="12" height="12" fill="#00009c"/><rect x="108" y="408" width="12" height="12" fill="#00009c"/><rect x="120" y="408" width="12" height="12" fill="#00009c"/><rect x="132" y="408" width="12" height="12" fill="#00009c"/><rect x="144" y="408" width="12" height="12" fill="#00009c"/><rect x="156" y="408" width="12" height="12" fill="#00009c"/><rect x="168" y="408" width="12" height="12" fill="#00009c"/><rect x="180" y="408" width="12" height="12" fill="#00009c"/><rect x="192" y="408" width="12" height="12" fill="#05009c"/><rect x="204" y="408" width="12" height="12" fill="#0a009c"/><rect x="216" y="408" width="12" height="12" fill="#0f009c"/><rect x="228" y="408" width="12" height="12" fill="#15009c"/><rect x="240" y="408" width="12" height="12" fill="#1a009c"/><rect x="252" y="408" width="12" height="12" fill="#20009c"/><rect x="264" y="408" width="12" height="12" fill="#25009c"/><rect x="276" y="408" width="12" height="12" fill="#2b009c"/><rect x="288" y="408" width="12" height="12" fill="#30009c"/><rect x="300" y="408" width="12" height="12" fill="#36009c"/><rect x="312" y="408" width="12" height="12" fill="#3c009c"/><rect x="324" y="408" width="12" height="12" fill="#41009c"/><rect x="336" y="408" width="12" height="12" fill="#47009c"/><rect x="348" y="408" width="12" height="12" fill="#4d009c"/><rect x="360" y="408" width="12" height="12" fill="#53009c"/><rect x="372" y="408" width="12" height="12" fill="#58009c"/><rect x="384" y="408" width="12" height="12" fill="#5e009c"/><rect x="396" y="408" width="12" height="12" fill="#64009c"/><rect x="408" y="408" width="12" height="12" fill="#6a009c"/><rect x="420" y="408" width="12" height="12" fill="#70009c"/><rect x="432" y="408" width="12" height="12" fill="#76009c"/><rect x="444" y="408" width="12" height="12" fill="#7c009c"/><rect x="456" y="408" width="12" height="12" fill="#82009c"/><rect x="468" y="408" width="12" height="12" fill="#88009c"/><rect x="480" y="408" width="12" height="12" fill="#8f009c"/><rect x="492" y="408" width="12" height="12" fill="#95009c"/><rect x="504" y="408" width="12" height="12" fill="#9b009c"/><rect x="516" y="408" width="12" height="12" fill="#9c0096"/><rect x="528" y="408" width="12" height="12" fill="#9c0090"/><rect x="540" y="408" width="12" height="12" fill="#9c008b"/><rect x="552" y="408" width="12" height="12" fill="#9c0086"/><rect x="564" y="408" width="12" height="12" fill="#9c0081"/><rect x="576" y="408" width="12" height="12" fill="#9c007d"/><rect x="588" y="408" width="12" height="12" fill="#9c0079"/><rect x="600" y="408" width="12" height="12" fill="#9c0075"/><rect x="612" y="408" width="12" height="12" fill="#9c0071"/><rect x="0" y="420" width="12" height="12" fill="#000a9c"/><rect x="12" y="420" width="12" height="12" fill="#00099c"/><rect x="24" y="420" width="12" height="12" fill="#00079c"/><rect x="36" y="420" width="12" height="12" fill="#00069c"/><rect x="48" y="420" width="12" height="12" fill="#00059c"/><rect x="60" y="420" width="12" height="12" fill="#00039c"/><rect x="72" y="420" width="12" height="12" fill="#00029c"/><rect x="84" y="420" width="12" height="12" fill="#00009c"/><rect x="96" y="420" width="12" height="12" fill="#00009c"/><rect x="108" y="420" width="12" height="12" fill="#00009c"/><rect x="120" y="420" width="12" height="12" fill="#00009c"/><rect x="132" y="420" width="12" height="12" fill="#00009c"/><rect x="144" y="420" width="12" height="12" fill="#00009c"/><rect x="156" y="420" width="12" height="12" fill="#00009c"/><rect x="168" y="420" width="12" height="12" fill="#00009c"/><rect x="180" y="420" width="12" height="12" fill="#00009c"/><rect x="192" y="420" width="12" height="12" fill="#04009c"/><rect x="204" y="420" width="12" height="12" fill="#09009c"/><rect x="216" y="420" width="12" height="12" fill="#0e009c"/><rect x="228" y="420" width="12" height="12" fill="#13009c"/><rect x="240" y="420" width="12" height="12" fill="#19009c"/><rect x="252" y="420" width="12" height="12" fill="#1e009c"/><rect x="264" y="420" width="12" height="12" fill="#23009c"/><rect x="276" y="420" width="12" height="12" fill="#29009c"/><rect x="288" y="420" width="12" height="12" fill="#2e009c"/><rect x="300" y="420" width="12" height="12" fill="#33009c"/><rect x="312" y="420" width="12" height="12" fill="#39009c"/><rect x="324" y="420" width="12" height="12" fill="#3e009c"/><rect x="336" y="420" width="12" height="12" fill="#44009c"/><rect x="348" y="420" width="12" height="12" fill="#49009c"/><rect x="360" y="420" width="12" height="12" fill="#4f009c"/><rect x="372" y="420" width="12" height="12" fill="#55009c"/><rect x="384" y="420" width="12" height="12" fill="#5a009c"/><rect x="396" y="420" width="12" height="12" fill="#60009c"/><rect x="408" y="420" width="12" height="12" fill="#66009c"/><rect x="420" y="420" width="12" height="12" fill="#6c009c"/><rect x="432" y="420" width="12" height="12" fill="#71009c"/><rect x="444" y="420" width="12" height="12" fill="#77009c"/><rect x="456" y="420" width="12" height="12" fill="#7d009c"/><rect x="468" y="420" width="12" height="12" fill="#83009c"/><rect x="480" y="420" width="12" height="12" fill="#89009c"/><rect x="492" y="420" width="12" height="12" fill="#8f009c"/><rect x="504" y="420" width="12" height="12" fill="#95009c"/><rect x="516" y="420" width="12" height="12" fill="#9b009c"/><rect x="528" y="420" width="12" height="12" fill="#9c0096"/><rect x="540" y="420" width="12" height="12" fill="#9c0091"/><rect x="552" y="420" width="12" height="12" fill="#9c008b"/><rect x="564" y="420" width="12" height="12" fill="#9c0087"/><rect x="576" y="420" width="12" height="12" fill="#9c0082"/><rect x="588" y="420" width="12" height="12" fill="#9c007e"/><rect x="600" y="420" width="12" height="12" fill="#9c007a"/><rect x="612" y="420" width="12" height="12" fill="#9c0076"/><rect x="0" y="432" width="12" height="12" fill="#00099c"/><rect x="12" y="432" width="12" height="12" fill="#00079c"/><rect x="24" y="432" width="12" height="12" fill="#00069c"/><rect x="36" y="432" width="12" height="12" fill="#00059c"/><rect x="48" y="432" width="12" height="12" fill="#00039c"/><rect x="60" y="432" width="12" height="12" fill="#00029c"/><rect x="72" y="432" width="12" height="12" fill="#00009c"/><rect x="84" y="432" width="12" height="12" fill="#00009c"/><rect x="96" y="432" width="12" height="12" fill="#00009c"/><rect x="108" y="432" width="12" height="12" fill="#00009c"/><rect x="120" y="432" width="12" height="12" fill="#00009c"/><rect x="132" y="432" width="12" height="12" fill="#00009c"/><rect x="144" y="432" width="12" height="12" fill="#00009c"/><rect x="156" y="432" width="12" height="12" fill="#00009c"/><rect x="168" y="432" width="12" height="12" fill="#00009c"/><rect x="180" y="432" width="12" height="12" fill="#00009c"/><rect x="192" y="432" width="12" height="12" fill="#03009c"/><rect x="204" y="432" width="12" height="12" fill="#08009c"/><rect x="216" y="432" width="12" height="12" fill="#0d009c"/><rect x="228" y="432" width="12" height="12" fill="#12009c"/><rect x="240" y="432" width="12" height="12" fill="#17009c"/><rect x="252" y="432" width="12" height="12" fill="#1c009c"/><rect x="264" y="432" width="12" height="12" fill="#21009c"/><rect x="276" y="432" width="12" height="12" fill="#27009c"/><rect x="288" y="432" width="12" height="12" fill="#2c009c"/><rect x="300" y="432" width="12" height="12" fill="#31009c"/><rect x="312" y="432" width="12" height="12" fill="#36009c"/><rect x="324" y="432" width="12" height="12" fill="#3c009c"/><rect x="336" y="432" width="12" height="12" fill="#41009c"/><rect x="348" y="432" width="12" height="12" fill="#46009c"/><rect x="360" y="432" width="12" height="12" fill="#4c009c"/><rect x="372" y="432" width="12" height="12" fill="#51009c"/><rect x="384" y="432" width="12" height="12" fill="#57009c"/><rect x="396" y="432" width="12" height="12" fill="#5c009c"/><rect x="408" y="432" width="12" height="12" fill="#62009c"/><rect x="420" y="432" width="12" height="12" fill="#67009c"/><rect x="432" y="432" width="12" height="12" fill="#6d009c"/><rect x="444" y="432" width="12" height="12" fill="#73009c"/><rect x="456" y="432" width="12" height="12" fill="#78009c"/><rect x="468" y="432" width="12" height="12" fill="#7e009c"/><rect x="480" y="432" width="12" height="12" fill="#84009c"/><rect x="492" y="432" width="12" height="12" fill="#8a009c"/><rect x="504" y="432" width="12" height="12" fill="#8f009c"/><rect x="516" y="432" width="12" height="12" fill="#95009c"/><rect x="528" y="432" width="12" height="12" fill="#9b009c"/><rect x="540" y="432" width="12" height="12" fill="#9c0096"/><rect x="552" y="432" width="12" height="12" fill="#9c0091"/><rect x="564" y="432" width="12" height="12" fill="#9c008c"/><rect x="576" y="432" width="12" height="12" fill="#9c0087"/><rect x="588" y="432" width="12" height="12" fill="#9c0083"/><rect x="600" y="432" width="12" height="12" fill="#9c007f"/><rect x="612" y="432" width="12" height="12" fill="#9c007b"/><rect x="0" y="444" width="12" height="12" fill="#00079c"/><rect x="12" y="444" width="12" height="12" fill="#00069c"/><rect x="24" y="444" width="12" height="12" fill="#00049c"/><rect x="36" y="444" width="12" height="12" fill="#00039c"/><rect x="48" y="444" width="12" height="12" fill="#00029c"/><rect x="60" y="444" width="12" height="12" fill="#00009c"/><rect x="72" y="444" width="12" height="12" fill="#00009c"/><rect x="84" y="444" width="12" height="12" fill="#00009c"/><rect x="96" y="444" width="12" height="12" fill="#00009c"/><rect x="108" y="444" width="12" height="12" fill="#00009c"/><rect x="120" y="444" width="12" height="12" fill="#00009c"/><rect x="132" y="444" width="12" height="12" fill="#00009c"/><rect x="144" y="444" width="12" height="12" fill="#00009c"/><rect x="156" y="444" width="12" height="12" fill="#00009c"/><rect x="168" y="444" width="12" height="12" fill="#00009c"/><rect x="180" y="444" width="12" height="12" fill="#00009c"/><rect x="192" y="444" width="12" height="12" fill="#02009c"/><rect x="204" y="444" width="12" height="12" fill="#07009c"/><rect x="216" y="444" width="12" height="12" fill="#0c009c"/><rect x="228" y="444" width="12" height="12" fill="#11009c"/><rect x="240" y="444" width="12" height="12" fill="#16009c"/><rect x="252" y="444" width="12" height="12" fill="#1b009c"/><rect x="264" y="444" width="12" height="12" fill="#20009c"/><rect x="276" y="444" width="12" height="12" fill="#25009c"/><rect x="288" y="444" width="12" height="12" fill="#2a009c"/><rect x="300" y="444" width="12" height="12" fill="#2f009c"/><rect x="312" y="444" width="12" height="12" fill="#34009c"/><rect x="324" y="444" width="12" height="12" fill="#39009c"/><rect x="336" y="444" width="12" height="12" fill="#3e009c"/><rect x="348" y="444" width="12" height="12" fill="#43009c"/><rect x="360" y="444" width="12" height="12" fill="#49009c"/><rect x="372" y="444" width="12" height="12" fill="#4e009c"/><rect x="384" y="444" width="12" height="12" fill="#53009c"/><rect x="396" y="444" width="12" height="12" fill="#59009c"/><rect x="408" y="444" width="12" height="12" fill="#5e009c"/><rect x="420" y="444" width="12" height="12" fill="#63009c"/><rect x="432" y="444" width="12" height="12" fill="#69009c"/><rect x="444" y="444" width="12" height="12" fill="#6e009c"/><rect x="456" y="444" width="12" height="12" fill="#74009c"/><rect x="468" y="444" width="12" height="12" fill="#79009c"/><rect x="480" y="444" width="12" height="12" fill="#7f009c"/><rect x="492" y="444" width="12" height="12" fill="#84009c"/><rect x="504" y="444" width="12" height="12" fill="#8a009c"/><rect x="516" y="444" width="12" height="12" fill="#90009c"/><rect x="528" y="444" width="12" height="12" fill="#95009c"/><rect x="540" y="444" width="12" height="12" fill="#9b009c"/><rect x="552" y="444" width="12" height="12" fill="#9c0096"/><rect x="564" y="444" width="12" height="12" fill="#9c0091"/><rect x="576" y="444" width="12" height="12" fill="#9c008c"/><rect x="588" y="444" width="12" height="12" fill="#9c0088"/><rect x="600" y="444" width="12" height="12" fill="#9c0083"/><rect x="612" y="444" width="12" height="12" fill="#9c007f"/><rect x="0" y="456" width="12" height="12" fill="#00069c"/><rect x="12" y="456" width="12" height="12" fill="#00049c"/><rect x="24" y="456" width="12" height="12" fill="#00039c"/><rect x="36" y="456" width="12" height="12" fill="#00029c"/><rect x="48" y="456" width="12" height="12" fill="#00009c"/><rect x="60" y="456" width="12" height="12" fill="#00009c"/><rect x="72" y="456" width="12" height="12" fill="#00009c"/><rect x="84" y="456" width="12" height="12" fill="#00009c"/><rect x="96" y="456" width="12" height="12" fill="#00009c"/><rect x="108" y="456" width="12" height="12" fill="#00009c"/><rect x="120" y="456" width="12" height="12" fill="#00009c"/><rect x="132" y="456" width="12" height="12" fill="#00009c"/><rect x="144" y="456" width="12" height="12" fill="#00009c"/><rect x="156" y="456" width="12" height="12" fill="#00009c"/><rect x="168" y="456" width="12" height="12" fill="#00009c"/><rect x="180" y="456" width="12" height="12" fill="#00009c"/><rect x="192" y="456" width="12" height="12" fill="#01009c"/><rect x="204" y="456" width="12" height="12" fill="#06009c"/><rect x="216" y="456" width="12" height="12" fill="#0b009c"/><rect x="228" y="456" width="12" height="12" fill="#0f009c"/><rect x="240" y="456" width="12" height="12" fill="#14009c"/><rect x="252" y="456" width="12" height="12" fill="#19009c"/><rect x="264" y="456" width="12" height="12" fill="#1e009c"/><rect x="276" y="456" width="12" height="12" fill="#23009c"/><rect x="288" y="456" width="12" height="12" fill="#28009c"/><rect x="300" y="456" width="12" height="12" fill="#2d009c"/><rect x="312" y="456" width="12" height="12" fill="#32009c"/><rect x="324" y="456" width="12" height="12" fill="#37009c"/><rect x="336" y="456" width="12" height="12" fill="#3c009c"/><rect x="348" y="456" width="12" height="12" fill="#41009c"/><rect x="360" y="456" width="12" height="12" fill="#46009c"/><rect x="372" y="456" width="12" height="12" fill="#4b009c"/><rect x="384" y="456" width="12" height="12" fill="#50009c"/><rect x="396" y="456" width="12" height="12" fill="#55009c"/><rect x="408" y="456" width="12" height="12" fill="#5a009c"/><rect x="420" y="456" width="12" height="12" fill="#60009c"/><rect x="432" y="456" width="12" height="12" fill="#65009c"/><rect x="444" y="456" width="12" height="12" fill="#6a009c"/><rect x="456" y="456" width="12" height="12" fill="#6f009c"/><rect x="468" y="456" width="12" height="12" fill="#75009c"/><rect x="480" y="456" width="12" height="12" fill="#7a009c"/><rect x="492" y="456" width="12" height="12" fill="#80009c"/><rect x="504" y="456" width="12" height="12" fill="#85009c"/><rect x="516" y="456" width="12" height="12" fill="#8a009c"/><rect x="528" y="456" width="12" height="12" fill="#90009c"/><rect x="540" y="456" width="12" height="12" fill="#95009c"/><rect x="552" y="456" width="12" height="12" fill="#9b009c"/><rect x="564" y="456" width="12" height="12" fill="#9c0097"/><rect x="576" y="456" width="12" height="12" fill="#9c0092"/><rect x="588" y="456" width="12" height="12" fill="#9c008d"/><rect x="600" y="456" width="12" height="12" fill="#9c0088"/><rect x="612" y="456" width="12" height="12" fill="#9c0084"/><rect x="0" y="468" width="12" height="12" fill="#00069c"/><rect x="12" y="468" width="12" height="12" fill="#00049c"/><rect x="24" y="468" width="12" height="12" fill="#00039c"/><rect x="36" y="468" width="12" height="12" fill="#00029c"/><rect x="48" y="468" width="12" height="12" fill="#00009c"/><rect x="60" y="468" width="12" height="12" fill="#00009c"/><rect x="72" y="468" width="12" height="12" fill="#00009c"/><rect x="84" y="468" width="12" height="12" fill="#00009c"/><rect x="96" y="468" width="12" height="12" fill="#00009c"/><rect x="108" y="468" width="12" height="12" fill="#00009c"/><rect x="120" y="468" width="12" height="12" fill="#00009c"/><rect x="132" y="468" width="12" height="12" fill="#00009c"/><rect x="144" y="468" width="12" height="12" fill="#00009c"/><rect x="156" y="468" width="12" height="12" fill="#00009c"/><rect x="168" y="468" width="12" height="12" fill="#00009c"/><rect x="180" y="468" width="12" height="12" fill="#00009c"/><rect x="192" y="468" width="12" height="12" fill="#00009c"/><rect x="204" y="468" width="12" height="12" fill="#04009c"/><rect x="216" y="468" width="12" height="12" fill="#09009c"/><rect x="228" y="468" width="12" height="12" fill="#0d009c"/><rect x="240" y="468" width="12" height="12" fill="#12009c"/><rect x="252" y="468" width="12" height="12" fill="#17009c"/><rect x="264" y="468" width="12" height="12" fill="#1c009c"/><rect x="276" y="468" width="12" height="12" fill="#20009c"/><rect x="288" y="468" width="12" height="12" fill="#25009c"/><rect x="300" y="468" width="12" height="12" fill="#2a009c"/><rect x="312" y="468" width="12" height="12" fill="#2f009c"/><rect x="324" y="468" width="12" height="12" fill="#34009c"/><rect x="336" y="468" width="12" height="12" fill="#39009c"/><rect x="348" y="468" width="12" height="12" fill="#3e009c"/><rect x="360" y="468" width="12" height="12" fill="#43009c"/><rect x="372" y="468" width="12" height="12" fill="#48009c"/><rect x="384" y="468" width="12" height="12" fill="#4d009c"/><rect x="396" y="468" width="12" height="12" fill="#52009c"/><rect x="408" y="468" width="12" height="12" fill="#57009c"/><rect x="420" y="468" width="12" height="12" fill="#5c009c"/><rect x="432" y="468" width="12" height="12" fill="#61009c"/><rect x="444" y="468" width="12" height="12" fill="#66009c"/><rect x="456" y="468" width="12" height="12" fill="#6b009c"/><rect x="468" y="468" width="12" height="12" fill="#70009c"/><rect x="480" y="468" width="12" height="12" fill="#76009c"/><rect x="492" y="468" width="12" height="12" fill="#7b009c"/><rect x="504" y="468" width="12" height="12" fill="#80009c"/><rect x="516" y="468" width="12" height="12" fill="#86009c"/><rect x="528" y="468" width="12" height="12" fill="#8b009c"/><rect x="540" y="468" width="12" height="12" fill="#90009c"/><rect x="552" y="468" width="12" height="12" fill="#96009c"/><rect x="564" y="468" width="12" height="12" fill="#9b009c"/><rect x="576" y="468" width="12" height="12" fill="#9c0097"/><rect x="588" y="468" width="12" height="12" fill="#9c0092"/><rect x="600" y="468" width="12" height="12" fill="#9c008d"/><rect x="612" y="468" width="12" height="12" fill="#9c0088"/></g><g><path d="M175.8 341.1L188.3 328.4L173.5 327.0Z" fill="#0401ff" stroke="#0401ff" stroke-width="0.6"/><path d="M188.3 328.4L186.0 314.3L173.5 327.0Z" fill="#0903ff" stroke="#0903ff" stroke-width="0.6"/><path d="M173.5 327.0L186.0 314.3L171.2 312.9Z" fill="#0506ff" stroke="#0506ff" stroke-width="0.6"/><path d="M186.0 314.3L183.7 300.1L171.2 312.9Z" fill="#0a08ff" stroke="#0a08ff" stroke-width="0.6"/><path d="M171.2 312.9L183.7 300.1L169.0 298.8Z" fill="#050bff" stroke="#050bff" stroke-width="0.6"/><path d="M183.7 300.1L181.4 286.0L169.0 298.8Z" fill="#0a0dff" stroke="#0a0dff" stroke-width="0.6"/><path d="M169.0 298.8L181.4 286.0L166.7 284.6Z" fill="#0511ff" stroke="#0511ff" stroke-width="0.6"/><path d="M181.4 286.0L179.2 271.9L166.7 284.6Z" fill="#0b13ff" stroke="#0b13ff" stroke-width="0.6"/><path d="M166.7 284.6L179.2 271.9L164.4 270.5Z" fill="#0617ff" stroke="#0617ff" stroke-width="0.6"/><path d="M179.2 271.9L176.9 257.8L164.4 270.5Z" fill="#0b1aff" stroke="#0b1aff" stroke-width="0.6"/><path d="M164.4 270.5L176.9 257.8L162.1 256.4Z" fill="#061eff" stroke="#061eff" stroke-width="0.6"/><path d="M176.9 257.8L174.6 243.6L162.1 256.4Z" fill="#0c21ff" stroke="#0c21ff" stroke-width="0.6"/><path d="M162.1 256.4L174.6 243.6L159.8 242.3Z" fill="#0626ff" stroke="#0626ff" stroke-width="0.6"/><path d="M174.6 243.6L172.3 229.5L159.8 242.3Z" fill="#0d2aff" stroke="#0d2aff" stroke-width="0.6"/><path d="M159.8 242.3L172.3 229.5L157.5 228.1Z" fill="#072fff" stroke="#072fff" stroke-width="0.6"/><path d="M172.3 229.5L170.0 215.4L157.5 228.1Z" fill="#0e33ff" stroke="#0e33ff" stroke-width="0.6"/><path d="M157.5 228.1L170.0 215.4L155.2 214.0Z" fill="#0739ff" stroke="#0739ff" stroke-width="0.6"/><path d="M170.0 215.4L167.7 201.3L155.2 214.0Z" fill="#0f3fff" stroke="#0f3fff" stroke-width="0.6"/><path d="M155.2 214.0L167.7 201.3L152.9 199.9Z" fill="#0845ff" stroke="#0845ff" stroke-width="0.6"/><path d="M167.7 201.3L165.4 187.2L152.9 199.9Z" fill="#104cff" stroke="#104cff" stroke-width="0.6"/><path d="M152.9 199.9L165.4 187.2L150.7 185.8Z" fill="#0854ff" stroke="#0854ff" stroke-width="0.6"/><path d="M165.4 187.2L163.1 173.0L150.7 185.8Z" fill="#125cff" stroke="#125cff" stroke-width="0.6"/><path d="M150.7 185.8L163.1 173.0L148.4 171.6Z" fill="#0965ff" stroke="#0965ff" stroke-width="0.6"/><path d="M163.1 173.0L160.9 158.9L148.4 171.6Z" fill="#146fff" stroke="#146fff" stroke-width="0.6"/><path d="M148.4 171.6L160.9 158.9L146.1 157.5Z" fill="#0a79ff" stroke="#0a79ff" stroke-width="0.6"/><path d="M160.9 158.9L158.6 144.8L146.1 157.5Z" fill="#1686ff" stroke="#1686ff" stroke-width="0.6"/><path d="M146.1 157.5L158.6 144.8L143.8 143.4Z" fill="#0b93ff" stroke="#0b93ff" stroke-width="0.6"/><path d="M158.6 144.8L156.3 130.7L143.8 143.4Z" fill="#19a3ff" stroke="#19a3ff" stroke-width="0.6"/><path d="M143.8 143.4L156.3 130.7L141.5 129.3Z" fill="#0db3ff" stroke="#0db3ff" stroke-width="0.6"/><path d="M156.3 130.7L154.0 116.5L141.5 129.3Z" fill="#1dcaff" stroke="#1dcaff" stroke-width="0.6"/><path d="M141.5 129.3L154.0 116.5L139.2 115.1Z" fill="#0fdeff" stroke="#0fdeff" stroke-width="0.6"/><path d="M154.0 116.5L151.7 102.4L139.2 115.1Z" fill="#22feff" stroke="#22feff" stroke-width="0.6"/><path d="M139.2 115.1L151.7 102.4L136.9 101.0Z" fill="#10ffe8" stroke="#10ffe8" stroke-width="0.6"/><path d="M151.7 102.4L149.4 88.3L136.9 101.0Z" fill="#20ffc7" stroke="#20ffc7" stroke-width="0.6"/><path d="M136.9 101.0L149.4 88.3L134.6 86.9Z" fill="#0fffb1" stroke="#0fffb1" stroke-width="0.6"/><path d="M149.4 88.3L147.1 74.2L134.6 86.9Z" fill="#1eff93" stroke="#1eff93" stroke-width="0.6"/><path d="M134.6 86.9L147.1 74.2L132.4 72.8Z" fill="#0eff81" stroke="#0eff81" stroke-width="0.6"/><path d="M147.1 74.2L144.8 60.0L132.4 72.8Z" fill="#1cff65" stroke="#1cff65" stroke-width="0.6"/><path d="M132.4 72.8L144.8 60.0L130.1 58.6Z" fill="#0eff56" stroke="#0eff56" stroke-width="0.6"/><path d="M144.8 60.0L142.6 45.9L130.1 58.6Z" fill="#1bff3c" stroke="#1bff3c" stroke-width="0.6"/><path d="M130.1 58.6L142.6 45.9L127.8 44.5Z" fill="#0dff2f" stroke="#0dff2f" stroke-width="0.6"/><path d="M142.6 45.9L140.3 31.8L127.8 44.5Z" fill="#1aff17" stroke="#1aff17" stroke-width="0.6"/><path d="M127.8 44.5L140.3 31.8L125.5 30.4Z" fill="#0cff0b" stroke="#0cff0b" stroke-width="0.6"/><path d="M188.3 328.4L200.8 315.7L186.0 314.3Z" fill="#1302ff" stroke="#1302ff" stroke-width="0.6"/><path d="M200.8 315.7L198.5 301.5L186.0 314.3Z" fill="#1803ff" stroke="#1803ff" stroke-width="0.6"/><path d="M186.0 314.3L198.5 301.5L183.7 300.1Z" fill="#1406ff" stroke="#1406ff" stroke-width="0.6"/><path d="M198.5 301.5L196.2 287.4L183.7 300.1Z" fill="#1a08ff" stroke="#1a08ff" stroke-width="0.6"/><path d="M183.7 300.1L196.2 287.4L181.4 286.0Z" fill="#150cff" stroke="#150cff" stroke-width="0.6"/><path d="M196.2 287.4L193.9 273.3L181.4 286.0Z" fill="#1b0eff" stroke="#1b0eff" stroke-width="0.6"/><path d="M181.4 286.0L193.9 273.3L179.2 271.9Z" fill="#1612ff" stroke="#1612ff" stroke-width="0.6"/><path d="M193.9 273.3L191.6 259.2L179.2 271.9Z" fill="#1d14ff" stroke="#1d14ff" stroke-width="0.6"/><path d="M179.2 271.9L191.6 259.2L176.9 257.8Z" fill="#1718ff" stroke="#1718ff" stroke-width="0.6"/><path d="M191.6 259.2L189.3 245.0L176.9 257.8Z" fill="#1e1bff" stroke="#1e1bff" stroke-width="0.6"/><path d="M176.9 257.8L189.3 245.0L174.6 243.6Z" fill="#1920ff" stroke="#1920ff" stroke-width="0.6"/><path d="M189.3 245.0L187.1 230.9L174.6 243.6Z" fill="#2123ff" stroke="#2123ff" stroke-width="0.6"/><path d="M174.6 243.6L187.1 230.9L172.3 229.5Z" fill="#1b29ff" stroke="#1b29ff" stroke-width="0.6"/><path d="M187.1 230.9L184.8 216.8L172.3 229.5Z" fill="#232dff" stroke="#232dff" stroke-width="0.6"/><path d="M172.3 229.5L184.8 216.8L170.0 215.4Z" fill="#1d32ff" stroke="#1d32ff" stroke-width="0.6"/><path d="M184.8 216.8L182.5 202.7L170.0 215.4Z" fill="#2638ff" stroke="#2638ff" stroke-width="0.6"/><path d="M170.0 215.4L182.5 202.7L167.7 201.3Z" fill="#1f3eff" stroke="#1f3eff" stroke-width="0.6"/><path d="M182.5 202.7L180.2 188.5L167.7 201.3Z" fill="#2944ff" stroke="#2944ff" stroke-width="0.6"/><path d="M167.7 201.3L180.2 188.5L165.4 187.2Z" fill="#224cff" stroke="#224cff" stroke-width="0.6"/><path d="M180.2 188.5L177.9 174.4L165.4 187.2Z" fill="#2d53ff" stroke="#2d53ff" stroke-width="0.6"/><path d="M165.4 187.2L177.9 174.4L163.1 173.0Z" fill="#255cff" stroke="#255cff" stroke-width="0.6"/><path d="M177.9 174.4L175.6 160.3L163.1 173.0Z" fill="#3165ff" stroke="#3165ff" stroke-width="0.6"/><path d="M163.1 173.0L175.6 160.3L160.9 158.9Z" fill="#296fff" stroke="#296fff" stroke-width="0.6"/><path d="M175.6 160.3L173.3 146.2L160.9 158.9Z" fill="#377bff" stroke="#377bff" stroke-width="0.6"/><path d="M160.9 158.9L173.3 146.2L158.6 144.8Z" fill="#2e88ff" stroke="#2e88ff" stroke-width="0.6"/><path d="M173.3 146.2L171.0 132.0L158.6 144.8Z" fill="#3e98ff" stroke="#3e98ff" stroke-width="0.6"/><path d="M158.6 144.8L171.0 132.0L156.3 130.7Z" fill="#34a7ff" stroke="#34a7ff" stroke-width="0.6"/><path d="M171.0 132.0L168.8 117.9L156.3 130.7Z" fill="#48bcff" stroke="#48bcff" stroke-width="0.6"/><path d="M156.3 130.7L168.8 117.9L154.0 116.5Z" fill="#3cd0ff" stroke="#3cd0ff" stroke-width="0.6"/><path d="M168.8 117.9L166.5 103.8L154.0 116.5Z" fill="#54edff" stroke="#54edff" stroke-width="0.6"/><path d="M154.0 116.5L166.5 103.8L151.7 102.4Z" fill="#45fff7" stroke="#45fff7" stroke-width="0.6"/><path d="M166.5 103.8L164.2 89.7L151.7 102.4Z" fill="#55ffd3" stroke="#55ffd3" stroke-width="0.6"/><path d="M151.7 102.4L164.2 89.7L149.4 88.3Z" fill="#41ffbc" stroke="#41ffbc" stroke-width="0.6"/><path d="M164.2 89.7L161.9 75.5L149.4 88.3Z" fill="#50ff9c" stroke="#50ff9c" stroke-width="0.6"/><path d="M149.4 88.3L161.9 75.5L147.1 74.2Z" fill="#3dff88" stroke="#3dff88" stroke-width="0.6"/><path d="M161.9 75.5L159.6 61.4L147.1 74.2Z" fill="#4bff6b" stroke="#4bff6b" stroke-width="0.6"/><path d="M147.1 74.2L159.6 61.4L144.8 60.0Z" fill="#3aff5a" stroke="#3aff5a" stroke-width="0.6"/><path d="M159.6 61.4L157.3 47.3L144.8 60.0Z" fill="#47ff3f" stroke="#47ff3f" stroke-width="0.6"/><path d="M144.8 60.0L157.3 47.3L142.6 45.9Z" fill="#37ff31" stroke="#37ff31" stroke-width="0.6"/><path d="M157.3 47.3L155.0 33.2L142.6 45.9Z" fill="#44ff18" stroke="#44ff18" stroke-width="0.6"/><path d="M142.6 45.9L155.0 33.2L140.3 31.8Z" fill="#34ff0c" stroke="#34ff0c" stroke-width="0.6"/><path d="M200.8 315.7L213.3 302.9L198.5 301.5Z" fill="#2302ff" stroke="#2302ff" stroke-width="0.6"/><path d="M213.3 302.9L211.0 288.8L198.5 301.5Z" fill="#2903ff" stroke="#2903ff" stroke-width="0.6"/><path d="M198.5 301.5L211.0 288.8L196.2 287.4Z" fill="#2407ff" stroke="#2407ff" stroke-width="0.6"/><path d="M211.0 288.8L208.7 274.7L196.2 287.4Z" fill="#2b09ff" stroke="#2b09ff" stroke-width="0.6"/><path d="M196.2 287.4L208.7 274.7L193.9 273.3Z" fill="#270cff" stroke="#270cff" stroke-width="0.6"/><path d="M208.7 274.7L206.4 260.5L193.9 273.3Z" fill="#2e0fff" stroke="#2e0fff" stroke-width="0.6"/><path d="M193.9 273.3L206.4 260.5L191.6 259.2Z" fill="#2913ff" stroke="#2913ff" stroke-width="0.6"/><path d="M206.4 260.5L204.1 246.4L191.6 259.2Z" fill="#3115ff" stroke="#3115ff" stroke-width="0.6"/><path d="M191.6 259.2L204.1 246.4L189.3 245.0Z" fill="#2c1aff" stroke="#2c1aff" stroke-width="0.6"/><path d="M204.1 246.4L201.8 232.3L189.3 245.0Z" fill="#341dff" stroke="#341dff" stroke-width="0.6"/><path d="M189.3 245.0L201.8 232.3L187.1 230.9Z" fill="#2f22ff" stroke="#2f22ff" stroke-width="0.6"/><path d="M201.8 232.3L199.5 218.2L187.1 230.9Z" fill="#3826ff" stroke="#3826ff" stroke-width="0.6"/><path d="M187.1 230.9L199.5 218.2L184.8 216.8Z" fill="#322cff" stroke="#322cff" stroke-width="0.6"/><path d="M199.5 218.2L197.3 204.0L184.8 216.8Z" fill="#3c30ff" stroke="#3c30ff" stroke-width="0.6"/><path d="M184.8 216.8L197.3 204.0L182.5 202.7Z" fill="#3637ff" stroke="#3637ff" stroke-width="0.6"/><path d="M197.3 204.0L195.0 189.9L182.5 202.7Z" fill="#423cff" stroke="#423cff" stroke-width="0.6"/><path d="M182.5 202.7L195.0 189.9L180.2 188.5Z" fill="#3b43ff" stroke="#3b43ff" stroke-width="0.6"/><path d="M195.0 189.9L192.7 175.8L180.2 188.5Z" fill="#484bff" stroke="#484bff" stroke-width="0.6"/><path d="M180.2 188.5L192.7 175.8L177.9 174.4Z" fill="#4153ff" stroke="#4153ff" stroke-width="0.6"/><path d="M192.7 175.8L190.4 161.7L177.9 174.4Z" fill="#4f5cff" stroke="#4f5cff" stroke-width="0.6"/><path d="M177.9 174.4L190.4 161.7L175.6 160.3Z" fill="#4866ff" stroke="#4866ff" stroke-width="0.6"/><path d="M190.4 161.7L188.1 147.5L175.6 160.3Z" fill="#5871ff" stroke="#5871ff" stroke-width="0.6"/><path d="M175.6 160.3L188.1 147.5L173.3 146.2Z" fill="#507dff" stroke="#507dff" stroke-width="0.6"/><path d="M188.1 147.5L185.8 133.4L173.3 146.2Z" fill="#648cff" stroke="#648cff" stroke-width="0.6"/><path d="M173.3 146.2L185.8 133.4L171.0 132.0Z" fill="#5b9aff" stroke="#5b9aff" stroke-width="0.6"/><path d="M185.8 133.4L183.5 119.3L171.0 132.0Z" fill="#73aeff" stroke="#73aeff" stroke-width="0.6"/><path d="M171.0 132.0L183.5 119.3L168.8 117.9Z" fill="#6ac1ff" stroke="#6ac1ff" stroke-width="0.6"/><path d="M183.5 119.3L181.2 105.2L168.8 117.9Z" fill="#87ddff" stroke="#87ddff" stroke-width="0.6"/><path d="M168.8 117.9L181.2 105.2L166.5 103.8Z" fill="#7df6ff" stroke="#7df6ff" stroke-width="0.6"/><path d="M181.2 105.2L179.0 91.0L166.5 103.8Z" fill="#91ffe2" stroke="#91ffe2" stroke-width="0.6"/><path d="M166.5 103.8L179.0 91.0L164.2 89.7Z" fill="#79ffc8" stroke="#79ffc8" stroke-width="0.6"/><path d="M179.0 91.0L176.7 76.9L164.2 89.7Z" fill="#88ffa6" stroke="#88ffa6" stroke-width="0.6"/><path d="M164.2 89.7L176.7 76.9L161.9 75.5Z" fill="#72ff91" stroke="#72ff91" stroke-width="0.6"/><path d="M176.7 76.9L174.4 62.8L161.9 75.5Z" fill="#80ff71" stroke="#80ff71" stroke-width="0.6"/><path d="M161.9 75.5L174.4 62.8L159.6 61.4Z" fill="#6bff5f" stroke="#6bff5f" stroke-width="0.6"/><path d="M174.4 62.8L172.1 48.7L159.6 61.4Z" fill="#78ff43" stroke="#78ff43" stroke-width="0.6"/><path d="M159.6 61.4L172.1 48.7L157.3 47.3Z" fill="#65ff34" stroke="#65ff34" stroke-width="0.6"/><path d="M172.1 48.7L169.8 34.5L157.3 47.3Z" fill="#72ff19" stroke="#72ff19" stroke-width="0.6"/><path d="M157.3 47.3L169.8 34.5L155.0 33.2Z" fill="#60ff0c" stroke="#60ff0c" stroke-width="0.6"/><path d="M213.3 302.9L225.7 290.2L211.0 288.8Z" fill="#3402ff" stroke="#3402ff" stroke-width="0.6"/><path d="M225.7 290.2L223.5 276.0L211.0 288.8Z" fill="#3b03ff" stroke="#3b03ff" stroke-width="0.6"/><path d="M211.0 288.8L223.5 276.0L208.7 274.7Z" fill="#3707ff" stroke="#3707ff" stroke-width="0.6"/><path d="M223.5 276.0L221.2 261.9L208.7 274.7Z" fill="#3f09ff" stroke="#3f09ff" stroke-width="0.6"/><path d="M208.7 274.7L221.2 261.9L206.4 260.5Z" fill="#3a0dff" stroke="#3a0dff" stroke-width="0.6"/><path d="M221.2 261.9L218.9 247.8L206.4 260.5Z" fill="#4310ff" stroke="#4310ff" stroke-width="0.6"/><path d="M206.4 260.5L218.9 247.8L204.1 246.4Z" fill="#3e14ff" stroke="#3e14ff" stroke-width="0.6"/><path d="M218.9 247.8L216.6 233.7L204.1 246.4Z" fill="#4817ff" stroke="#4817ff" stroke-width="0.6"/><path d="M204.1 246.4L216.6 233.7L201.8 232.3Z" fill="#431cff" stroke="#431cff" stroke-width="0.6"/><path d="M216.6 233.7L214.3 219.5L201.8 232.3Z" fill="#4d1fff" stroke="#4d1fff" stroke-width="0.6"/><path d="M201.8 232.3L214.3 219.5L199.5 218.2Z" fill="#4825ff" stroke="#4825ff" stroke-width="0.6"/><path d="M214.3 219.5L212.0 205.4L199.5 218.2Z" fill="#5329ff" stroke="#5329ff" stroke-width="0.6"/><path d="M199.5 218.2L212.0 205.4L197.3 204.0Z" fill="#4d2fff" stroke="#4d2fff" stroke-width="0.6"/><path d="M212.0 205.4L209.7 191.3L197.3 204.0Z" fill="#5a34ff" stroke="#5a34ff" stroke-width="0.6"/><path d="M197.3 204.0L209.7 191.3L195.0 189.9Z" fill="#543bff" stroke="#543bff" stroke-width="0.6"/><path d="M209.7 191.3L207.4 177.2L195.0 189.9Z" fill="#6342ff" stroke="#6342ff" stroke-width="0.6"/><path d="M195.0 189.9L207.4 177.2L192.7 175.8Z" fill="#5c4aff" stroke="#5c4aff" stroke-width="0.6"/><path d="M207.4 177.2L205.2 163.1L192.7 175.8Z" fill="#6d52ff" stroke="#6d52ff" stroke-width="0.6"/><path d="M192.7 175.8L205.2 163.1L190.4 161.7Z" fill="#665cff" stroke="#665cff" stroke-width="0.6"/><path d="M205.2 163.1L202.9 148.9L190.4 161.7Z" fill="#7966ff" stroke="#7966ff" stroke-width="0.6"/><path d="M190.4 161.7L202.9 148.9L188.1 147.5Z" fill="#7372ff" stroke="#7372ff" stroke-width="0.6"/><path d="M202.9 148.9L200.6 134.8L188.1 147.5Z" fill="#8980ff" stroke="#8980ff" stroke-width="0.6"/><path d="M188.1 147.5L200.6 134.8L185.8 133.4Z" fill="#828eff" stroke="#828eff" stroke-width="0.6"/><path d="M200.6 134.8L198.3 120.7L185.8 133.4Z" fill="#9ea0ff" stroke="#9ea0ff" stroke-width="0.6"/><path d="M185.8 133.4L198.3 120.7L183.5 119.3Z" fill="#97b3ff" stroke="#97b3ff" stroke-width="0.6"/><path d="M198.3 120.7L196.0 106.6L183.5 119.3Z" fill="#b9cdff" stroke="#b9cdff" stroke-width="0.6"/><path d="M183.5 119.3L196.0 106.6L181.2 105.2Z" fill="#b3e5ff" stroke="#b3e5ff" stroke-width="0.6"/><path d="M196.0 106.6L193.7 92.4L181.2 105.2Z" fill="#d6fff2" stroke="#d6fff2" stroke-width="0.6"/><path d="M181.2 105.2L193.7 92.4L179.0 91.0Z" fill="#b9ffd6" stroke="#b9ffd6" stroke-width="0.6"/><path d="M193.7 92.4L191.4 78.3L179.0 91.0Z" fill="#c7ffb1" stroke="#c7ffb1" stroke-width="0.6"/><path d="M179.0 91.0L191.4 78.3L176.7 76.9Z" fill="#adff9a" stroke="#adff9a" stroke-width="0.6"/><path d="M191.4 78.3L189.2 64.2L176.7 76.9Z" fill="#bbff79" stroke="#bbff79" stroke-width="0.6"/><path d="M176.7 76.9L189.2 64.2L174.4 62.8Z" fill="#a3ff65" stroke="#a3ff65" stroke-width="0.6"/><path d="M189.2 64.2L186.9 50.1L174.4 62.8Z" fill="#afff47" stroke="#afff47" stroke-width="0.6"/><path d="M174.4 62.8L186.9 50.1L172.1 48.7Z" fill="#99ff37" stroke="#99ff37" stroke-width="0.6"/><path d="M186.9 50.1L184.6 35.9L172.1 48.7Z" fill="#a5ff1b" stroke="#a5ff1b" stroke-width="0.6"/><path d="M172.1 48.7L184.6 35.9L169.8 34.5Z" fill="#91ff0d" stroke="#91ff0d" stroke-width="0.6"/><path d="M225.7 290.2L238.2 277.4L223.5 276.0Z" fill="#4802ff" stroke="#4802ff" stroke-width="0.6"/><path d="M238.2 277.4L235.9 263.3L223.5 276.0Z" fill="#5004ff" stroke="#5004ff" stroke-width="0.6"/><path d="M223.5 276.0L235.9 263.3L221.2 261.9Z" fill="#4c07ff" stroke="#4c07ff" stroke-width="0.6"/><path d="M235.9 263.3L233.7 249.2L221.2 261.9Z" fill="#550aff" stroke="#550aff" stroke-width="0.6"/><path d="M221.2 261.9L233.7 249.2L218.9 247.8Z" fill="#510eff" stroke="#510eff" stroke-width="0.6"/><path d="M233.7 249.2L231.4 235.1L218.9 247.8Z" fill="#5b11ff" stroke="#5b11ff" stroke-width="0.6"/><path d="M218.9 247.8L231.4 235.1L216.6 233.7Z" fill="#5715ff" stroke="#5715ff" stroke-width="0.6"/><path d="M231.4 235.1L229.1 220.9L216.6 233.7Z" fill="#6219ff" stroke="#6219ff" stroke-width="0.6"/><path d="M216.6 233.7L229.1 220.9L214.3 219.5Z" fill="#5d1eff" stroke="#5d1eff" stroke-width="0.6"/><path d="M229.1 220.9L226.8 206.8L214.3 219.5Z" fill="#6a22ff" stroke="#6a22ff" stroke-width="0.6"/><path d="M214.3 219.5L226.8 206.8L212.0 205.4Z" fill="#6528ff" stroke="#6528ff" stroke-width="0.6"/><path d="M226.8 206.8L224.5 192.7L212.0 205.4Z" fill="#732dff" stroke="#732dff" stroke-width="0.6"/><path d="M212.0 205.4L224.5 192.7L209.7 191.3Z" fill="#6e33ff" stroke="#6e33ff" stroke-width="0.6"/><path d="M224.5 192.7L222.2 178.6L209.7 191.3Z" fill="#7d39ff" stroke="#7d39ff" stroke-width="0.6"/><path d="M209.7 191.3L222.2 178.6L207.4 177.2Z" fill="#7841ff" stroke="#7841ff" stroke-width="0.6"/><path d="M222.2 178.6L219.9 164.4L207.4 177.2Z" fill="#8a49ff" stroke="#8a49ff" stroke-width="0.6"/><path d="M207.4 177.2L219.9 164.4L205.2 163.1Z" fill="#8552ff" stroke="#8552ff" stroke-width="0.6"/><path d="M219.9 164.4L217.6 150.3L205.2 163.1Z" fill="#9a5cff" stroke="#9a5cff" stroke-width="0.6"/><path d="M205.2 163.1L217.6 150.3L202.9 148.9Z" fill="#9567ff" stroke="#9567ff" stroke-width="0.6"/><path d="M217.6 150.3L215.4 136.2L202.9 148.9Z" fill="#ae74ff" stroke="#ae74ff" stroke-width="0.6"/><path d="M202.9 148.9L215.4 136.2L200.6 134.8Z" fill="#a981ff" stroke="#a981ff" stroke-width="0.6"/><path d="M215.4 136.2L213.1 122.1L200.6 134.8Z" fill="#c993ff" stroke="#c993ff" stroke-width="0.6"/><path d="M200.6 134.8L213.1 122.1L198.3 120.7Z" fill="#c4a4ff" stroke="#c4a4ff" stroke-width="0.6"/><path d="M213.1 122.1L210.8 107.9L198.3 120.7Z" fill="#ecbdff" stroke="#ecbdff" stroke-width="0.6"/><path d="M198.3 120.7L210.8 107.9L196.0 106.6Z" fill="#e9d4ff" stroke="#e9d4ff" stroke-width="0.6"/><path d="M210.8 107.9L208.5 93.8L196.0 106.6Z" fill="#ffdde3" stroke="#ffdde3" stroke-width="0.6"/><path d="M196.0 106.6L208.5 93.8L193.7 92.4Z" fill="#fffbe3" stroke="#fffbe3" stroke-width="0.6"/><path d="M208.5 93.8L206.2 79.7L193.7 92.4Z" fill="#ffefb2" stroke="#ffefb2" stroke-width="0.6"/><path d="M193.7 92.4L206.2 79.7L191.4 78.3Z" fill="#f1ffa5" stroke="#f1ffa5" stroke-width="0.6"/><path d="M206.2 79.7L203.9 65.6L191.4 78.3Z" fill="#feff81" stroke="#feff81" stroke-width="0.6"/><path d="M191.4 78.3L203.9 65.6L189.2 64.2Z" fill="#e1ff6c" stroke="#e1ff6c" stroke-width="0.6"/><path d="M203.9 65.6L201.6 51.4L189.2 64.2Z" fill="#edff4b" stroke="#edff4b" stroke-width="0.6"/><path d="M189.2 64.2L201.6 51.4L186.9 50.1Z" fill="#d3ff3a" stroke="#d3ff3a" stroke-width="0.6"/><path d="M201.6 51.4L199.3 37.3L186.9 50.1Z" fill="#dfff1c" stroke="#dfff1c" stroke-width="0.6"/><path d="M186.9 50.1L199.3 37.3L184.6 35.9Z" fill="#c7ff0e" stroke="#c7ff0e" stroke-width="0.6"/><path d="M238.2 277.4L250.7 264.7L235.9 263.3Z" fill="#5e02ff" stroke="#5e02ff" stroke-width="0.6"/><path d="M250.7 264.7L248.4 250.6L235.9 263.3Z" fill="#6804ff" stroke="#6804ff" stroke-width="0.6"/><path d="M235.9 263.3L248.4 250.6L233.7 249.2Z" fill="#6408ff" stroke="#6408ff" stroke-width="0.6"/><path d="M248.4 250.6L246.1 236.4L233.7 249.2Z" fill="#6f0aff" stroke="#6f0aff" stroke-width="0.6"/><path d="M233.7 249.2L246.1 236.4L231.4 235.1Z" fill="#6b0fff" stroke="#6b0fff" stroke-width="0.6"/><path d="M246.1 236.4L243.8 222.3L231.4 235.1Z" fill="#7712ff" stroke="#7712ff" stroke-width="0.6"/><path d="M231.4 235.1L243.8 222.3L229.1 220.9Z" fill="#7317ff" stroke="#7317ff" stroke-width="0.6"/><path d="M243.8 222.3L241.6 208.2L229.1 220.9Z" fill="#801bff" stroke="#801bff" stroke-width="0.6"/><path d="M229.1 220.9L241.6 208.2L226.8 206.8Z" fill="#7c20ff" stroke="#7c20ff" stroke-width="0.6"/><path d="M241.6 208.2L239.3 194.1L226.8 206.8Z" fill="#8b25ff" stroke="#8b25ff" stroke-width="0.6"/><path d="M226.8 206.8L239.3 194.1L224.5 192.7Z" fill="#872bff" stroke="#872bff" stroke-width="0.6"/><path d="M239.3 194.1L237.0 179.9L224.5 192.7Z" fill="#9831ff" stroke="#9831ff" stroke-width="0.6"/><path d="M224.5 192.7L237.0 179.9L222.2 178.6Z" fill="#9438ff" stroke="#9438ff" stroke-width="0.6"/><path d="M237.0 179.9L234.7 165.8L222.2 178.6Z" fill="#a83fff" stroke="#a83fff" stroke-width="0.6"/><path d="M222.2 178.6L234.7 165.8L219.9 164.4Z" fill="#a448ff" stroke="#a448ff" stroke-width="0.6"/><path d="M234.7 165.8L232.4 151.7L219.9 164.4Z" fill="#bb51ff" stroke="#bb51ff" stroke-width="0.6"/><path d="M219.9 164.4L232.4 151.7L217.6 150.3Z" fill="#b75cff" stroke="#b75cff" stroke-width="0.6"/><path d="M232.4 151.7L230.1 137.6L217.6 150.3Z" fill="#d468ff" stroke="#d468ff" stroke-width="0.6"/><path d="M217.6 150.3L230.1 137.6L215.4 136.2Z" fill="#d075ff" stroke="#d075ff" stroke-width="0.6"/><path d="M230.1 137.6L227.8 123.4L215.4 136.2Z" fill="#f485ff" stroke="#f485ff" stroke-width="0.6"/><path d="M215.4 136.2L227.8 123.4L213.1 122.1Z" fill="#f196ff" stroke="#f196ff" stroke-width="0.6"/><path d="M227.8 123.4L225.6 109.3L213.1 122.1Z" fill="#ff9ae3" stroke="#ff9ae3" stroke-width="0.6"/><path d="M213.1 122.1L225.6 109.3L210.8 107.9Z" fill="#ffade3" stroke="#ffade3" stroke-width="0.6"/><path d="M225.6 109.3L223.3 95.2L210.8 107.9Z" fill="#ffa8bb" stroke="#ffa8bb" stroke-width="0.6"/><path d="M210.8 107.9L223.3 95.2L208.5 93.8Z" fill="#ffbdb8" stroke="#ffbdb8" stroke-width="0.6"/><path d="M223.3 95.2L221.0 81.1L208.5 93.8Z" fill="#ffb693" stroke="#ffb693" stroke-width="0.6"/><path d="M208.5 93.8L221.0 81.1L206.2 79.7Z" fill="#ffcc8e" stroke="#ffcc8e" stroke-width="0.6"/><path d="M221.0 81.1L218.7 66.9L206.2 79.7Z" fill="#ffc56b" stroke="#ffc56b" stroke-width="0.6"/><path d="M206.2 79.7L218.7 66.9L203.9 65.6Z" fill="#ffdb63" stroke="#ffdb63" stroke-width="0.6"/><path d="M218.7 66.9L216.4 52.8L203.9 65.6Z" fill="#ffd343" stroke="#ffd343" stroke-width="0.6"/><path d="M203.9 65.6L216.4 52.8L201.6 51.4Z" fill="#ffeb39" stroke="#ffeb39" stroke-width="0.6"/><path d="M216.4 52.8L214.1 38.7L201.6 51.4Z" fill="#ffe21b" stroke="#ffe21b" stroke-width="0.6"/><path d="M201.6 51.4L214.1 38.7L199.3 37.3Z" fill="#fffa0e" stroke="#fffa0e" stroke-width="0.6"/><path d="M250.7 264.7L263.2 251.9L248.4 250.6Z" fill="#7602ff" stroke="#7602ff" stroke-width="0.6"/><path d="M263.2 251.9L260.9 237.8L248.4 250.6Z" fill="#8204ff" stroke="#8204ff" stroke-width="0.6"/><path d="M248.4 250.6L260.9 237.8L246.1 236.4Z" fill="#7f09ff" stroke="#7f09ff" stroke-width="0.6"/><path d="M260.9 237.8L258.6 223.7L246.1 236.4Z" fill="#8c0bff" stroke="#8c0bff" stroke-width="0.6"/><path d="M246.1 236.4L258.6 223.7L243.8 222.3Z" fill="#8810ff" stroke="#8810ff" stroke-width="0.6"/><path d="M258.6 223.7L256.3 209.6L243.8 222.3Z" fill="#9713ff" stroke="#9713ff" stroke-width="0.6"/><path d="M243.8 222.3L256.3 209.6L241.6 208.2Z" fill="#9319ff" stroke="#9319ff" stroke-width="0.6"/><path d="M256.3 209.6L254.0 195.4L241.6 208.2Z" fill="#a41dff" stroke="#a41dff" stroke-width="0.6"/><path d="M241.6 208.2L254.0 195.4L239.3 194.1Z" fill="#a023ff" stroke="#a023ff" stroke-width="0.6"/><path d="M254.0 195.4L251.8 181.3L239.3 194.1Z" fill="#b328ff" stroke="#b328ff" stroke-width="0.6"/><path d="M239.3 194.1L251.8 181.3L237.0 179.9Z" fill="#b02fff" stroke="#b02fff" stroke-width="0.6"/><path d="M251.8 181.3L249.5 167.2L237.0 179.9Z" fill="#c636ff" stroke="#c636ff" stroke-width="0.6"/><path d="M237.0 179.9L249.5 167.2L234.7 165.8Z" fill="#c33eff" stroke="#c33eff" stroke-width="0.6"/><path d="M249.5 167.2L247.2 153.1L234.7 165.8Z" fill="#dc47ff" stroke="#dc47ff" stroke-width="0.6"/><path d="M234.7 165.8L247.2 153.1L232.4 151.7Z" fill="#da51ff" stroke="#da51ff" stroke-width="0.6"/><path d="M247.2 153.1L244.9 139.0L232.4 151.7Z" fill="#f95cff" stroke="#f95cff" stroke-width="0.6"/><path d="M232.4 151.7L244.9 139.0L230.1 137.6Z" fill="#f868ff" stroke="#f868ff" stroke-width="0.6"/><path d="M244.9 139.0L242.6 124.8L230.1 137.6Z" fill="#ff6ae3" stroke="#ff6ae3" stroke-width="0.6"/><path d="M230.1 137.6L242.6 124.8L227.8 123.4Z" fill="#ff78e3" stroke="#ff78e3" stroke-width="0.6"/><path d="M242.6 124.8L240.3 110.7L227.8 123.4Z" fill="#ff76c1" stroke="#ff76c1" stroke-width="0.6"/><path d="M227.8 123.4L240.3 110.7L225.6 109.3Z" fill="#ff85bf" stroke="#ff85bf" stroke-width="0.6"/><path d="M240.3 110.7L238.0 96.6L225.6 109.3Z" fill="#ff839f" stroke="#ff839f" stroke-width="0.6"/><path d="M225.6 109.3L238.0 96.6L223.3 95.2Z" fill="#ff929b" stroke="#ff929b" stroke-width="0.6"/><path d="M238.0 96.6L235.7 82.5L223.3 95.2Z" fill="#ff8f7d" stroke="#ff8f7d" stroke-width="0.6"/><path d="M223.3 95.2L235.7 82.5L221.0 81.1Z" fill="#ff9f77" stroke="#ff9f77" stroke-width="0.6"/><path d="M235.7 82.5L233.5 68.3L221.0 81.1Z" fill="#ff9b5b" stroke="#ff9b5b" stroke-width="0.6"/><path d="M221.0 81.1L233.5 68.3L218.7 66.9Z" fill="#ffac54" stroke="#ffac54" stroke-width="0.6"/><path d="M233.5 68.3L231.2 54.2L218.7 66.9Z" fill="#ffa739" stroke="#ffa739" stroke-width="0.6"/><path d="M218.7 66.9L231.2 54.2L216.4 52.8Z" fill="#ffb930" stroke="#ffb930" stroke-width="0.6"/><path d="M231.2 54.2L228.9 40.1L216.4 52.8Z" fill="#ffb317" stroke="#ffb317" stroke-width="0.6"/><path d="M216.4 52.8L228.9 40.1L214.1 38.7Z" fill="#ffc60c" stroke="#ffc60c" stroke-width="0.6"/><path d="M263.2 251.9L275.7 239.2L260.9 237.8Z" fill="#9302ff" stroke="#9302ff" stroke-width="0.6"/><path d="M275.7 239.2L273.4 225.1L260.9 237.8Z" fill="#a104ff" stroke="#a104ff" stroke-width="0.6"/><path d="M260.9 237.8L273.4 225.1L258.6 223.7Z" fill="#9e09ff" stroke="#9e09ff" stroke-width="0.6"/><path d="M273.4 225.1L271.1 211.0L258.6 223.7Z" fill="#ad0cff" stroke="#ad0cff" stroke-width="0.6"/><path d="M258.6 223.7L271.1 211.0L256.3 209.6Z" fill="#aa11ff" stroke="#aa11ff" stroke-width="0.6"/><path d="M271.1 211.0L268.8 196.8L256.3 209.6Z" fill="#bc15ff" stroke="#bc15ff" stroke-width="0.6"/><path d="M256.3 209.6L268.8 196.8L254.0 195.4Z" fill="#b91bff" stroke="#b91bff" stroke-width="0.6"/><path d="M268.8 196.8L266.5 182.7L254.0 195.4Z" fill="#ce20ff" stroke="#ce20ff" stroke-width="0.6"/><path d="M254.0 195.4L266.5 182.7L251.8 181.3Z" fill="#cb26ff" stroke="#cb26ff" stroke-width="0.6"/><path d="M266.5 182.7L264.2 168.6L251.8 181.3Z" fill="#e32cff" stroke="#e32cff" stroke-width="0.6"/><path d="M251.8 181.3L264.2 168.6L249.5 167.2Z" fill="#e134ff" stroke="#e134ff" stroke-width="0.6"/><path d="M264.2 168.6L262.0 154.5L249.5 167.2Z" fill="#fe3cff" stroke="#fe3cff" stroke-width="0.6"/><path d="M249.5 167.2L262.0 154.5L247.2 153.1Z" fill="#fc46ff" stroke="#fc46ff" stroke-width="0.6"/><path d="M262.0 154.5L259.7 140.3L247.2 153.1Z" fill="#ff47e3" stroke="#ff47e3" stroke-width="0.6"/><path d="M247.2 153.1L259.7 140.3L244.9 139.0Z" fill="#ff52e3" stroke="#ff52e3" stroke-width="0.6"/><path d="M259.7 140.3L257.4 126.2L244.9 139.0Z" fill="#ff52c5" stroke="#ff52c5" stroke-width="0.6"/><path d="M244.9 139.0L257.4 126.2L242.6 124.8Z" fill="#ff5dc4" stroke="#ff5dc4" stroke-width="0.6"/><path d="M257.4 126.2L255.1 112.1L242.6 124.8Z" fill="#ff5ca8" stroke="#ff5ca8" stroke-width="0.6"/><path d="M242.6 124.8L255.1 112.1L240.3 110.7Z" fill="#ff68a5" stroke="#ff68a5" stroke-width="0.6"/><path d="M255.1 112.1L252.8 98.0L240.3 110.7Z" fill="#ff678a" stroke="#ff678a" stroke-width="0.6"/><path d="M240.3 110.7L252.8 98.0L238.0 96.6Z" fill="#ff7386" stroke="#ff7386" stroke-width="0.6"/><path d="M252.8 98.0L250.5 83.8L238.0 96.6Z" fill="#ff726c" stroke="#ff726c" stroke-width="0.6"/><path d="M238.0 96.6L250.5 83.8L235.7 82.5Z" fill="#ff7e67" stroke="#ff7e67" stroke-width="0.6"/><path d="M250.5 83.8L248.2 69.7L235.7 82.5Z" fill="#ff7c4f" stroke="#ff7c4f" stroke-width="0.6"/><path d="M235.7 82.5L248.2 69.7L233.5 68.3Z" fill="#ff8948" stroke="#ff8948" stroke-width="0.6"/><path d="M248.2 69.7L245.9 55.6L233.5 68.3Z" fill="#ff8731" stroke="#ff8731" stroke-width="0.6"/><path d="M233.5 68.3L245.9 55.6L231.2 54.2Z" fill="#ff9429" stroke="#ff9429" stroke-width="0.6"/><path d="M245.9 55.6L243.7 41.5L231.2 54.2Z" fill="#ff9114" stroke="#ff9114" stroke-width="0.6"/><path d="M231.2 54.2L243.7 41.5L228.9 40.1Z" fill="#ff9f0a" stroke="#ff9f0a" stroke-width="0.6"/><path d="M275.7 239.2L288.2 226.5L273.4 225.1Z" fill="#b302ff" stroke="#b302ff" stroke-width="0.6"/><path d="M288.2 226.5L285.9 212.3L273.4 225.1Z" fill="#c405ff" stroke="#c405ff" stroke-width="0.6"/><path d="M273.4 225.1L285.9 212.3L271.1 211.0Z" fill="#c20aff" stroke="#c20aff" stroke-width="0.6"/><path d="M285.9 212.3L283.6 198.2L271.1 211.0Z" fill="#d50dff" stroke="#d50dff" stroke-width="0.6"/><path d="M271.1 211.0L283.6 198.2L268.8 196.8Z" fill="#d313ff" stroke="#d313ff" stroke-width="0.6"/><path d="M283.6 198.2L281.3 184.1L268.8 196.8Z" fill="#e917ff" stroke="#e917ff" stroke-width="0.6"/><path d="M268.8 196.8L281.3 184.1L266.5 182.7Z" fill="#e71eff" stroke="#e71eff" stroke-width="0.6"/><path d="M281.3 184.1L279.0 170.0L266.5 182.7Z" fill="#ff23fd" stroke="#ff23fd" stroke-width="0.6"/><path d="M266.5 182.7L279.0 170.0L264.2 168.6Z" fill="#ff2afe" stroke="#ff2afe" stroke-width="0.6"/><path d="M279.0 170.0L276.7 155.8L264.2 168.6Z" fill="#ff2ce3" stroke="#ff2ce3" stroke-width="0.6"/><path d="M264.2 168.6L276.7 155.8L262.0 154.5Z" fill="#ff34e3" stroke="#ff34e3" stroke-width="0.6"/><path d="M276.7 155.8L274.4 141.7L262.0 154.5Z" fill="#ff35c9" stroke="#ff35c9" stroke-width="0.6"/><path d="M262.0 154.5L274.4 141.7L259.7 140.3Z" fill="#ff3ec8" stroke="#ff3ec8" stroke-width="0.6"/><path d="M274.4 141.7L272.1 127.6L259.7 140.3Z" fill="#ff3faf" stroke="#ff3faf" stroke-width="0.6"/><path d="M259.7 140.3L272.1 127.6L257.4 126.2Z" fill="#ff48ac" stroke="#ff48ac" stroke-width="0.6"/><path d="M272.1 127.6L269.9 113.5L257.4 126.2Z" fill="#ff4894" stroke="#ff4894" stroke-width="0.6"/><path d="M257.4 126.2L269.9 113.5L255.1 112.1Z" fill="#ff5291" stroke="#ff5291" stroke-width="0.6"/><path d="M269.9 113.5L267.6 99.3L255.1 112.1Z" fill="#ff527a" stroke="#ff527a" stroke-width="0.6"/><path d="M255.1 112.1L267.6 99.3L252.8 98.0Z" fill="#ff5b76" stroke="#ff5b76" stroke-width="0.6"/><path d="M267.6 99.3L265.3 85.2L252.8 98.0Z" fill="#ff5b60" stroke="#ff5b60" stroke-width="0.6"/><path d="M252.8 98.0L265.3 85.2L250.5 83.8Z" fill="#ff655b" stroke="#ff655b" stroke-width="0.6"/><path d="M265.3 85.2L263.0 71.1L250.5 83.8Z" fill="#ff6446" stroke="#ff6446" stroke-width="0.6"/><path d="M250.5 83.8L263.0 71.1L248.2 69.7Z" fill="#ff6f40" stroke="#ff6f40" stroke-width="0.6"/><path d="M263.0 71.1L260.7 57.0L248.2 69.7Z" fill="#ff6e2c" stroke="#ff6e2c" stroke-width="0.6"/><path d="M248.2 69.7L260.7 57.0L245.9 55.6Z" fill="#ff7924" stroke="#ff7924" stroke-width="0.6"/><path d="M260.7 57.0L258.4 42.8L245.9 55.6Z" fill="#ff7711" stroke="#ff7711" stroke-width="0.6"/><path d="M245.9 55.6L258.4 42.8L243.7 41.5Z" fill="#ff8309" stroke="#ff8309" stroke-width="0.6"/><path d="M288.2 226.5L300.6 213.7L285.9 212.3Z" fill="#d903ff" stroke="#d903ff" stroke-width="0.6"/><path d="M300.6 213.7L298.4 199.6L285.9 212.3Z" fill="#ed05ff" stroke="#ed05ff" stroke-width="0.6"/><path d="M285.9 212.3L298.4 199.6L283.6 198.2Z" fill="#ec0bff" stroke="#ec0bff" stroke-width="0.6"/><path d="M298.4 199.6L296.1 185.5L283.6 198.2Z" fill="#ff0efa" stroke="#ff0efa" stroke-width="0.6"/><path d="M283.6 198.2L296.1 185.5L281.3 184.1Z" fill="#ff14fb" stroke="#ff14fb" stroke-width="0.6"/><path d="M296.1 185.5L293.8 171.3L281.3 184.1Z" fill="#ff17e3" stroke="#ff17e3" stroke-width="0.6"/><path d="M281.3 184.1L293.8 171.3L279.0 170.0Z" fill="#ff1de3" stroke="#ff1de3" stroke-width="0.6"/><path d="M293.8 171.3L291.5 157.2L279.0 170.0Z" fill="#ff1fcb" stroke="#ff1fcb" stroke-width="0.6"/><path d="M279.0 170.0L291.5 157.2L276.7 155.8Z" fill="#ff26cb" stroke="#ff26cb" stroke-width="0.6"/><path d="M291.5 157.2L289.2 143.1L276.7 155.8Z" fill="#ff27b4" stroke="#ff27b4" stroke-width="0.6"/><path d="M276.7 155.8L289.2 143.1L274.4 141.7Z" fill="#ff2fb2" stroke="#ff2fb2" stroke-width="0.6"/><path d="M289.2 143.1L286.9 129.0L274.4 141.7Z" fill="#ff309c" stroke="#ff309c" stroke-width="0.6"/><path d="M274.4 141.7L286.9 129.0L272.1 127.6Z" fill="#ff379a" stroke="#ff379a" stroke-width="0.6"/><path d="M286.9 129.0L284.6 114.9L272.1 127.6Z" fill="#ff3885" stroke="#ff3885" stroke-width="0.6"/><path d="M272.1 127.6L284.6 114.9L269.9 113.5Z" fill="#ff4082" stroke="#ff4082" stroke-width="0.6"/><path d="M284.6 114.9L282.3 100.7L269.9 113.5Z" fill="#ff416e" stroke="#ff416e" stroke-width="0.6"/><path d="M269.9 113.5L282.3 100.7L267.6 99.3Z" fill="#ff4969" stroke="#ff4969" stroke-width="0.6"/><path d="M282.3 100.7L280.1 86.6L267.6 99.3Z" fill="#ff4956" stroke="#ff4956" stroke-width="0.6"/><path d="M267.6 99.3L280.1 86.6L265.3 85.2Z" fill="#ff5251" stroke="#ff5251" stroke-width="0.6"/><path d="M280.1 86.6L277.8 72.5L265.3 85.2Z" fill="#ff523f" stroke="#ff523f" stroke-width="0.6"/><path d="M265.3 85.2L277.8 72.5L263.0 71.1Z" fill="#ff5a39" stroke="#ff5a39" stroke-width="0.6"/><path d="M277.8 72.5L275.5 58.4L263.0 71.1Z" fill="#ff5a27" stroke="#ff5a27" stroke-width="0.6"/><path d="M263.0 71.1L275.5 58.4L260.7 57.0Z" fill="#ff6320" stroke="#ff6320" stroke-width="0.6"/><path d="M275.5 58.4L273.2 44.2L260.7 57.0Z" fill="#ff6210" stroke="#ff6210" stroke-width="0.6"/><path d="M260.7 57.0L273.2 44.2L258.4 42.8Z" fill="#ff6c08" stroke="#ff6c08" stroke-width="0.6"/><path d="M300.6 213.7L313.1 201.0L298.4 199.6Z" fill="#ff03f9" stroke="#ff03f9" stroke-width="0.6"/><path d="M313.1 201.0L310.8 186.9L298.4 199.6Z" fill="#ff05e3" stroke="#ff05e3" stroke-width="0.6"/><path d="M298.4 199.6L310.8 186.9L296.1 185.5Z" fill="#ff0be3" stroke="#ff0be3" stroke-width="0.6"/><path d="M310.8 186.9L308.5 172.7L296.1 185.5Z" fill="#ff0dce" stroke="#ff0dce" stroke-width="0.6"/><path d="M296.1 185.5L308.5 172.7L293.8 171.3Z" fill="#ff12cd" stroke="#ff12cd" stroke-width="0.6"/><path d="M308.5 172.7L306.3 158.6L293.8 171.3Z" fill="#ff14b8" stroke="#ff14b8" stroke-width="0.6"/><path d="M293.8 171.3L306.3 158.6L291.5 157.2Z" fill="#ff1ab7" stroke="#ff1ab7" stroke-width="0.6"/><path d="M306.3 158.6L304.0 144.5L291.5 157.2Z" fill="#ff1ca3" stroke="#ff1ca3" stroke-width="0.6"/><path d="M291.5 157.2L304.0 144.5L289.2 143.1Z" fill="#ff22a1" stroke="#ff22a1" stroke-width="0.6"/><path d="M304.0 144.5L301.7 130.4L289.2 143.1Z" fill="#ff248e" stroke="#ff248e" stroke-width="0.6"/><path d="M289.2 143.1L301.7 130.4L286.9 129.0Z" fill="#ff2a8b" stroke="#ff2a8b" stroke-width="0.6"/><path d="M301.7 130.4L299.4 116.2L286.9 129.0Z" fill="#ff2b79" stroke="#ff2b79" stroke-width="0.6"/><path d="M286.9 129.0L299.4 116.2L284.6 114.9Z" fill="#ff3275" stroke="#ff3275" stroke-width="0.6"/><path d="M299.4 116.2L297.1 102.1L284.6 114.9Z" fill="#ff3363" stroke="#ff3363" stroke-width="0.6"/><path d="M284.6 114.9L297.1 102.1L282.3 100.7Z" fill="#ff3a5f" stroke="#ff3a5f" stroke-width="0.6"/><path d="M297.1 102.1L294.8 88.0L282.3 100.7Z" fill="#ff3b4e" stroke="#ff3b4e" stroke-width="0.6"/><path d="M282.3 100.7L294.8 88.0L280.1 86.6Z" fill="#ff4249" stroke="#ff4249" stroke-width="0.6"/><path d="M294.8 88.0L292.5 73.9L280.1 86.6Z" fill="#ff4239" stroke="#ff4239" stroke-width="0.6"/><path d="M280.1 86.6L292.5 73.9L277.8 72.5Z" fill="#ff4a33" stroke="#ff4a33" stroke-width="0.6"/><path d="M292.5 73.9L290.2 59.7L277.8 72.5Z" fill="#ff4a23" stroke="#ff4a23" stroke-width="0.6"/><path d="M277.8 72.5L290.2 59.7L275.5 58.4Z" fill="#ff521d" stroke="#ff521d" stroke-width="0.6"/><path d="M290.2 59.7L288.0 45.6L275.5 58.4Z" fill="#ff520e" stroke="#ff520e" stroke-width="0.6"/><path d="M275.5 58.4L288.0 45.6L273.2 44.2Z" fill="#ff5907" stroke="#ff5907" stroke-width="0.6"/><path d="M313.1 201.0L325.6 188.2L310.8 186.9Z" fill="#ff02cf" stroke="#ff02cf" stroke-width="0.6"/><path d="M325.6 188.2L323.3 174.1L310.8 186.9Z" fill="#ff05bc" stroke="#ff05bc" stroke-width="0.6"/><path d="M310.8 186.9L323.3 174.1L308.5 172.7Z" fill="#ff0abb" stroke="#ff0abb" stroke-width="0.6"/><path d="M323.3 174.1L321.0 160.0L308.5 172.7Z" fill="#ff0ca9" stroke="#ff0ca9" stroke-width="0.6"/><path d="M308.5 172.7L321.0 160.0L306.3 158.6Z" fill="#ff11a7" stroke="#ff11a7" stroke-width="0.6"/><path d="M321.0 160.0L318.7 145.9L306.3 158.6Z" fill="#ff1395" stroke="#ff1395" stroke-width="0.6"/><path d="M306.3 158.6L318.7 145.9L304.0 144.5Z" fill="#ff1893" stroke="#ff1893" stroke-width="0.6"/><path d="M318.7 145.9L316.5 131.7L304.0 144.5Z" fill="#ff1a82" stroke="#ff1a82" stroke-width="0.6"/><path d="M304.0 144.5L316.5 131.7L301.7 130.4Z" fill="#ff1f7f" stroke="#ff1f7f" stroke-width="0.6"/><path d="M316.5 131.7L314.2 117.6L301.7 130.4Z" fill="#ff216e" stroke="#ff216e" stroke-width="0.6"/><path d="M301.7 130.4L314.2 117.6L299.4 116.2Z" fill="#ff266b" stroke="#ff266b" stroke-width="0.6"/><path d="M314.2 117.6L311.9 103.5L299.4 116.2Z" fill="#ff285b" stroke="#ff285b" stroke-width="0.6"/><path d="M299.4 116.2L311.9 103.5L297.1 102.1Z" fill="#ff2e57" stroke="#ff2e57" stroke-width="0.6"/><path d="M311.9 103.5L309.6 89.4L297.1 102.1Z" fill="#ff2f47" stroke="#ff2f47" stroke-width="0.6"/><path d="M297.1 102.1L309.6 89.4L294.8 88.0Z" fill="#ff3543" stroke="#ff3543" stroke-width="0.6"/><path d="M309.6 89.4L307.3 75.2L294.8 88.0Z" fill="#ff3634" stroke="#ff3634" stroke-width="0.6"/><path d="M294.8 88.0L307.3 75.2L292.5 73.9Z" fill="#ff3c2f" stroke="#ff3c2f" stroke-width="0.6"/><path d="M307.3 75.2L305.0 61.1L292.5 73.9Z" fill="#ff3d20" stroke="#ff3d20" stroke-width="0.6"/><path d="M292.5 73.9L305.0 61.1L290.2 59.7Z" fill="#ff431b" stroke="#ff431b" stroke-width="0.6"/><path d="M305.0 61.1L302.7 47.0L290.2 59.7Z" fill="#ff440d" stroke="#ff440d" stroke-width="0.6"/><path d="M290.2 59.7L302.7 47.0L288.0 45.6Z" fill="#ff4a07" stroke="#ff4a07" stroke-width="0.6"/><path d="M325.6 188.2L338.1 175.5L323.3 174.1Z" fill="#ff02ac" stroke="#ff02ac" stroke-width="0.6"/><path d="M338.1 175.5L335.8 161.4L323.3 174.1Z" fill="#ff049b" stroke="#ff049b" stroke-width="0.6"/><path d="M323.3 174.1L335.8 161.4L321.0 160.0Z" fill="#ff0999" stroke="#ff0999" stroke-width="0.6"/><path d="M335.8 161.4L333.5 147.2L321.0 160.0Z" fill="#ff0b89" stroke="#ff0b89" stroke-width="0.6"/><path d="M321.0 160.0L333.5 147.2L318.7 145.9Z" fill="#ff0f87" stroke="#ff0f87" stroke-width="0.6"/><path d="M333.5 147.2L331.2 133.1L318.7 145.9Z" fill="#ff1177" stroke="#ff1177" stroke-width="0.6"/><path d="M318.7 145.9L331.2 133.1L316.5 131.7Z" fill="#ff1674" stroke="#ff1674" stroke-width="0.6"/><path d="M331.2 133.1L328.9 119.0L316.5 131.7Z" fill="#ff1865" stroke="#ff1865" stroke-width="0.6"/><path d="M316.5 131.7L328.9 119.0L314.2 117.6Z" fill="#ff1d62" stroke="#ff1d62" stroke-width="0.6"/><path d="M328.9 119.0L326.6 104.9L314.2 117.6Z" fill="#ff1e54" stroke="#ff1e54" stroke-width="0.6"/><path d="M314.2 117.6L326.6 104.9L311.9 103.5Z" fill="#ff2350" stroke="#ff2350" stroke-width="0.6"/><path d="M326.6 104.9L324.4 90.8L311.9 103.5Z" fill="#ff2542" stroke="#ff2542" stroke-width="0.6"/><path d="M311.9 103.5L324.4 90.8L309.6 89.4Z" fill="#ff2a3d" stroke="#ff2a3d" stroke-width="0.6"/><path d="M324.4 90.8L322.1 76.6L309.6 89.4Z" fill="#ff2b30" stroke="#ff2b30" stroke-width="0.6"/><path d="M309.6 89.4L322.1 76.6L307.3 75.2Z" fill="#ff312b" stroke="#ff312b" stroke-width="0.6"/><path d="M322.1 76.6L319.8 62.5L307.3 75.2Z" fill="#ff311e" stroke="#ff311e" stroke-width="0.6"/><path d="M307.3 75.2L319.8 62.5L305.0 61.1Z" fill="#ff3719" stroke="#ff3719" stroke-width="0.6"/><path d="M319.8 62.5L317.5 48.4L305.0 61.1Z" fill="#ff380c" stroke="#ff380c" stroke-width="0.6"/><path d="M305.0 61.1L317.5 48.4L302.7 47.0Z" fill="#ff3e06" stroke="#ff3e06" stroke-width="0.6"/><path d="M338.1 175.5L350.6 162.8L335.8 161.4Z" fill="#ff028e" stroke="#ff028e" stroke-width="0.6"/><path d="M350.6 162.8L348.3 148.6L335.8 161.4Z" fill="#ff047f" stroke="#ff047f" stroke-width="0.6"/><path d="M335.8 161.4L348.3 148.6L333.5 147.2Z" fill="#ff087d" stroke="#ff087d" stroke-width="0.6"/><path d="M348.3 148.6L346.0 134.5L333.5 147.2Z" fill="#ff0a6f" stroke="#ff0a6f" stroke-width="0.6"/><path d="M333.5 147.2L346.0 134.5L331.2 133.1Z" fill="#ff0e6c" stroke="#ff0e6c" stroke-width="0.6"/><path d="M346.0 134.5L343.7 120.4L331.2 133.1Z" fill="#ff105e" stroke="#ff105e" stroke-width="0.6"/><path d="M331.2 133.1L343.7 120.4L328.9 119.0Z" fill="#ff145b" stroke="#ff145b" stroke-width="0.6"/><path d="M343.7 120.4L341.4 106.3L328.9 119.0Z" fill="#ff164d" stroke="#ff164d" stroke-width="0.6"/><path d="M328.9 119.0L341.4 106.3L326.6 104.9Z" fill="#ff1b4a" stroke="#ff1b4a" stroke-width="0.6"/><path d="M341.4 106.3L339.1 92.1L326.6 104.9Z" fill="#ff1c3d" stroke="#ff1c3d" stroke-width="0.6"/><path d="M326.6 104.9L339.1 92.1L324.4 90.8Z" fill="#ff2139" stroke="#ff2139" stroke-width="0.6"/><path d="M339.1 92.1L336.8 78.0L324.4 90.8Z" fill="#ff222c" stroke="#ff222c" stroke-width="0.6"/><path d="M324.4 90.8L336.8 78.0L322.1 76.6Z" fill="#ff2728" stroke="#ff2728" stroke-width="0.6"/><path d="M336.8 78.0L334.6 63.9L322.1 76.6Z" fill="#ff281c" stroke="#ff281c" stroke-width="0.6"/><path d="M322.1 76.6L334.6 63.9L319.8 62.5Z" fill="#ff2d17" stroke="#ff2d17" stroke-width="0.6"/><path d="M334.6 63.9L332.3 49.8L319.8 62.5Z" fill="#ff2e0b" stroke="#ff2e0b" stroke-width="0.6"/><path d="M319.8 62.5L332.3 49.8L317.5 48.4Z" fill="#ff3306" stroke="#ff3306" stroke-width="0.6"/><path d="M350.6 162.8L363.0 150.0L348.3 148.6Z" fill="#ff0274" stroke="#ff0274" stroke-width="0.6"/><path d="M363.0 150.0L360.8 135.9L348.3 148.6Z" fill="#ff0467" stroke="#ff0467" stroke-width="0.6"/><path d="M348.3 148.6L360.8 135.9L346.0 134.5Z" fill="#ff0864" stroke="#ff0864" stroke-width="0.6"/><path d="M360.8 135.9L358.5 121.8L346.0 134.5Z" fill="#ff0958" stroke="#ff0958" stroke-width="0.6"/><path d="M346.0 134.5L358.5 121.8L343.7 120.4Z" fill="#ff0d54" stroke="#ff0d54" stroke-width="0.6"/><path d="M358.5 121.8L356.2 107.6L343.7 120.4Z" fill="#ff0f48" stroke="#ff0f48" stroke-width="0.6"/><path d="M343.7 120.4L356.2 107.6L341.4 106.3Z" fill="#ff1345" stroke="#ff1345" stroke-width="0.6"/><path d="M356.2 107.6L353.9 93.5L341.4 106.3Z" fill="#ff1439" stroke="#ff1439" stroke-width="0.6"/><path d="M341.4 106.3L353.9 93.5L339.1 92.1Z" fill="#ff1935" stroke="#ff1935" stroke-width="0.6"/><path d="M353.9 93.5L351.6 79.4L339.1 92.1Z" fill="#ff1a29" stroke="#ff1a29" stroke-width="0.6"/><path d="M339.1 92.1L351.6 79.4L336.8 78.0Z" fill="#ff1e25" stroke="#ff1e25" stroke-width="0.6"/><path d="M351.6 79.4L349.3 65.3L336.8 78.0Z" fill="#ff201a" stroke="#ff201a" stroke-width="0.6"/><path d="M336.8 78.0L349.3 65.3L334.6 63.9Z" fill="#ff2415" stroke="#ff2415" stroke-width="0.6"/><path d="M349.3 65.3L347.0 51.1L334.6 63.9Z" fill="#ff250a" stroke="#ff250a" stroke-width="0.6"/><path d="M334.6 63.9L347.0 51.1L332.3 49.8Z" fill="#ff2a05" stroke="#ff2a05" stroke-width="0.6"/><path d="M363.0 150.0L375.5 137.3L360.8 135.9Z" fill="#ff025e" stroke="#ff025e" stroke-width="0.6"/><path d="M375.5 137.3L373.2 123.1L360.8 135.9Z" fill="#ff0352" stroke="#ff0352" stroke-width="0.6"/><path d="M360.8 135.9L373.2 123.1L358.5 121.8Z" fill="#ff074f" stroke="#ff074f" stroke-width="0.6"/><path d="M373.2 123.1L371.0 109.0L358.5 121.8Z" fill="#ff0944" stroke="#ff0944" stroke-width="0.6"/><path d="M358.5 121.8L371.0 109.0L356.2 107.6Z" fill="#ff0c40" stroke="#ff0c40" stroke-width="0.6"/><path d="M371.0 109.0L368.7 94.9L356.2 107.6Z" fill="#ff0e35" stroke="#ff0e35" stroke-width="0.6"/><path d="M356.2 107.6L368.7 94.9L353.9 93.5Z" fill="#ff1231" stroke="#ff1231" stroke-width="0.6"/><path d="M368.7 94.9L366.4 80.8L353.9 93.5Z" fill="#ff1327" stroke="#ff1327" stroke-width="0.6"/><path d="M353.9 93.5L366.4 80.8L351.6 79.4Z" fill="#ff1723" stroke="#ff1723" stroke-width="0.6"/><path d="M366.4 80.8L364.1 66.6L351.6 79.4Z" fill="#ff1818" stroke="#ff1818" stroke-width="0.6"/><path d="M351.6 79.4L364.1 66.6L349.3 65.3Z" fill="#ff1c14" stroke="#ff1c14" stroke-width="0.6"/><path d="M364.1 66.6L361.8 52.5L349.3 65.3Z" fill="#ff1e0a" stroke="#ff1e0a" stroke-width="0.6"/><path d="M349.3 65.3L361.8 52.5L347.0 51.1Z" fill="#ff2205" stroke="#ff2205" stroke-width="0.6"/><path d="M375.5 137.3L388.0 124.5L373.2 123.1Z" fill="#ff024a" stroke="#ff024a" stroke-width="0.6"/><path d="M388.0 124.5L385.7 110.4L373.2 123.1Z" fill="#ff0340" stroke="#ff0340" stroke-width="0.6"/><path d="M373.2 123.1L385.7 110.4L371.0 109.0Z" fill="#ff073c" stroke="#ff073c" stroke-width="0.6"/><path d="M385.7 110.4L383.4 96.3L371.0 109.0Z" fill="#ff0832" stroke="#ff0832" stroke-width="0.6"/><path d="M371.0 109.0L383.4 96.3L368.7 94.9Z" fill="#ff0c2e" stroke="#ff0c2e" stroke-width="0.6"/><path d="M383.4 96.3L381.2 82.2L368.7 94.9Z" fill="#ff0d24" stroke="#ff0d24" stroke-width="0.6"/><path d="M368.7 94.9L381.2 82.2L366.4 80.8Z" fill="#ff1120" stroke="#ff1120" stroke-width="0.6"/><path d="M381.2 82.2L378.9 68.0L366.4 80.8Z" fill="#ff1217" stroke="#ff1217" stroke-width="0.6"/><path d="M366.4 80.8L378.9 68.0L364.1 66.6Z" fill="#ff1613" stroke="#ff1613" stroke-width="0.6"/><path d="M378.9 68.0L376.6 53.9L364.1 66.6Z" fill="#ff1709" stroke="#ff1709" stroke-width="0.6"/><path d="M364.1 66.6L376.6 53.9L361.8 52.5Z" fill="#ff1b05" stroke="#ff1b05" stroke-width="0.6"/><path d="M388.0 124.5L400.5 111.8L385.7 110.4Z" fill="#ff0239" stroke="#ff0239" stroke-width="0.6"/><path d="M400.5 111.8L398.2 97.7L385.7 110.4Z" fill="#ff032f" stroke="#ff032f" stroke-width="0.6"/><path d="M385.7 110.4L398.2 97.7L383.4 96.3Z" fill="#ff062c" stroke="#ff062c" stroke-width="0.6"/><path d="M398.2 97.7L395.9 83.5L383.4 96.3Z" fill="#ff0822" stroke="#ff0822" stroke-width="0.6"/><path d="M383.4 96.3L395.9 83.5L381.2 82.2Z" fill="#ff0b1f" stroke="#ff0b1f" stroke-width="0.6"/><path d="M395.9 83.5L393.6 69.4L381.2 82.2Z" fill="#ff0c15" stroke="#ff0c15" stroke-width="0.6"/><path d="M381.2 82.2L393.6 69.4L378.9 68.0Z" fill="#ff1011" stroke="#ff1011" stroke-width="0.6"/><path d="M393.6 69.4L391.3 55.3L378.9 68.0Z" fill="#ff1109" stroke="#ff1109" stroke-width="0.6"/><path d="M378.9 68.0L391.3 55.3L376.6 53.9Z" fill="#ff1404" stroke="#ff1404" stroke-width="0.6"/><path d="M400.5 111.8L413.0 99.0L398.2 97.7Z" fill="#ff0229" stroke="#ff0229" stroke-width="0.6"/><path d="M413.0 99.0L410.7 84.9L398.2 97.7Z" fill="#ff0320" stroke="#ff0320" stroke-width="0.6"/><path d="M398.2 97.7L410.7 84.9L395.9 83.5Z" fill="#ff061d" stroke="#ff061d" stroke-width="0.6"/><path d="M410.7 84.9L408.4 70.8L395.9 83.5Z" fill="#ff0714" stroke="#ff0714" stroke-width="0.6"/><path d="M395.9 83.5L408.4 70.8L393.6 69.4Z" fill="#ff0a11" stroke="#ff0a11" stroke-width="0.6"/><path d="M408.4 70.8L406.1 56.7L393.6 69.4Z" fill="#ff0c08" stroke="#ff0c08" stroke-width="0.6"/><path d="M393.6 69.4L406.1 56.7L391.3 55.3Z" fill="#ff0f04" stroke="#ff0f04" stroke-width="0.6"/><path d="M413.0 99.0L425.5 86.3L410.7 84.9Z" fill="#ff011b" stroke="#ff011b" stroke-width="0.6"/><path d="M425.5 86.3L423.2 72.2L410.7 84.9Z" fill="#ff0313" stroke="#ff0313" stroke-width="0.6"/><path d="M410.7 84.9L423.2 72.2L408.4 70.8Z" fill="#ff0610" stroke="#ff0610" stroke-width="0.6"/><path d="M423.2 72.2L420.9 58.1L408.4 70.8Z" fill="#ff0708" stroke="#ff0708" stroke-width="0.6"/><path d="M408.4 70.8L420.9 58.1L406.1 56.7Z" fill="#ff0a04" stroke="#ff0a04" stroke-width="0.6"/><path d="M425.5 86.3L437.9 73.6L423.2 72.2Z" fill="#ff010f" stroke="#ff010f" stroke-width="0.6"/><path d="M437.9 73.6L435.7 59.4L423.2 72.2Z" fill="#ff0307" stroke="#ff0307" stroke-width="0.6"/><path d="M423.2 72.2L435.7 59.4L420.9 58.1Z" fill="#ff0504" stroke="#ff0504" stroke-width="0.6"/><path d="M437.9 73.6L450.4 60.8L435.7 59.4Z" fill="#ff0104" stroke="#ff0104" stroke-width="0.6"/></g></svg>
<canvas id="cie" class="r" style="left:0;top:0" width="601" height="463"></canvas>
</div>
<div class="r" style="left:949.00px;top:57.00px;width:601.00px;height:463.00px;box-shadow:inset 0 0 0 1px #a0a0a0;"></div>
<svg class="r" style="left:949.0px;top:57.0px" width="601.0" height="463.0"><rect x="118.20" y="22.70" width="12.6" height="12.6" fill="none" stroke="rgba(255,255,255,0.9)" stroke-width="1.9"/><rect x="140.80" y="45.90" width="12.6" height="12.6" fill="none" stroke="rgba(255,255,255,0.9)" stroke-width="1.9"/><rect x="178.30" y="37.70" width="12.6" height="12.6" fill="none" stroke="rgba(255,255,255,0.9)" stroke-width="1.9"/><rect x="175.70" y="57.50" width="12.6" height="12.6" fill="none" stroke="rgba(255,255,255,0.9)" stroke-width="1.9"/><rect x="197.40" y="29.30" width="12.6" height="12.6" fill="none" stroke="rgba(255,255,255,0.9)" stroke-width="1.9"/><rect x="222.60" y="35.80" width="12.6" height="12.6" fill="none" stroke="rgba(255,255,255,0.9)" stroke-width="1.9"/><rect x="252.70" y="40.00" width="12.6" height="12.6" fill="none" stroke="rgba(255,255,255,0.9)" stroke-width="1.9"/><rect x="290.20" y="44.10" width="12.6" height="12.6" fill="none" stroke="rgba(255,255,255,0.9)" stroke-width="1.9"/><rect x="290.20" y="47.10" width="12.6" height="12.6" fill="none" stroke="rgba(255,255,255,0.9)" stroke-width="1.9"/><rect x="147.80" y="87.60" width="12.6" height="12.6" fill="none" stroke="rgba(255,255,255,0.9)" stroke-width="1.9"/><rect x="132.70" y="105.90" width="12.6" height="12.6" fill="none" stroke="rgba(255,255,255,0.9)" stroke-width="1.9"/><rect x="280.60" y="126.80" width="12.6" height="12.6" fill="none" stroke="rgba(255,255,255,0.9)" stroke-width="1.9"/><rect x="137.90" y="134.60" width="12.6" height="12.6" fill="none" stroke="rgba(255,255,255,0.9)" stroke-width="1.9"/><rect x="169.50" y="131.70" width="12.6" height="12.6" fill="none" stroke="rgba(255,255,255,0.9)" stroke-width="1.9"/><rect x="188.70" y="136.90" width="12.6" height="12.6" fill="none" stroke="rgba(255,255,255,0.9)" stroke-width="1.9"/><rect x="221.60" y="153.80" width="12.6" height="12.6" fill="none" stroke="rgba(255,255,255,0.9)" stroke-width="1.9"/><rect x="171.60" y="181.90" width="12.6" height="12.6" fill="none" stroke="rgba(255,255,255,0.9)" stroke-width="1.9"/><rect x="298.70" y="200.50" width="12.6" height="12.6" fill="none" stroke="rgba(255,255,255,0.9)" stroke-width="1.9"/><rect x="171.60" y="228.60" width="12.6" height="12.6" fill="none" stroke="rgba(255,255,255,0.9)" stroke-width="1.9"/><rect x="169.80" y="333.80" width="12.6" height="12.6" fill="none" stroke="rgba(255,255,255,0.9)" stroke-width="1.9"/><rect x="443.70" y="52.80" width="12.6" height="12.6" fill="none" stroke="rgba(255,255,255,0.9)" stroke-width="1.9"/><rect x="368.30" y="71.60" width="12.6" height="12.6" fill="none" stroke="rgba(255,255,255,0.9)" stroke-width="1.9"/><rect x="310.50" y="83.60" width="12.6" height="12.6" fill="none" stroke="rgba(255,255,255,0.9)" stroke-width="1.9"/><rect x="275.80" y="56.60" width="12.6" height="12.6" fill="none" stroke="rgba(255,255,255,0.9)" stroke-width="1.9"/><rect x="264.30" y="50.80" width="12.6" height="12.6" fill="none" stroke="rgba(255,255,255,0.9)" stroke-width="1.9"/><rect x="269.10" y="57.20" width="12.6" height="12.6" fill="none" stroke="rgba(255,255,255,0.9)" stroke-width="1.9"/><rect x="267.20" y="61.70" width="12.6" height="12.6" fill="none" stroke="rgba(255,255,255,0.9)" stroke-width="1.9"/><rect x="256.40" y="61.70" width="12.6" height="12.6" fill="none" stroke="rgba(255,255,255,0.9)" stroke-width="1.9"/><rect x="253.20" y="64.20" width="12.6" height="12.6" fill="none" stroke="rgba(255,255,255,0.9)" stroke-width="1.9"/><rect x="244.20" y="57.20" width="12.6" height="12.6" fill="none" stroke="rgba(255,255,255,0.9)" stroke-width="1.9"/><rect x="241.70" y="67.40" width="12.6" height="12.6" fill="none" stroke="rgba(255,255,255,0.9)" stroke-width="1.9"/><rect x="257.70" y="67.40" width="12.6" height="12.6" fill="none" stroke="rgba(255,255,255,0.9)" stroke-width="1.9"/><rect x="268.50" y="64.90" width="12.6" height="12.6" fill="none" stroke="rgba(255,255,255,0.9)" stroke-width="1.9"/><rect x="225.10" y="64.90" width="12.6" height="12.6" fill="none" stroke="rgba(255,255,255,0.9)" stroke-width="1.9"/><rect x="236.60" y="72.50" width="12.6" height="12.6" fill="none" stroke="rgba(255,255,255,0.9)" stroke-width="1.9"/><rect x="226.40" y="79.50" width="12.6" height="12.6" fill="none" stroke="rgba(255,255,255,0.9)" stroke-width="1.9"/><rect x="190.70" y="94.90" width="12" height="12" fill="rgba(255,255,255,0.5)" stroke="#000" stroke-width="2.2"/><circle cx="142.40" cy="33.40" r="3.8" fill="#30e030" stroke="#151515" stroke-width="1.25"/><circle cx="160.20" cy="57.90" r="3.8" fill="#4f6e45" stroke="#151515" stroke-width="1.25"/><circle cx="190.30" cy="49.60" r="3.8" fill="#a0b058" stroke="#151515" stroke-width="1.25"/><circle cx="185.40" cy="70.40" r="3.8" fill="#4e5e40" stroke="#151515" stroke-width="1.25"/><circle cx="207.40" cy="40.30" r="3.8" fill="#f4e020" stroke="#151515" stroke-width="1.25"/><circle cx="227.50" cy="43.40" r="3.8" fill="#e0c040" stroke="#151515" stroke-width="1.25"/><circle cx="248.30" cy="49.50" r="3.8" fill="#e0a848" stroke="#151515" stroke-width="1.25"/><circle cx="277.30" cy="51.40" r="3.8" fill="#8a5a3a" stroke="#151515" stroke-width="1.25"/><circle cx="278.60" cy="52.30" r="3.8" fill="#9a6040" stroke="#151515" stroke-width="1.25"/><circle cx="261.40" cy="57.80" r="3.8" fill="#7a5030" stroke="#151515" stroke-width="1.25"/><circle cx="266.50" cy="61.30" r="3.8" fill="#6a4028" stroke="#151515" stroke-width="1.25"/><circle cx="252.50" cy="61.30" r="3.8" fill="#8a5a38" stroke="#151515" stroke-width="1.25"/><circle cx="238.40" cy="69.20" r="3.8" fill="#d09060" stroke="#151515" stroke-width="1.25"/><circle cx="253.10" cy="69.60" r="3.8" fill="#c88060" stroke="#151515" stroke-width="1.25"/><circle cx="248.30" cy="70.20" r="3.8" fill="#d09068" stroke="#151515" stroke-width="1.25"/><circle cx="230.80" cy="82.00" r="3.8" fill="#7a5040" stroke="#151515" stroke-width="1.25"/><circle cx="234.60" cy="79.50" r="3.8" fill="#c89070" stroke="#151515" stroke-width="1.25"/><circle cx="236.50" cy="75.60" r="3.8" fill="#d09070" stroke="#151515" stroke-width="1.25"/><circle cx="243.50" cy="77.50" r="3.8" fill="#d08a68" stroke="#151515" stroke-width="1.25"/><circle cx="253.40" cy="75.60" r="3.8" fill="#e8a080" stroke="#151515" stroke-width="1.25"/><circle cx="224.10" cy="79.10" r="3.8" fill="#f0c0a0" stroke="#151515" stroke-width="1.25"/><circle cx="220.90" cy="87.40" r="3.8" fill="#f0c8b0" stroke="#151515" stroke-width="1.25"/><circle cx="384.20" cy="59.60" r="3.8" fill="#ff1010" stroke="#151515" stroke-width="1.25"/><circle cx="328.50" cy="79.50" r="3.8" fill="#b04848" stroke="#151515" stroke-width="1.25"/><circle cx="278.90" cy="92.50" r="3.8" fill="#c06878" stroke="#151515" stroke-width="1.25"/><circle cx="248.40" cy="130.50" r="3.8" fill="#b05898" stroke="#151515" stroke-width="1.25"/><circle cx="160.20" cy="101.30" r="3.8" fill="#78b8a8" stroke="#151515" stroke-width="1.25"/><circle cx="192.40" cy="106.50" r="3.8" fill="#a8a8a8" stroke="#151515" stroke-width="1.25"/><circle cx="146.30" cy="117.80" r="3.8" fill="#30f0f0" stroke="#151515" stroke-width="1.25"/><circle cx="190.30" cy="133.10" r="3.8" fill="#000000" stroke="#151515" stroke-width="1.25"/><circle cx="147.10" cy="142.20" r="3.8" fill="#1890a8" stroke="#151515" stroke-width="1.25"/><circle cx="170.30" cy="138.00" r="3.8" fill="#6a80a8" stroke="#151515" stroke-width="1.25"/><circle cx="184.20" cy="140.10" r="3.8" fill="#8a88b0" stroke="#151515" stroke-width="1.25"/><circle cx="204.20" cy="156.30" r="3.8" fill="#5a4070" stroke="#151515" stroke-width="1.25"/><circle cx="166.40" cy="176.20" r="3.8" fill="#5a70a0" stroke="#151515" stroke-width="1.25"/><circle cx="247.60" cy="186.40" r="3.8" fill="#ff30ff" stroke="#151515" stroke-width="1.25"/><circle cx="161.30" cy="211.40" r="3.8" fill="#404880" stroke="#151515" stroke-width="1.25"/><circle cx="153.60" cy="273.70" r="3.8" fill="#1818f0" stroke="#151515" stroke-width="1.25"/></svg>
<div class="r" style="left:944.50px;top:518.80px;width:4.50px;height:1.30px;background:#c0c0c0;"></div>
<div class="t" style="left:935.57px;top:514.17px;font-size:12.79px;line-height:12.79px;color:#cfcfcf;transform:scaleX(1.1000);transform-origin:0 0;">0</div>
<div class="r" style="left:944.50px;top:480.40px;width:4.50px;height:1.30px;background:#c0c0c0;"></div>
<div class="t" style="left:916.02px;top:475.77px;font-size:12.79px;line-height:12.79px;color:#cfcfcf;transform:scaleX(1.1000);transform-origin:0 0;">0,05</div>
<div class="r" style="left:944.50px;top:442.00px;width:4.50px;height:1.30px;background:#c0c0c0;"></div>
<div class="t" style="left:923.84px;top:437.37px;font-size:12.79px;line-height:12.79px;color:#cfcfcf;transform:scaleX(1.1000);transform-origin:0 0;">0,1</div>
<div class="r" style="left:944.50px;top:403.60px;width:4.50px;height:1.30px;background:#c0c0c0;"></div>
<div class="t" style="left:916.02px;top:398.97px;font-size:12.79px;line-height:12.79px;color:#cfcfcf;transform:scaleX(1.1000);transform-origin:0 0;">0,15</div>
<div class="r" style="left:944.50px;top:365.20px;width:4.50px;height:1.30px;background:#c0c0c0;"></div>
<div class="t" style="left:923.84px;top:360.57px;font-size:12.79px;line-height:12.79px;color:#cfcfcf;transform:scaleX(1.1000);transform-origin:0 0;">0,2</div>
<div class="r" style="left:944.50px;top:326.80px;width:4.50px;height:1.30px;background:#c0c0c0;"></div>
<div class="t" style="left:916.02px;top:322.17px;font-size:12.79px;line-height:12.79px;color:#cfcfcf;transform:scaleX(1.1000);transform-origin:0 0;">0,25</div>
<div class="r" style="left:944.50px;top:288.40px;width:4.50px;height:1.30px;background:#c0c0c0;"></div>
<div class="t" style="left:923.84px;top:283.77px;font-size:12.79px;line-height:12.79px;color:#cfcfcf;transform:scaleX(1.1000);transform-origin:0 0;">0,3</div>
<div class="r" style="left:944.50px;top:250.00px;width:4.50px;height:1.30px;background:#c0c0c0;"></div>
<div class="t" style="left:916.02px;top:245.37px;font-size:12.79px;line-height:12.79px;color:#cfcfcf;transform:scaleX(1.1000);transform-origin:0 0;">0,35</div>
<div class="r" style="left:944.50px;top:211.60px;width:4.50px;height:1.30px;background:#c0c0c0;"></div>
<div class="t" style="left:923.84px;top:206.97px;font-size:12.79px;line-height:12.79px;color:#cfcfcf;transform:scaleX(1.1000);transform-origin:0 0;">0,4</div>
<div class="r" style="left:944.50px;top:173.20px;width:4.50px;height:1.30px;background:#c0c0c0;"></div>
<div class="t" style="left:916.02px;top:168.57px;font-size:12.79px;line-height:12.79px;color:#cfcfcf;transform:scaleX(1.1000);transform-origin:0 0;">0,45</div>
<div class="r" style="left:944.50px;top:134.80px;width:4.50px;height:1.30px;background:#c0c0c0;"></div>
<div class="t" style="left:923.84px;top:130.17px;font-size:12.79px;line-height:12.79px;color:#cfcfcf;transform:scaleX(1.1000);transform-origin:0 0;">0,5</div>
<div class="r" style="left:944.50px;top:96.40px;width:4.50px;height:1.30px;background:#c0c0c0;"></div>
<div class="t" style="left:916.02px;top:91.77px;font-size:12.79px;line-height:12.79px;color:#cfcfcf;transform:scaleX(1.1000);transform-origin:0 0;">0,55</div>
<div class="r" style="left:949.20px;top:520.00px;width:1.30px;height:5.20px;background:#c0c0c0;"></div>
<div class="t" style="left:945.89px;top:529.67px;font-size:12.79px;line-height:12.79px;color:#cfcfcf;transform:scaleX(1.1000);transform-origin:0 0;">0</div>
<div class="r" style="left:999.08px;top:520.00px;width:1.30px;height:5.20px;background:#c0c0c0;"></div>
<div class="t" style="left:985.99px;top:529.67px;font-size:12.79px;line-height:12.79px;color:#cfcfcf;transform:scaleX(1.1000);transform-origin:0 0;">0,05</div>
<div class="r" style="left:1048.96px;top:520.00px;width:1.30px;height:5.20px;background:#c0c0c0;"></div>
<div class="t" style="left:1039.78px;top:529.67px;font-size:12.79px;line-height:12.79px;color:#cfcfcf;transform:scaleX(1.1000);transform-origin:0 0;">0,1</div>
<div class="r" style="left:1098.84px;top:520.00px;width:1.30px;height:5.20px;background:#c0c0c0;"></div>
<div class="t" style="left:1085.75px;top:529.67px;font-size:12.79px;line-height:12.79px;color:#cfcfcf;transform:scaleX(1.1000);transform-origin:0 0;">0,15</div>
<div class="r" style="left:1148.72px;top:520.00px;width:1.30px;height:5.20px;background:#c0c0c0;"></div>
<div class="t" style="left:1139.54px;top:529.67px;font-size:12.79px;line-height:12.79px;color:#cfcfcf;transform:scaleX(1.1000);transform-origin:0 0;">0,2</div>
<div class="r" style="left:1198.60px;top:520.00px;width:1.30px;height:5.20px;background:#c0c0c0;"></div>
<div class="t" style="left:1185.51px;top:529.67px;font-size:12.79px;line-height:12.79px;color:#cfcfcf;transform:scaleX(1.1000);transform-origin:0 0;">0,25</div>
<div class="r" style="left:1248.48px;top:520.00px;width:1.30px;height:5.20px;background:#c0c0c0;"></div>
<div class="t" style="left:1239.30px;top:529.67px;font-size:12.79px;line-height:12.79px;color:#cfcfcf;transform:scaleX(1.1000);transform-origin:0 0;">0,3</div>
<div class="r" style="left:1298.36px;top:520.00px;width:1.30px;height:5.20px;background:#c0c0c0;"></div>
<div class="t" style="left:1285.27px;top:529.67px;font-size:12.79px;line-height:12.79px;color:#cfcfcf;transform:scaleX(1.1000);transform-origin:0 0;">0,35</div>
<div class="r" style="left:1348.24px;top:520.00px;width:1.30px;height:5.20px;background:#c0c0c0;"></div>
<div class="t" style="left:1339.06px;top:529.67px;font-size:12.79px;line-height:12.79px;color:#cfcfcf;transform:scaleX(1.1000);transform-origin:0 0;">0,4</div>
<div class="r" style="left:1398.12px;top:520.00px;width:1.30px;height:5.20px;background:#c0c0c0;"></div>
<div class="t" style="left:1385.03px;top:529.67px;font-size:12.79px;line-height:12.79px;color:#cfcfcf;transform:scaleX(1.1000);transform-origin:0 0;">0,45</div>
<div class="r" style="left:1448.00px;top:520.00px;width:1.30px;height:5.20px;background:#c0c0c0;"></div>
<div class="t" style="left:1438.82px;top:529.67px;font-size:12.79px;line-height:12.79px;color:#cfcfcf;transform:scaleX(1.1000);transform-origin:0 0;">0,5</div>
<div class="r" style="left:1497.88px;top:520.00px;width:1.30px;height:5.20px;background:#c0c0c0;"></div>
<div class="t" style="left:1484.79px;top:529.67px;font-size:12.79px;line-height:12.79px;color:#cfcfcf;transform:scaleX(1.1000);transform-origin:0 0;">0,55</div>
<div class="r" style="left:1357.00px;top:357.00px;width:187.20px;height:123.00px;background:linear-gradient(90deg,#ff5a40 0%,#ff4a30 60%,#ff3424 100%);box-shadow:0 0 0 1px #9a9a9a;"></div>
<div class="r" style="left:1357.00px;top:357.00px;width:187.20px;height:123.00px;background:linear-gradient(90deg,#ffa030 0%,#ff7a2c 50%,#ff5e22 100%);-webkit-mask-image:linear-gradient(180deg,#000 0%,rgba(0,0,0,0.55) 50%,rgba(0,0,0,0) 100%);"></div>
<svg class="r" style="left:1357px;top:357px;overflow:hidden" width="187.2" height="123"><rect x="113.40" y="27.50" width="13" height="13" fill="none" stroke="rgba(255,248,240,0.9)" stroke-width="1.9"/><rect x="147.50" y="28.50" width="13" height="13" fill="none" stroke="rgba(255,248,240,0.9)" stroke-width="1.9"/><rect x="41.30" y="40.50" width="13" height="13" fill="none" stroke="rgba(255,248,240,0.9)" stroke-width="1.9"/><rect x="86.40" y="54.30" width="13" height="13" fill="none" stroke="rgba(255,248,240,0.9)" stroke-width="1.9"/><rect x="146.50" y="54.30" width="13" height="13" fill="none" stroke="rgba(255,248,240,0.9)" stroke-width="1.9"/><rect x="99.60" y="63.50" width="13" height="13" fill="none" stroke="rgba(255,248,240,0.9)" stroke-width="1.9"/><rect x="26.40" y="63.20" width="13" height="13" fill="none" stroke="rgba(255,248,240,0.9)" stroke-width="1.9"/><rect x="31.60" y="69.20" width="13" height="13" fill="none" stroke="rgba(255,248,240,0.9)" stroke-width="1.9"/><rect x="4.50" y="74.50" width="13" height="13" fill="none" stroke="rgba(255,248,240,0.9)" stroke-width="1.9"/><rect x="36.60" y="77.30" width="13" height="13" fill="none" stroke="rgba(255,248,240,0.9)" stroke-width="1.9"/><rect x="88.30" y="80.50" width="13" height="13" fill="none" stroke="rgba(255,248,240,0.9)" stroke-width="1.9"/><rect x="-3.30" y="67.20" width="13" height="13" fill="none" stroke="rgba(255,248,240,0.9)" stroke-width="1.9"/><rect x="13.10" y="61.70" width="13" height="13" fill="none" stroke="rgba(255,248,240,0.9)" stroke-width="1.9"/><circle cx="110.50" cy="21.50" r="4.3" fill="#8a5a3a" stroke="#1a1a1a" stroke-width="1.3"/><circle cx="63.50" cy="31.40" r="4.3" fill="#8a6040" stroke="#1a1a1a" stroke-width="1.3"/><circle cx="110.50" cy="41.60" r="4.3" fill="#70482c" stroke="#1a1a1a" stroke-width="1.3"/><circle cx="13.40" cy="67.40" r="4.3" fill="#c88a60" stroke="#1a1a1a" stroke-width="1.3"/><circle cx="22.40" cy="75.20" r="4.3" fill="#c08058" stroke="#1a1a1a" stroke-width="1.3"/><circle cx="4.70" cy="92.50" r="4.3" fill="#f0a080" stroke="#1a1a1a" stroke-width="1.3"/></svg>
<div class="r" style="left:1309.90px;top:488.90px;width:237.00px;height:26.00px;background:#2b2b2b;"></div>
<div class="t" style="left:1311.00px;top:494.44px;font-size:17.44px;line-height:17.44px;color:#f0eee8;transform:scaleX(1.0568);transform-origin:0 0;">RGB Triplet: 217, 140, 94</div>
<div class="r" style="left:295.30px;top:565.30px;width:1262.70px;height:212.10px;background:#141414;"></div>
<div class="r" style="left:297.10px;top:566.30px;width:1260.70px;height:12.20px;background:#2d2d2d;"></div>
<div class="r" style="left:297.10px;top:578.50px;width:1260.70px;height:11.50px;background:linear-gradient(180deg,#1c1c1c,#151515);"></div>
<div class="r" style="left:295.3px;top:565.3px;width:1262.7px;height:212.1px;overflow:hidden">
<div class="r" style="left:2px;top:24.70px;width:1262px;height:21.875px;background:#3c3c3c"></div>
<div class="r" style="left:2px;top:46.58px;width:1262px;height:21.875px;background:#7d7d7d"></div>
<div class="r" style="left:2px;top:68.45px;width:1262px;height:21.875px;background:#3c3c3c"></div>
<div class="r" style="left:2px;top:90.33px;width:1262px;height:21.875px;background:#7d7d7d"></div>
<div class="r" style="left:2px;top:112.20px;width:1262px;height:21.875px;background:#3c3c3c"></div>
<div class="r" style="left:2px;top:134.08px;width:1262px;height:21.875px;background:#7d7d7d"></div>
<div class="r" style="left:2px;top:155.95px;width:1262px;height:21.875px;background:#3c3c3c"></div>
<div class="r" style="left:2px;top:177.83px;width:1262px;height:21.875px;background:#7d7d7d"></div>
</div>
<div class="t" style="left:466.50px;top:572.14px;font-size:14.24px;line-height:14.24px;color:#f2f2f2;font-weight:bold;transform:scaleX(1.1556);transform-origin:0 0;">White</div>
<div class="t" style="left:542.90px;top:572.14px;font-size:14.24px;line-height:14.24px;color:#f2f2f2;font-weight:bold;transform:scaleX(1.0809);transform-origin:0 0;">Gray 80</div>
<div class="t" style="left:625.30px;top:572.14px;font-size:14.24px;line-height:14.24px;color:#f2f2f2;font-weight:bold;transform:scaleX(1.1039);transform-origin:0 0;">Gray 65</div>
<div class="t" style="left:708.00px;top:572.14px;font-size:14.24px;line-height:14.24px;color:#f2f2f2;font-weight:bold;transform:scaleX(1.0905);transform-origin:0 0;">Gray 50</div>
<div class="t" style="left:790.60px;top:572.14px;font-size:14.24px;line-height:14.24px;color:#f2f2f2;font-weight:bold;transform:scaleX(1.0790);transform-origin:0 0;">Gray 35</div>
<div class="t" style="left:877.60px;top:572.14px;font-size:14.24px;line-height:14.24px;color:#f2f2f2;font-weight:bold;transform:scaleX(1.0076);transform-origin:0 0;">Black</div>
<div class="t" style="left:937.80px;top:572.14px;font-size:14.24px;line-height:14.24px;color:#f2f2f2;font-weight:bold;transform:scaleX(1.0500);transform-origin:0 0;">Dark Skin</div>
<div class="t" style="left:1018.00px;top:572.14px;font-size:14.24px;line-height:14.24px;color:#f2f2f2;font-weight:bold;transform:scaleX(1.0168);transform-origin:0 0;">Light Skin</div>
<div class="t" style="left:1100.50px;top:572.14px;font-size:14.24px;line-height:14.24px;color:#f2f2f2;font-weight:bold;transform:scaleX(1.0138);transform-origin:0 0;">Blue Sky</div>
<div class="t" style="left:1177.40px;top:572.14px;font-size:14.24px;line-height:14.24px;color:#f2f2f2;font-weight:bold;transform:scaleX(1.0429);transform-origin:0 0;">Foliage</div>
<div class="t" style="left:1244.70px;top:572.14px;font-size:14.24px;line-height:14.24px;color:#f2f2f2;font-weight:bold;transform:scaleX(1.0789);transform-origin:0 0;">Blue Flower</div>
<div class="t" style="left:1341.70px;top:572.14px;font-size:14.24px;line-height:14.24px;color:#f2f2f2;font-weight:bold;transform:scaleX(1.0592);transform-origin:0 0;">Bluish Green</div>
<div class="t" style="left:1450.00px;top:572.14px;font-size:14.24px;line-height:14.24px;color:#f2f2f2;font-weight:bold;transform:scaleX(1.0828);transform-origin:0 0;">Orange</div>
<div class="t" style="left:1518.60px;top:572.14px;font-size:14.24px;line-height:14.24px;color:#f2f2f2;font-weight:bold;transform:scaleX(1.1700);transform-origin:0 0;">Purplish Blue</div>
<div class="t" style="left:310.50px;top:594.27px;font-size:14.10px;line-height:14.10px;color:#f4f4f4;font-weight:bold;transform:scaleX(1.2100);transform-origin:0 0;">x: CIE31</div>
<div class="t" style="left:452.20px;top:594.27px;font-size:14.10px;line-height:14.10px;color:#f4f4f4;transform:scaleX(1.2300);transform-origin:0 0;">0,3002</div>
<div class="t" style="left:534.90px;top:594.27px;font-size:14.10px;line-height:14.10px;color:#f4f4f4;transform:scaleX(1.2300);transform-origin:0 0;">0,3006</div>
<div class="t" style="left:617.50px;top:594.27px;font-size:14.10px;line-height:14.10px;color:#f4f4f4;transform:scaleX(1.2300);transform-origin:0 0;">0,3004</div>
<div class="t" style="left:699.70px;top:594.27px;font-size:14.10px;line-height:14.10px;color:#f4f4f4;transform:scaleX(1.2300);transform-origin:0 0;">0,3003</div>
<div class="t" style="left:782.40px;top:594.27px;font-size:14.10px;line-height:14.10px;color:#f4f4f4;transform:scaleX(1.2300);transform-origin:0 0;">0,3001</div>
<div class="t" style="left:864.90px;top:594.27px;font-size:14.10px;line-height:14.10px;color:#f4f4f4;transform:scaleX(1.2300);transform-origin:0 0;">0,2713</div>
<div class="t" style="left:937.40px;top:594.27px;font-size:14.10px;line-height:14.10px;color:#f4f4f4;transform:scaleX(1.2300);transform-origin:0 0;">0,3784</div>
<div class="t" style="left:1016.40px;top:594.27px;font-size:14.10px;line-height:14.10px;color:#f4f4f4;transform:scaleX(1.2300);transform-origin:0 0;">0,3569</div>
<div class="t" style="left:1099.00px;top:594.27px;font-size:14.10px;line-height:14.10px;color:#f4f4f4;transform:scaleX(1.2300);transform-origin:0 0;">0,2436</div>
<div class="t" style="left:1171.70px;top:594.27px;font-size:14.10px;line-height:14.10px;color:#f4f4f4;transform:scaleX(1.2300);transform-origin:0 0;">0,3355</div>
<div class="t" style="left:1244.70px;top:594.27px;font-size:14.10px;line-height:14.10px;color:#f4f4f4;transform:scaleX(1.2300);transform-origin:0 0;">0,2572</div>
<div class="t" style="left:1341.70px;top:594.27px;font-size:14.10px;line-height:14.10px;color:#f4f4f4;transform:scaleX(1.2300);transform-origin:0 0;">0,2637</div>
<div class="t" style="left:1446.00px;top:594.27px;font-size:14.10px;line-height:14.10px;color:#f4f4f4;transform:scaleX(1.2300);transform-origin:0 0;">0,4850</div>
<div class="t" style="left:1518.00px;top:594.27px;font-size:14.10px;line-height:14.10px;color:#f4f4f4;transform:scaleX(1.2300);transform-origin:0 0;">0,2122</div>
<div class="t" style="left:310.50px;top:616.14px;font-size:14.10px;line-height:14.10px;color:#e8e8e8;font-weight:bold;transform:scaleX(1.2100);transform-origin:0 0;">y: CIE31</div>
<div class="t" style="left:452.20px;top:616.14px;font-size:14.10px;line-height:14.10px;color:#e8e8e8;transform:scaleX(1.2300);transform-origin:0 0;">0,3196</div>
<div class="t" style="left:534.90px;top:616.14px;font-size:14.10px;line-height:14.10px;color:#e8e8e8;transform:scaleX(1.2300);transform-origin:0 0;">0,3203</div>
<div class="t" style="left:617.50px;top:616.14px;font-size:14.10px;line-height:14.10px;color:#e8e8e8;transform:scaleX(1.2300);transform-origin:0 0;">0,3203</div>
<div class="t" style="left:699.70px;top:616.14px;font-size:14.10px;line-height:14.10px;color:#e8e8e8;transform:scaleX(1.2300);transform-origin:0 0;">0,3205</div>
<div class="t" style="left:782.40px;top:616.14px;font-size:14.10px;line-height:14.10px;color:#e8e8e8;transform:scaleX(1.2300);transform-origin:0 0;">0,3204</div>
<div class="t" style="left:864.90px;top:616.14px;font-size:14.10px;line-height:14.10px;color:#e8e8e8;transform:scaleX(1.2300);transform-origin:0 0;">0,2699</div>
<div class="t" style="left:937.40px;top:616.14px;font-size:14.10px;line-height:14.10px;color:#e8e8e8;transform:scaleX(1.2300);transform-origin:0 0;">0,3592</div>
<div class="t" style="left:1016.40px;top:616.14px;font-size:14.10px;line-height:14.10px;color:#e8e8e8;transform:scaleX(1.2300);transform-origin:0 0;">0,3486</div>
<div class="t" style="left:1099.00px;top:616.14px;font-size:14.10px;line-height:14.10px;color:#e8e8e8;transform:scaleX(1.2300);transform-origin:0 0;">0,2659</div>
<div class="t" style="left:1171.70px;top:616.14px;font-size:14.10px;line-height:14.10px;color:#e8e8e8;transform:scaleX(1.2300);transform-origin:0 0;">0,4080</div>
<div class="t" style="left:1244.70px;top:616.14px;font-size:14.10px;line-height:14.10px;color:#e8e8e8;transform:scaleX(1.2300);transform-origin:0 0;">0,2578</div>
<div class="t" style="left:1341.70px;top:616.14px;font-size:14.10px;line-height:14.10px;color:#e8e8e8;transform:scaleX(1.2300);transform-origin:0 0;">0,3416</div>
<div class="t" style="left:1446.00px;top:616.14px;font-size:14.10px;line-height:14.10px;color:#e8e8e8;transform:scaleX(1.2300);transform-origin:0 0;">0,4128</div>
<div class="t" style="left:1518.00px;top:616.14px;font-size:14.10px;line-height:14.10px;color:#e8e8e8;transform:scaleX(1.2300);transform-origin:0 0;">0,2083</div>
<div class="t" style="left:310.50px;top:638.02px;font-size:14.10px;line-height:14.10px;color:#f4f4f4;font-weight:bold;transform:scaleX(1.2100);transform-origin:0 0;">Y</div>
<div class="t" style="left:452.20px;top:638.02px;font-size:14.10px;line-height:14.10px;color:#f4f4f4;transform:scaleX(1.2300);transform-origin:0 0;">331,8228</div>
<div class="t" style="left:534.90px;top:638.02px;font-size:14.10px;line-height:14.10px;color:#f4f4f4;transform:scaleX(1.2300);transform-origin:0 0;">261,9718</div>
<div class="t" style="left:617.50px;top:638.02px;font-size:14.10px;line-height:14.10px;color:#f4f4f4;transform:scaleX(1.2300);transform-origin:0 0;">212,0557</div>
<div class="t" style="left:699.70px;top:638.02px;font-size:14.10px;line-height:14.10px;color:#f4f4f4;transform:scaleX(1.2300);transform-origin:0 0;">164,1857</div>
<div class="t" style="left:782.40px;top:638.02px;font-size:14.10px;line-height:14.10px;color:#f4f4f4;transform:scaleX(1.2300);transform-origin:0 0;">115,4826</div>
<div class="t" style="left:864.90px;top:638.02px;font-size:14.10px;line-height:14.10px;color:#f4f4f4;transform:scaleX(1.2300);transform-origin:0 0;">0,3157</div>
<div class="t" style="left:937.40px;top:638.02px;font-size:14.10px;line-height:14.10px;color:#f4f4f4;transform:scaleX(1.2300);transform-origin:0 0;">33,5382</div>
<div class="t" style="left:1016.40px;top:638.02px;font-size:14.10px;line-height:14.10px;color:#f4f4f4;transform:scaleX(1.2300);transform-origin:0 0;">115,7844</div>
<div class="t" style="left:1099.00px;top:638.02px;font-size:14.10px;line-height:14.10px;color:#f4f4f4;transform:scaleX(1.2300);transform-origin:0 0;">67,4265</div>
<div class="t" style="left:1171.70px;top:638.02px;font-size:14.10px;line-height:14.10px;color:#f4f4f4;transform:scaleX(1.2300);transform-origin:0 0;">41,8140</div>
<div class="t" style="left:1244.70px;top:638.02px;font-size:14.10px;line-height:14.10px;color:#f4f4f4;transform:scaleX(1.2300);transform-origin:0 0;">85,3602</div>
<div class="t" style="left:1341.70px;top:638.02px;font-size:14.10px;line-height:14.10px;color:#f4f4f4;transform:scaleX(1.2300);transform-origin:0 0;">135,8107</div>
<div class="t" style="left:1446.00px;top:638.02px;font-size:14.10px;line-height:14.10px;color:#f4f4f4;transform:scaleX(1.2300);transform-origin:0 0;">91,1856</div>
<div class="t" style="left:1518.00px;top:638.02px;font-size:14.10px;line-height:14.10px;color:#f4f4f4;transform:scaleX(1.2300);transform-origin:0 0;">47,0612</div>
<div class="t" style="left:310.50px;top:659.89px;font-size:14.10px;line-height:14.10px;color:#e8e8e8;font-weight:bold;transform:scaleX(1.2100);transform-origin:0 0;">Target x:CIE31</div>
<div class="t" style="left:452.20px;top:659.89px;font-size:14.10px;line-height:14.10px;color:#e8e8e8;transform:scaleX(1.2300);transform-origin:0 0;">0,3127</div>
<div class="t" style="left:534.90px;top:659.89px;font-size:14.10px;line-height:14.10px;color:#e8e8e8;transform:scaleX(1.2300);transform-origin:0 0;">0,3127</div>
<div class="t" style="left:617.50px;top:659.89px;font-size:14.10px;line-height:14.10px;color:#e8e8e8;transform:scaleX(1.2300);transform-origin:0 0;">0,3127</div>
<div class="t" style="left:699.70px;top:659.89px;font-size:14.10px;line-height:14.10px;color:#e8e8e8;transform:scaleX(1.2300);transform-origin:0 0;">0,3127</div>
<div class="t" style="left:782.40px;top:659.89px;font-size:14.10px;line-height:14.10px;color:#e8e8e8;transform:scaleX(1.2300);transform-origin:0 0;">0,3127</div>
<div class="t" style="left:864.90px;top:659.89px;font-size:14.10px;line-height:14.10px;color:#e8e8e8;transform:scaleX(1.2300);transform-origin:0 0;">0,3127</div>
<div class="t" style="left:937.40px;top:659.89px;font-size:14.10px;line-height:14.10px;color:#e8e8e8;transform:scaleX(1.2300);transform-origin:0 0;">0,4003</div>
<div class="t" style="left:1016.40px;top:659.89px;font-size:14.10px;line-height:14.10px;color:#e8e8e8;transform:scaleX(1.2300);transform-origin:0 0;">0,3795</div>
<div class="t" style="left:1099.00px;top:659.89px;font-size:14.10px;line-height:14.10px;color:#e8e8e8;transform:scaleX(1.2300);transform-origin:0 0;">0,2496</div>
<div class="t" style="left:1171.70px;top:659.89px;font-size:14.10px;line-height:14.10px;color:#e8e8e8;transform:scaleX(1.2300);transform-origin:0 0;">0,3395</div>
<div class="t" style="left:1244.70px;top:659.89px;font-size:14.10px;line-height:14.10px;color:#e8e8e8;transform:scaleX(1.2300);transform-origin:0 0;">0,2681</div>
<div class="t" style="left:1341.70px;top:659.89px;font-size:14.10px;line-height:14.10px;color:#e8e8e8;transform:scaleX(1.2300);transform-origin:0 0;">0,2626</div>
<div class="t" style="left:1446.00px;top:659.89px;font-size:14.10px;line-height:14.10px;color:#e8e8e8;transform:scaleX(1.2300);transform-origin:0 0;">0,5122</div>
<div class="t" style="left:1518.00px;top:659.89px;font-size:14.10px;line-height:14.10px;color:#e8e8e8;transform:scaleX(1.2300);transform-origin:0 0;">0,2161</div>
<div class="t" style="left:310.50px;top:681.77px;font-size:14.10px;line-height:14.10px;color:#f4f4f4;font-weight:bold;transform:scaleX(1.2100);transform-origin:0 0;">Target y:CIE31</div>
<div class="t" style="left:452.20px;top:681.77px;font-size:14.10px;line-height:14.10px;color:#f4f4f4;transform:scaleX(1.2300);transform-origin:0 0;">0,3290</div>
<div class="t" style="left:534.90px;top:681.77px;font-size:14.10px;line-height:14.10px;color:#f4f4f4;transform:scaleX(1.2300);transform-origin:0 0;">0,3290</div>
<div class="t" style="left:617.50px;top:681.77px;font-size:14.10px;line-height:14.10px;color:#f4f4f4;transform:scaleX(1.2300);transform-origin:0 0;">0,3290</div>
<div class="t" style="left:699.70px;top:681.77px;font-size:14.10px;line-height:14.10px;color:#f4f4f4;transform:scaleX(1.2300);transform-origin:0 0;">0,3290</div>
<div class="t" style="left:782.40px;top:681.77px;font-size:14.10px;line-height:14.10px;color:#f4f4f4;transform:scaleX(1.2300);transform-origin:0 0;">0,3290</div>
<div class="t" style="left:864.90px;top:681.77px;font-size:14.10px;line-height:14.10px;color:#f4f4f4;transform:scaleX(1.2300);transform-origin:0 0;">0,3290</div>
<div class="t" style="left:937.40px;top:681.77px;font-size:14.10px;line-height:14.10px;color:#f4f4f4;transform:scaleX(1.2300);transform-origin:0 0;">0,3642</div>
<div class="t" style="left:1016.40px;top:681.77px;font-size:14.10px;line-height:14.10px;color:#f4f4f4;transform:scaleX(1.2300);transform-origin:0 0;">0,3562</div>
<div class="t" style="left:1099.00px;top:681.77px;font-size:14.10px;line-height:14.10px;color:#f4f4f4;transform:scaleX(1.2300);transform-origin:0 0;">0,2656</div>
<div class="t" style="left:1171.70px;top:681.77px;font-size:14.10px;line-height:14.10px;color:#f4f4f4;transform:scaleX(1.2300);transform-origin:0 0;">0,4271</div>
<div class="t" style="left:1244.70px;top:681.77px;font-size:14.10px;line-height:14.10px;color:#f4f4f4;transform:scaleX(1.2300);transform-origin:0 0;">0,2525</div>
<div class="t" style="left:1341.70px;top:681.77px;font-size:14.10px;line-height:14.10px;color:#f4f4f4;transform:scaleX(1.2300);transform-origin:0 0;">0,3616</div>
<div class="t" style="left:1446.00px;top:681.77px;font-size:14.10px;line-height:14.10px;color:#f4f4f4;transform:scaleX(1.2300);transform-origin:0 0;">0,4063</div>
<div class="t" style="left:1518.00px;top:681.77px;font-size:14.10px;line-height:14.10px;color:#f4f4f4;transform:scaleX(1.2300);transform-origin:0 0;">0,1922</div>
<div class="t" style="left:310.50px;top:703.64px;font-size:14.10px;line-height:14.10px;color:#e8e8e8;font-weight:bold;transform:scaleX(1.2100);transform-origin:0 0;">Target Y</div>
<div class="t" style="left:452.20px;top:703.64px;font-size:14.10px;line-height:14.10px;color:#e8e8e8;transform:scaleX(1.2300);transform-origin:0 0;">331,8228</div>
<div class="t" style="left:534.90px;top:703.64px;font-size:14.10px;line-height:14.10px;color:#e8e8e8;transform:scaleX(1.2300);transform-origin:0 0;">262,5707</div>
<div class="t" style="left:617.50px;top:703.64px;font-size:14.10px;line-height:14.10px;color:#e8e8e8;transform:scaleX(1.2300);transform-origin:0 0;">211,5691</div>
<div class="t" style="left:699.70px;top:703.64px;font-size:14.10px;line-height:14.10px;color:#e8e8e8;transform:scaleX(1.2300);transform-origin:0 0;">162,9319</div>
<div class="t" style="left:782.40px;top:703.64px;font-size:14.10px;line-height:14.10px;color:#e8e8e8;transform:scaleX(1.2300);transform-origin:0 0;">113,4550</div>
<div class="t" style="left:864.90px;top:703.64px;font-size:14.10px;line-height:14.10px;color:#e8e8e8;transform:scaleX(1.2300);transform-origin:0 0;">0,0000</div>
<div class="t" style="left:937.40px;top:703.64px;font-size:14.10px;line-height:14.10px;color:#e8e8e8;transform:scaleX(1.2300);transform-origin:0 0;">33,4255</div>
<div class="t" style="left:1016.40px;top:703.64px;font-size:14.10px;line-height:14.10px;color:#e8e8e8;transform:scaleX(1.2300);transform-origin:0 0;">115,7901</div>
<div class="t" style="left:1099.00px;top:703.64px;font-size:14.10px;line-height:14.10px;color:#e8e8e8;transform:scaleX(1.2300);transform-origin:0 0;">62,0455</div>
<div class="t" style="left:1171.70px;top:703.64px;font-size:14.10px;line-height:14.10px;color:#e8e8e8;transform:scaleX(1.2300);transform-origin:0 0;">43,2446</div>
<div class="t" style="left:1244.70px;top:703.64px;font-size:14.10px;line-height:14.10px;color:#e8e8e8;transform:scaleX(1.2300);transform-origin:0 0;">77,3760</div>
<div class="t" style="left:1341.70px;top:703.64px;font-size:14.10px;line-height:14.10px;color:#e8e8e8;transform:scaleX(1.2300);transform-origin:0 0;">138,9442</div>
<div class="t" style="left:1446.00px;top:703.64px;font-size:14.10px;line-height:14.10px;color:#e8e8e8;transform:scaleX(1.2300);transform-origin:0 0;">94,0645</div>
<div class="t" style="left:1518.00px;top:703.64px;font-size:14.10px;line-height:14.10px;color:#e8e8e8;transform:scaleX(1.2300);transform-origin:0 0;">39,0012</div>
<div class="t" style="left:310.50px;top:725.52px;font-size:14.10px;line-height:14.10px;color:#f4f4f4;font-weight:bold;transform:scaleX(1.2100);transform-origin:0 0;">&Delta;E 2000</div>
<div class="t" style="left:452.20px;top:725.52px;font-size:14.10px;line-height:14.10px;color:#f4f4f4;transform:scaleX(1.2300);transform-origin:0 0;">5,7824</div>
<div class="t" style="left:534.90px;top:725.52px;font-size:14.10px;line-height:14.10px;color:#f4f4f4;transform:scaleX(1.2300);transform-origin:0 0;">5,2629</div>
<div class="t" style="left:617.50px;top:725.52px;font-size:14.10px;line-height:14.10px;color:#f4f4f4;transform:scaleX(1.2300);transform-origin:0 0;">5,0399</div>
<div class="t" style="left:699.70px;top:725.52px;font-size:14.10px;line-height:14.10px;color:#f4f4f4;transform:scaleX(1.2300);transform-origin:0 0;">4,6875</div>
<div class="t" style="left:782.40px;top:725.52px;font-size:14.10px;line-height:14.10px;color:#f4f4f4;transform:scaleX(1.2300);transform-origin:0 0;">4,3119</div>
<div class="t" style="left:864.90px;top:725.52px;font-size:14.10px;line-height:14.10px;color:#f4f4f4;transform:scaleX(1.2300);transform-origin:0 0;">1,0023</div>
<div class="t" style="left:937.40px;top:725.52px;font-size:14.10px;line-height:14.10px;color:#f4f4f4;transform:scaleX(1.2300);transform-origin:0 0;">3,1491</div>
<div class="t" style="left:1016.40px;top:725.52px;font-size:14.10px;line-height:14.10px;color:#f4f4f4;transform:scaleX(1.2300);transform-origin:0 0;">4,4088</div>
<div class="t" style="left:1099.00px;top:725.52px;font-size:14.10px;line-height:14.10px;color:#f4f4f4;transform:scaleX(1.2300);transform-origin:0 0;">3,1799</div>
<div class="t" style="left:1171.70px;top:725.52px;font-size:14.10px;line-height:14.10px;color:#f4f4f4;transform:scaleX(1.2300);transform-origin:0 0;">2,5680</div>
<div class="t" style="left:1244.70px;top:725.52px;font-size:14.10px;line-height:14.10px;color:#f4f4f4;transform:scaleX(1.2300);transform-origin:0 0;">5,8909</div>
<div class="t" style="left:1341.70px;top:725.52px;font-size:14.10px;line-height:14.10px;color:#f4f4f4;transform:scaleX(1.2300);transform-origin:0 0;">4,9463</div>
<div class="t" style="left:1446.00px;top:725.52px;font-size:14.10px;line-height:14.10px;color:#f4f4f4;transform:scaleX(1.2300);transform-origin:0 0;">4,0648</div>
<div class="t" style="left:1518.00px;top:725.52px;font-size:14.10px;line-height:14.10px;color:#f4f4f4;transform:scaleX(1.2300);transform-origin:0 0;">6,0961</div>
<div class="t" style="left:310.50px;top:747.39px;font-size:14.10px;line-height:14.10px;color:#e8e8e8;font-weight:bold;transform:scaleX(1.2100);transform-origin:0 0;">&Delta;E ITP</div>
<div class="t" style="left:452.20px;top:747.39px;font-size:14.10px;line-height:14.10px;color:#e8e8e8;transform:scaleX(1.2300);transform-origin:0 0;">7,4777</div>
<div class="t" style="left:534.90px;top:747.39px;font-size:14.10px;line-height:14.10px;color:#e8e8e8;transform:scaleX(1.2300);transform-origin:0 0;">7,2014</div>
<div class="t" style="left:617.50px;top:747.39px;font-size:14.10px;line-height:14.10px;color:#e8e8e8;transform:scaleX(1.2300);transform-origin:0 0;">7,2903</div>
<div class="t" style="left:699.70px;top:747.39px;font-size:14.10px;line-height:14.10px;color:#e8e8e8;transform:scaleX(1.2300);transform-origin:0 0;">7,2351</div>
<div class="t" style="left:782.40px;top:747.39px;font-size:14.10px;line-height:14.10px;color:#e8e8e8;transform:scaleX(1.2300);transform-origin:0 0;">7,3274</div>
<div class="t" style="left:864.90px;top:747.39px;font-size:14.10px;line-height:14.10px;color:#e8e8e8;transform:scaleX(1.2300);transform-origin:0 0;">72,4381</div>
<div class="t" style="left:937.40px;top:747.39px;font-size:14.10px;line-height:14.10px;color:#e8e8e8;transform:scaleX(1.2300);transform-origin:0 0;">11,0067</div>
<div class="t" style="left:1016.40px;top:747.39px;font-size:14.10px;line-height:14.10px;color:#e8e8e8;transform:scaleX(1.2300);transform-origin:0 0;">12,5363</div>
<div class="t" style="left:1099.00px;top:747.39px;font-size:14.10px;line-height:14.10px;color:#e8e8e8;transform:scaleX(1.2300);transform-origin:0 0;">7,5168</div>
<div class="t" style="left:1171.70px;top:747.39px;font-size:14.10px;line-height:14.10px;color:#e8e8e8;transform:scaleX(1.2300);transform-origin:0 0;">7,2624</div>
<div class="t" style="left:1244.70px;top:747.39px;font-size:14.10px;line-height:14.10px;color:#e8e8e8;transform:scaleX(1.2300);transform-origin:0 0;">12,5144</div>
<div class="t" style="left:1341.70px;top:747.39px;font-size:14.10px;line-height:14.10px;color:#e8e8e8;transform:scaleX(1.2300);transform-origin:0 0;">7,8005</div>
<div class="t" style="left:1446.00px;top:747.39px;font-size:14.10px;line-height:14.10px;color:#e8e8e8;transform:scaleX(1.2300);transform-origin:0 0;">17,9246</div>
<div class="t" style="left:1518.00px;top:747.39px;font-size:14.10px;line-height:14.10px;color:#e8e8e8;transform:scaleX(1.2300);transform-origin:0 0;">16,0012</div>
<div class="r" style="left:297.30px;top:764.30px;width:1260.70px;height:13.10px;background:#5d5d5d;"></div>
<div class="r" style="left:317.00px;top:765.30px;width:369.00px;height:11.00px;background:#454545;border-radius:5.5px;"></div>
<div class="r" style="left:298.00px;top:765.50px;width:11.00px;height:10.80px;background:#6f6f6f;border-radius:2px;"></div>
<svg class="r" style="left:300px;top:766.5px" width="8" height="9"><path d="M6 0.5 L6 8.5 L1.5 4.5 Z" fill="#2a2a2a"/></svg>
<div class="r" style="left:1541.00px;top:765.50px;width:13.00px;height:10.80px;background:#6f6f6f;border-radius:2px;"></div>
<svg class="r" style="left:1544px;top:766.5px" width="8" height="9"><path d="M1.5 0.5 L1.5 8.5 L6 4.5 Z" fill="#2a2a2a"/></svg>
<div class="r" style="left:0.00px;top:850.20px;width:1237.00px;height:11.80px;background:#5c5c5c;"></div>
<div class="r" style="left:606.00px;top:851.50px;width:620.00px;height:10.50px;background:#444444;border-radius:5px;"></div>
<svg class="r" style="left:0px;top:851px" width="7" height="10"><path d="M5.5 0.5 L5.5 9.5 L0.5 5 Z" fill="#3a3a3a"/></svg>
<div class="r" style="left:1222.00px;top:851.50px;width:12.00px;height:10.50px;background:#6e6e6e;border-radius:2px;"></div>
<svg class="r" style="left:1225px;top:852.5px" width="7" height="9"><path d="M1 0.5 L1 8.5 L6 4.5 Z" fill="#2e2e2e"/></svg>
<div class="r" style="left:-9.90px;top:802.10px;width:49.80px;height:48.20px;background:linear-gradient(180deg,#a9a9a9 0%,#9a9a9a 35%,#7a7a7a 75%,#636363 100%);border-radius:4px 4px 0 0;"></div>
<div class="r" style="left:-4.80px;top:806.80px;width:39.80px;height:24.20px;background:#0a87a8;border-radius:4px;box-shadow:0 0 1px 1px rgba(0,0,0,0.25);"></div>
<div class="t" style="left:0.86px;top:836.72px;font-size:10.61px;line-height:10.61px;color:#262626;transform:scaleX(1.1500);transform-origin:0 0;-webkit-text-stroke:0.25px #262626;">Cyan</div>
<div class="r" style="left:42.10px;top:802.10px;width:49.80px;height:48.20px;background:linear-gradient(180deg,#a9a9a9 0%,#9a9a9a 35%,#7a7a7a 75%,#636363 100%);border-radius:4px 4px 0 0;"></div>
<div class="r" style="left:47.20px;top:806.80px;width:39.80px;height:24.20px;background:#ff0000;border-radius:4px;box-shadow:0 0 1px 1px rgba(0,0,0,0.25);"></div>
<div class="t" style="left:43.35px;top:836.72px;font-size:10.61px;line-height:10.61px;color:#262626;transform:scaleX(0.9586);transform-origin:0 0;-webkit-text-stroke:0.25px #262626;">100% Red</div>
<div class="r" style="left:94.10px;top:802.10px;width:49.80px;height:48.20px;background:linear-gradient(180deg,#a9a9a9 0%,#9a9a9a 35%,#7a7a7a 75%,#636363 100%);border-radius:4px 4px 0 0;"></div>
<div class="r" style="left:99.20px;top:806.80px;width:39.80px;height:12.30px;background:#00ff00;border-radius:4px;box-shadow:0 0 1px 1px rgba(0,0,0,0.25);"></div>
<div class="t" style="left:103.90px;top:824.52px;font-size:10.61px;line-height:10.61px;color:#262626;transform:scaleX(1.1200);transform-origin:0 0;">100%</div>
<div class="t" style="left:102.59px;top:836.72px;font-size:10.61px;line-height:10.61px;color:#262626;transform:scaleX(1.1200);transform-origin:0 0;">Green</div>
<div class="r" style="left:146.10px;top:802.10px;width:49.80px;height:48.20px;background:linear-gradient(180deg,#a9a9a9 0%,#9a9a9a 35%,#7a7a7a 75%,#636363 100%);border-radius:4px 4px 0 0;"></div>
<div class="r" style="left:151.20px;top:806.80px;width:39.80px;height:12.30px;background:#0000ff;border-radius:4px;box-shadow:0 0 1px 1px rgba(0,0,0,0.25);"></div>
<div class="t" style="left:155.90px;top:824.52px;font-size:10.61px;line-height:10.61px;color:#262626;transform:scaleX(1.1200);transform-origin:0 0;">100%</div>
<div class="t" style="left:159.21px;top:836.72px;font-size:10.61px;line-height:10.61px;color:#262626;transform:scaleX(1.1200);transform-origin:0 0;">Blue</div>
<div class="r" style="left:198.10px;top:802.10px;width:49.80px;height:48.20px;background:linear-gradient(180deg,#a9a9a9 0%,#9a9a9a 35%,#7a7a7a 75%,#636363 100%);border-radius:4px 4px 0 0;"></div>
<div class="r" style="left:203.20px;top:806.80px;width:39.80px;height:12.30px;background:#00ffff;border-radius:4px;box-shadow:0 0 1px 1px rgba(0,0,0,0.25);"></div>
<div class="t" style="left:207.90px;top:824.52px;font-size:10.61px;line-height:10.61px;color:#262626;transform:scaleX(1.1200);transform-origin:0 0;">100%</div>
<div class="t" style="left:209.23px;top:836.72px;font-size:10.61px;line-height:10.61px;color:#262626;transform:scaleX(1.1200);transform-origin:0 0;">Cyan</div>
<div class="r" style="left:250.10px;top:802.10px;width:49.80px;height:48.20px;background:linear-gradient(180deg,#a9a9a9 0%,#9a9a9a 35%,#7a7a7a 75%,#636363 100%);border-radius:4px 4px 0 0;"></div>
<div class="r" style="left:255.20px;top:806.80px;width:39.80px;height:12.30px;background:#ff00ff;border-radius:4px;box-shadow:0 0 1px 1px rgba(0,0,0,0.25);"></div>
<div class="t" style="left:259.90px;top:824.52px;font-size:10.61px;line-height:10.61px;color:#262626;transform:scaleX(1.1200);transform-origin:0 0;">100%</div>
<div class="t" style="left:251.98px;top:836.72px;font-size:10.61px;line-height:10.61px;color:#262626;transform:scaleX(1.1200);transform-origin:0 0;">Magenta</div>
<div class="r" style="left:302.10px;top:802.10px;width:49.80px;height:48.20px;background:linear-gradient(180deg,#a9a9a9 0%,#9a9a9a 35%,#7a7a7a 75%,#636363 100%);border-radius:4px 4px 0 0;"></div>
<div class="r" style="left:307.20px;top:806.80px;width:39.80px;height:12.30px;background:#ffff00;border-radius:4px;box-shadow:0 0 1px 1px rgba(0,0,0,0.25);"></div>
<div class="t" style="left:311.90px;top:824.52px;font-size:10.61px;line-height:10.61px;color:#262626;transform:scaleX(1.1200);transform-origin:0 0;">100%</div>
<div class="t" style="left:310.14px;top:836.72px;font-size:10.61px;line-height:10.61px;color:#262626;transform:scaleX(1.1200);transform-origin:0 0;">Yellow</div>
<div class="r" style="left:354.10px;top:802.10px;width:49.80px;height:48.20px;background:linear-gradient(180deg,#a9a9a9 0%,#9a9a9a 35%,#7a7a7a 75%,#636363 100%);border-radius:4px 4px 0 0;"></div>
<div class="r" style="left:359.20px;top:806.80px;width:39.80px;height:24.20px;background:#7a4428;border-radius:4px;box-shadow:0 0 1px 1px rgba(0,0,0,0.25);"></div>
<div class="t" style="left:371.64px;top:836.72px;font-size:10.61px;line-height:10.61px;color:#262626;transform:scaleX(1.1500);transform-origin:0 0;-webkit-text-stroke:0.25px #262626;">2E</div>
<div class="r" style="left:406.10px;top:802.10px;width:49.80px;height:48.20px;background:linear-gradient(180deg,#a9a9a9 0%,#9a9a9a 35%,#7a7a7a 75%,#636363 100%);border-radius:4px 4px 0 0;"></div>
<div class="r" style="left:411.20px;top:806.80px;width:39.80px;height:24.20px;background:#d48c6c;border-radius:4px;box-shadow:0 0 1px 1px rgba(0,0,0,0.25);"></div>
<div class="t" style="left:423.98px;top:836.72px;font-size:10.61px;line-height:10.61px;color:#262626;transform:scaleX(1.1500);transform-origin:0 0;-webkit-text-stroke:0.25px #262626;">2F</div>
<div class="r" style="left:458.10px;top:802.10px;width:49.80px;height:48.20px;background:linear-gradient(180deg,#a9a9a9 0%,#9a9a9a 35%,#7a7a7a 75%,#636363 100%);border-radius:4px 4px 0 0;"></div>
<div class="r" style="left:463.20px;top:806.80px;width:39.80px;height:24.20px;background:#ffc99a;border-radius:4px;box-shadow:0 0 1px 1px rgba(0,0,0,0.25);"></div>
<div class="t" style="left:475.64px;top:836.72px;font-size:10.61px;line-height:10.61px;color:#262626;transform:scaleX(1.1500);transform-origin:0 0;-webkit-text-stroke:0.25px #262626;">2K</div>
<div class="r" style="left:510.10px;top:802.10px;width:49.80px;height:48.20px;background:linear-gradient(180deg,#a9a9a9 0%,#9a9a9a 35%,#7a7a7a 75%,#636363 100%);border-radius:4px 4px 0 0;"></div>
<div class="r" style="left:515.20px;top:806.80px;width:39.80px;height:24.20px;background:#ffc9aa;border-radius:4px;box-shadow:0 0 1px 1px rgba(0,0,0,0.25);"></div>
<div class="t" style="left:527.30px;top:836.72px;font-size:10.61px;line-height:10.61px;color:#262626;transform:scaleX(1.1500);transform-origin:0 0;-webkit-text-stroke:0.25px #262626;">5D</div>
<div class="r" style="left:562.10px;top:802.10px;width:49.80px;height:48.20px;background:linear-gradient(180deg,#a9a9a9 0%,#9a9a9a 35%,#7a7a7a 75%,#636363 100%);border-radius:4px 4px 0 0;"></div>
<div class="r" style="left:567.20px;top:806.80px;width:39.80px;height:24.20px;background:#f8a270;border-radius:4px;box-shadow:0 0 1px 1px rgba(0,0,0,0.25);"></div>
<div class="t" style="left:579.64px;top:836.72px;font-size:10.61px;line-height:10.61px;color:#262626;transform:scaleX(1.1500);transform-origin:0 0;-webkit-text-stroke:0.25px #262626;">7E</div>
<div class="r" style="left:614.10px;top:802.10px;width:49.80px;height:48.20px;background:linear-gradient(180deg,#a9a9a9 0%,#9a9a9a 35%,#7a7a7a 75%,#636363 100%);border-radius:4px 4px 0 0;"></div>
<div class="r" style="left:619.20px;top:806.80px;width:39.80px;height:24.20px;background:#cc8c58;border-radius:4px;box-shadow:0 0 1px 1px rgba(0,0,0,0.25);"></div>
<div class="t" style="left:631.98px;top:836.72px;font-size:10.61px;line-height:10.61px;color:#262626;transform:scaleX(1.1500);transform-origin:0 0;-webkit-text-stroke:0.25px #262626;">7F</div>
<div class="r" style="left:666.10px;top:802.10px;width:49.80px;height:48.20px;background:linear-gradient(180deg,#a9a9a9 0%,#9a9a9a 35%,#7a7a7a 75%,#636363 100%);border-radius:4px 4px 0 0;"></div>
<div class="r" style="left:671.20px;top:806.80px;width:39.80px;height:24.20px;background:#93592f;border-radius:4px;box-shadow:0 0 1px 1px rgba(0,0,0,0.25);"></div>
<div class="t" style="left:682.96px;top:836.72px;font-size:10.61px;line-height:10.61px;color:#262626;transform:scaleX(1.1500);transform-origin:0 0;-webkit-text-stroke:0.25px #262626;">7G</div>
<div class="r" style="left:718.10px;top:802.10px;width:49.80px;height:48.20px;background:linear-gradient(180deg,#a9a9a9 0%,#9a9a9a 35%,#7a7a7a 75%,#636363 100%);border-radius:4px 4px 0 0;"></div>
<div class="r" style="left:723.20px;top:806.80px;width:39.80px;height:24.20px;background:#da9a78;border-radius:4px;box-shadow:0 0 1px 1px rgba(0,0,0,0.25);"></div>
<div class="t" style="left:735.30px;top:836.72px;font-size:10.61px;line-height:10.61px;color:#262626;transform:scaleX(1.1500);transform-origin:0 0;-webkit-text-stroke:0.25px #262626;">7H</div>
<div class="r" style="left:770.10px;top:802.10px;width:49.80px;height:48.20px;background:linear-gradient(180deg,#a9a9a9 0%,#9a9a9a 35%,#7a7a7a 75%,#636363 100%);border-radius:4px 4px 0 0;"></div>
<div class="r" style="left:775.20px;top:806.80px;width:39.80px;height:24.20px;background:#b05a22;border-radius:4px;box-shadow:0 0 1px 1px rgba(0,0,0,0.25);"></div>
<div class="t" style="left:790.01px;top:836.72px;font-size:10.61px;line-height:10.61px;color:#262626;transform:scaleX(1.1500);transform-origin:0 0;-webkit-text-stroke:0.25px #262626;">7I</div>
<div class="r" style="left:822.10px;top:802.10px;width:49.80px;height:48.20px;background:linear-gradient(180deg,#a9a9a9 0%,#9a9a9a 35%,#7a7a7a 75%,#636363 100%);border-radius:4px 4px 0 0;"></div>
<div class="r" style="left:827.20px;top:806.80px;width:39.80px;height:24.20px;background:#e08a5a;border-radius:4px;box-shadow:0 0 1px 1px rgba(0,0,0,0.25);"></div>
<div class="t" style="left:840.66px;top:836.72px;font-size:10.61px;line-height:10.61px;color:#262626;transform:scaleX(1.1500);transform-origin:0 0;-webkit-text-stroke:0.25px #262626;">7J</div>
<div class="r" style="left:874.10px;top:802.10px;width:49.80px;height:48.20px;background:linear-gradient(180deg,#a9a9a9 0%,#9a9a9a 35%,#7a7a7a 75%,#636363 100%);border-radius:4px 4px 0 0;"></div>
<div class="r" style="left:879.20px;top:806.80px;width:39.80px;height:24.20px;background:#d88c6c;border-radius:4px;box-shadow:0 0 1px 1px rgba(0,0,0,0.25);"></div>
<div class="t" style="left:891.30px;top:836.72px;font-size:10.61px;line-height:10.61px;color:#262626;transform:scaleX(1.1500);transform-origin:0 0;-webkit-text-stroke:0.25px #262626;">8D</div>
<div class="r" style="left:926.10px;top:802.10px;width:49.80px;height:48.20px;background:linear-gradient(180deg,#a9a9a9 0%,#9a9a9a 35%,#7a7a7a 75%,#636363 100%);border-radius:4px 4px 0 0;"></div>
<div class="r" style="left:931.20px;top:806.80px;width:39.80px;height:24.20px;background:#ff9672;border-radius:4px;box-shadow:0 0 1px 1px rgba(0,0,0,0.25);"></div>
<div class="t" style="left:943.64px;top:836.72px;font-size:10.61px;line-height:10.61px;color:#262626;transform:scaleX(1.1500);transform-origin:0 0;-webkit-text-stroke:0.25px #262626;">8E</div>
<div class="r" style="left:978.10px;top:802.10px;width:49.80px;height:48.20px;background:linear-gradient(180deg,#a9a9a9 0%,#9a9a9a 35%,#7a7a7a 75%,#636363 100%);border-radius:4px 4px 0 0;"></div>
<div class="r" style="left:983.20px;top:806.80px;width:39.80px;height:24.20px;background:#d4946c;border-radius:4px;box-shadow:0 0 1px 1px rgba(0,0,0,0.25);"></div>
<div class="t" style="left:995.98px;top:836.72px;font-size:10.61px;line-height:10.61px;color:#262626;transform:scaleX(1.1500);transform-origin:0 0;-webkit-text-stroke:0.25px #262626;">8F</div>
<div class="r" style="left:1030.10px;top:802.10px;width:49.80px;height:48.20px;background:linear-gradient(180deg,#a9a9a9 0%,#9a9a9a 35%,#7a7a7a 75%,#636363 100%);border-radius:4px 4px 0 0;"></div>
<div class="r" style="left:1035.20px;top:806.80px;width:39.80px;height:24.20px;background:#d48e6a;border-radius:4px;box-shadow:0 0 1px 1px rgba(0,0,0,0.25);"></div>
<div class="t" style="left:1046.96px;top:836.72px;font-size:10.61px;line-height:10.61px;color:#262626;transform:scaleX(1.1500);transform-origin:0 0;-webkit-text-stroke:0.25px #262626;">8G</div>
<div class="r" style="left:1082.10px;top:802.10px;width:49.80px;height:48.20px;background:linear-gradient(180deg,#a9a9a9 0%,#9a9a9a 35%,#7a7a7a 75%,#636363 100%);border-radius:4px 4px 0 0;"></div>
<div class="r" style="left:1087.20px;top:806.80px;width:39.80px;height:24.20px;background:#dc9670;border-radius:4px;box-shadow:0 0 1px 1px rgba(0,0,0,0.25);"></div>
<div class="t" style="left:1099.30px;top:836.72px;font-size:10.61px;line-height:10.61px;color:#262626;transform:scaleX(1.1500);transform-origin:0 0;-webkit-text-stroke:0.25px #262626;">8H</div>
<div class="r" style="left:1134.10px;top:802.10px;width:49.80px;height:48.20px;background:linear-gradient(180deg,#a9a9a9 0%,#9a9a9a 35%,#7a7a7a 75%,#636363 100%);border-radius:4px 4px 0 0;"></div>
<div class="r" style="left:1139.20px;top:806.80px;width:39.80px;height:24.20px;background:#7a4a28;border-radius:4px;box-shadow:0 0 1px 1px rgba(0,0,0,0.25);"></div>
<div class="t" style="left:1154.01px;top:836.72px;font-size:10.61px;line-height:10.61px;color:#262626;transform:scaleX(1.1500);transform-origin:0 0;-webkit-text-stroke:0.25px #262626;">8I</div>
<div class="r" style="left:1186.10px;top:802.10px;width:50.30px;height:48.20px;background:#262626;border-radius:4px 4px 0 0;"></div>
<div class="r" style="left:1191.20px;top:806.80px;width:39.80px;height:24.20px;background:#d98c5e;border-radius:4px;box-shadow:0 0 1px 1px rgba(0,0,0,0.25);"></div>
<div class="t" style="left:1205.20px;top:836.72px;font-size:10.61px;line-height:10.61px;color:#f8f8f8;font-weight:bold;">8J</div>
<div class="r" style="left:1237.00px;top:802.10px;width:321.00px;height:59.90px;background:#2c2c2c;"></div>
<div class="r" style="left:1237.50px;top:802.10px;width:47.50px;height:18.20px;background:linear-gradient(180deg,#adadad 0%,#9c9c9c 45%,#838383 80%,#747474 100%);border-radius:3px 3px 0 0;"></div>
<div class="r" style="left:1251px;top:803px;width:20px;height:16px;border-radius:50%;background:linear-gradient(180deg,#858585,#b0b0b0)"></div>
<svg class="r" style="left:1257.5px;top:808px" width="9" height="6"><path d="M0.5 5 L8.5 5 L4.5 0.5 Z" fill="#2a2a2a"/></svg>
<div class="r" style="left:1237.50px;top:821.30px;width:47.50px;height:40.70px;background:linear-gradient(180deg,#adadad 0%,#9c9c9c 45%,#838383 80%,#747474 100%);"></div>
<div class="r" style="left:1245.00px;top:826.00px;width:32.00px;height:31.00px;background:linear-gradient(180deg,#b0b0b0,#7a7a7a);border:3px solid #2a2a2a;border-radius:5px;box-sizing:border-box;"></div>
<div class="r" style="left:1254.50px;top:835.20px;width:13.20px;height:13.20px;background:linear-gradient(180deg,#161616 50%,#000 50%);"></div>
<div class="r" style="left:1286.00px;top:802.10px;width:46.40px;height:29.50px;background:linear-gradient(180deg,#adadad 0%,#9c9c9c 45%,#838383 80%,#747474 100%);border-radius:3px 0 0 0;"></div>
<div class="r" style="left:1298.5px;top:807px;width:20px;height:20px;border-radius:50%;background:linear-gradient(180deg,#7c7c7c 0%,#9a9a9a 55%,#b2b2b2 100%);"></div>
<div class="r" style="left:1304.50px;top:813.00px;width:8.00px;height:7.70px;background:#262626;"></div>
<div class="r" style="left:1333.40px;top:802.10px;width:44.30px;height:29.50px;background:linear-gradient(180deg,#adadad 0%,#9c9c9c 45%,#838383 80%,#747474 100%);"></div>
<div class="r" style="left:1344.9px;top:807px;width:20px;height:20px;border-radius:50%;background:linear-gradient(180deg,#7c7c7c 0%,#9a9a9a 55%,#b2b2b2 100%);"></div>
<svg class="r" style="left:1351.4px;top:812.3px" width="10" height="11"><path d="M0 0 L8.5 5.2 L0 10.4 Z" fill="#262626"/></svg>
<div class="r" style="left:1378.70px;top:802.10px;width:43.40px;height:29.50px;background:linear-gradient(180deg,#adadad 0%,#9c9c9c 45%,#838383 80%,#747474 100%);"></div>
<div class="r" style="left:1389.7px;top:807px;width:20px;height:20px;border-radius:50%;background:linear-gradient(180deg,#7c7c7c 0%,#9a9a9a 55%,#b2b2b2 100%);"></div>
<svg class="r" style="left:1393.7px;top:812px" width="13" height="11"><path d="M3.2 1 L1 1 L1 10 L3.2 10 M9.8 1 L12 1 L12 10 L9.8 10" stroke="#262626" stroke-width="1.6" fill="none"/><rect x="4.6" y="4.6" width="1.5" height="1.5" fill="#262626"/><rect x="7" y="4.6" width="1.5" height="1.5" fill="#262626"/></svg>
<div class="r" style="left:1423.10px;top:802.10px;width:44.40px;height:29.50px;background:linear-gradient(180deg,#adadad 0%,#9c9c9c 45%,#838383 80%,#747474 100%);"></div>
<div class="r" style="left:1434.6px;top:807px;width:20px;height:20px;border-radius:50%;background:linear-gradient(180deg,#7c7c7c 0%,#9a9a9a 55%,#b2b2b2 100%);"></div>
<svg class="r" style="left:1437.1px;top:812.5px" width="15" height="9"><path d="M7.5 4.5 C5.5 1.5 1 1 1 4.5 C1 8 5.5 7.5 7.5 4.5 C9.5 1.5 14 1 14 4.5 C14 8 9.5 7.5 7.5 4.5 Z" stroke="#262626" stroke-width="1.5" fill="none"/></svg>
<div class="r" style="left:1468.50px;top:802.10px;width:44.30px;height:29.50px;background:linear-gradient(180deg,#3c3c3c,#272727);"></div>
<div class="r" style="left:1480.0px;top:807px;width:20px;height:20px;border-radius:50%;background:linear-gradient(180deg,#2e2e2e,#3e3e3e);"></div>
<svg class="r" style="left:1484.0px;top:811px" width="12" height="12"><path d="M9.8 4.2 A4.6 4.6 0 0 0 2.2 3.6 M2.2 7.8 A4.6 4.6 0 0 0 9.8 8.4" stroke="#151515" stroke-width="1.8" fill="none"/><path d="M11 1 L11 5.5 L6.8 5.5Z M1 11 L1 6.5 L5.2 6.5Z" fill="#151515"/></svg>
<div class="r" style="left:1513.80px;top:802.10px;width:44.20px;height:29.50px;background:linear-gradient(180deg,#adadad 0%,#9c9c9c 45%,#838383 80%,#747474 100%);"></div>
<div class="r" style="left:1525.2px;top:807px;width:20px;height:20px;border-radius:50%;background:linear-gradient(180deg,#7c7c7c 0%,#9a9a9a 55%,#b2b2b2 100%);"></div>
<div class="r" style="left:1286.00px;top:832.80px;width:136.10px;height:29.20px;background:linear-gradient(180deg,#adadad 0%,#9c9c9c 45%,#838383 80%,#747474 100%);border-radius:3px 0 0 0;"></div>
<div class="r" style="left:1423.10px;top:832.80px;width:134.90px;height:29.20px;background:linear-gradient(180deg,#adadad 0%,#9c9c9c 45%,#838383 80%,#747474 100%);"></div>
<div class="r" style="left:1307px;top:838px;width:20px;height:20px;border-radius:50%;background:linear-gradient(180deg,#7c7c7c 0%,#9a9a9a 55%,#b2b2b2 100%)"></div>
<div class="r" style="left:1520px;top:838px;width:20px;height:20px;border-radius:50%;background:linear-gradient(180deg,#7c7c7c 0%,#9a9a9a 55%,#b2b2b2 100%)"></div>
<svg class="r" style="left:1311px;top:843px" width="11" height="11"><path d="M5 0.8 L1.2 5.2 L5 9.6 M9.2 0.8 L5.4 5.2 L9.2 9.6" stroke="#262626" stroke-width="1.5" fill="none"/></svg>
<svg class="r" style="left:1525.5px;top:843px" width="11" height="11"><path d="M1 0.8 L4.8 5.2 L1 9.6 M5.2 0.8 L9 5.2 L5.2 9.6" stroke="#262626" stroke-width="1.5" fill="none"/></svg>
<div class="t" style="left:1343.90px;top:836.73px;font-size:22.53px;line-height:22.53px;color:#262626;transform:scaleX(1.0042);transform-origin:0 0;">Back</div>
<div class="t" style="left:1450.80px;top:836.73px;font-size:22.53px;line-height:22.53px;color:#262626;transform:scaleX(1.1031);transform-origin:0 0;">Next</div>
<script>
(function(){
var cv=document.getElementById('cie'); var ctx=cv.getContext('2d');
var W=cv.width,H=cv.height; var img=ctx.createImageData(W,H); var d=img.data;
var loc=[[256.99, 449.66], [256.97, 449.65], [256.95, 449.65], [256.92, 449.64], [256.89, 449.64], [256.85, 449.64], [256.82, 449.66], [256.79, 449.69], [256.76, 449.73], [256.72, 449.78], [256.69, 449.83], [256.65, 449.88], [256.6, 449.91], [256.55, 449.92], [256.5, 449.92], [256.45, 449.91], [256.39, 449.9], [256.33, 449.9], [256.27, 449.91], [256.21, 449.94], [256.15, 449.98], [256.09, 450.04], [256.02, 450.09], [255.96, 450.13], [255.89, 450.16], [255.81, 450.18], [255.73, 450.18], [255.65, 450.18], [255.57, 450.17], [255.48, 450.17], [255.39, 450.16], [255.29, 450.17], [255.18, 450.17], [255.08, 450.17], [254.96, 450.17], [254.85, 450.17], [254.72, 450.17], [254.6, 450.18], [254.48, 450.2], [254.36, 450.22], [254.23, 450.23], [254.07, 450.22], [253.89, 450.17], [253.7, 450.1], [253.49, 450.02], [253.26, 449.91], [253.01, 449.78], [252.72, 449.62], [252.4, 449.43], [252.04, 449.21], [251.65, 448.97], [251.23, 448.69], [250.79, 448.39], [250.31, 448.06], [249.82, 447.71], [249.31, 447.33], [248.78, 446.94], [248.23, 446.52], [247.64, 446.06], [247.01, 445.57], [246.33, 445.03], [245.59, 444.44], [244.81, 443.82], [243.99, 443.15], [243.12, 442.45], [242.22, 441.71], [241.28, 440.94], [240.32, 440.12], [239.32, 439.27], [238.29, 438.38], [237.22, 437.46], [236.1, 436.5], [234.93, 435.51], [233.71, 434.5], [232.46, 433.46], [231.17, 432.38], [229.81, 431.27], [228.39, 430.09], [226.89, 428.85], [225.3, 427.55], [223.64, 426.19], [221.9, 424.78], [220.11, 423.31], [218.25, 421.78], [216.34, 420.2], [214.38, 418.58], [212.38, 416.93], [210.31, 415.23], [208.18, 413.45], [205.96, 411.57], [203.65, 409.58], [201.26, 407.49], [198.79, 405.33], [196.24, 403.07], [193.6, 400.69], [190.88, 398.17], [188.07, 395.5], [185.2, 392.73], [182.29, 389.91], [179.29, 386.95], [176.16, 383.78], [172.87, 380.29], [169.36, 376.43], [165.63, 372.19], [161.7, 367.65], [157.61, 362.81], [153.36, 357.66], [149.0, 352.21], [144.53, 346.44], [139.93, 340.36], [135.18, 333.96], [130.31, 327.26], [125.34, 320.26], [120.3, 312.98], [115.22, 305.44], [110.05, 297.56], [104.76, 289.33], [99.4, 280.81], [94.02, 272.09], [88.68, 263.27], [83.42, 254.4], [78.17, 245.42], [72.88, 236.23], [67.62, 226.93], [62.47, 217.6], [57.51, 208.34], [52.81, 199.22], [48.35, 190.16], [44.06, 181.08], [39.95, 172.07], [36.05, 163.2], [32.35, 154.55], [28.89, 146.23], [25.65, 138.17], [22.62, 130.3], [19.81, 122.66], [17.21, 115.29], [14.82, 108.24], [12.66, 101.56], [10.74, 95.25], [9.05, 89.27], [7.58, 83.62], [6.3, 78.26], [5.21, 73.18], [4.26, 68.37], [3.5, 63.85], [2.92, 59.65], [2.52, 55.73], [2.29, 52.05], [2.2, 48.57], [2.23, 45.25], [2.41, 42.12], [2.75, 39.21], [3.23, 36.5], [3.84, 33.96], [4.58, 31.6], [5.43, 29.37], [6.41, 27.3], [7.53, 25.4], [8.77, 23.66], [10.11, 22.07], [11.55, 20.62], [13.06, 19.29], [14.65, 18.11], [16.35, 17.09], [18.13, 16.2], [19.99, 15.44], [21.9, 14.76], [23.86, 14.14], [25.87, 13.62], [27.95, 13.22], [30.09, 12.9], [32.27, 12.65], [34.49, 12.44], [36.72, 12.24], [38.99, 12.07], [41.3, 11.96], [43.64, 11.88], [46.01, 11.83], [48.38, 11.8], [50.74, 11.77], [53.09, 11.76], [55.45, 11.77], [57.81, 11.79], [60.18, 11.83], [62.57, 11.88], [64.98, 11.95], [67.41, 12.03], [69.84, 12.13], [72.3, 12.24], [74.78, 12.36], [77.28, 12.5], [79.83, 12.65], [82.42, 12.81], [85.03, 12.98], [87.68, 13.17], [90.36, 13.37], [93.08, 13.58], [95.84, 13.8], [98.64, 14.03], [101.47, 14.28], [104.34, 14.54], [107.26, 14.81], [110.22, 15.08], [113.23, 15.37], [116.29, 15.67], [119.4, 15.98], [122.55, 16.29], [125.75, 16.62], [129.02, 16.96], [132.34, 17.3], [135.73, 17.66], [139.17, 18.02], [142.67, 18.4], [146.23, 18.78], [149.85, 19.17], [153.53, 19.58], [157.28, 19.99], [161.08, 20.41], [164.95, 20.85], [168.88, 21.29], [172.89, 21.74], [176.96, 22.2], [181.11, 22.66], [185.33, 23.14], [189.62, 23.62], [193.98, 24.11], [198.41, 24.62], [202.91, 25.13], [207.48, 25.65], [212.13, 26.18], [216.84, 26.72], [221.63, 27.27], [226.48, 27.83], [231.42, 28.4], [236.42, 28.97], [241.5, 29.56], [246.65, 30.15], [251.87, 30.75], [257.16, 31.36], [262.51, 31.98], [267.94, 32.61], [273.44, 33.24], [279.01, 33.88], [284.64, 34.53], [290.32, 35.19], [296.05, 35.84], [301.84, 36.51], [307.7, 37.18], [313.61, 37.86], [319.56, 38.54], [325.54, 39.22], [331.53, 39.91], [337.56, 40.61], [343.65, 41.31], [349.76, 42.02], [355.88, 42.73], [361.96, 43.43], [367.98, 44.13], [373.94, 44.81], [379.87, 45.5], [385.77, 46.18], [391.64, 46.85], [397.49, 47.52], [403.31, 48.19], [409.13, 48.86], [414.96, 49.53], [420.76, 50.2], [426.5, 50.86], [432.16, 51.51], [437.69, 52.14], [443.11, 52.76], [448.45, 53.37], [453.7, 53.97], [458.85, 54.56], [463.9, 55.13], [468.84, 55.7], [473.69, 56.25], [478.44, 56.8], [483.09, 57.34], [487.64, 57.87], [492.07, 58.38], [496.38, 58.88], [500.56, 59.36], [504.63, 59.83], [508.59, 60.29], [512.43, 60.74], [516.17, 61.17], [519.81, 61.59], [523.33, 61.99], [526.74, 62.38], [530.05, 62.76], [533.25, 63.12], [536.38, 63.48], [539.42, 63.83], [542.38, 64.17], [545.25, 64.5], [548.03, 64.82], [550.73, 65.13], [553.37, 65.44], [555.97, 65.74], [558.51, 66.03], [560.99, 66.32], [563.42, 66.6], [565.78, 66.87], [568.07, 67.13], [570.31, 67.39], [572.49, 67.64], [574.6, 67.89], [576.66, 68.13], [578.65, 68.36], [580.58, 68.58], [582.44, 68.79], [584.23, 69.0], [585.96, 69.19], [587.62, 69.38], [589.22, 69.56], [590.76, 69.73], [592.24, 69.9], [593.66, 70.06], [595.01, 70.22], [596.29, 70.36], [597.52, 70.51], [598.71, 70.64], [599.86, 70.78], [600.96, 70.9], [602.01, 71.03], [603.02, 71.14], [603.98, 71.25], [604.9, 71.36], [605.78, 71.46], [606.62, 71.56], [607.43, 71.65], [608.19, 71.74], [608.9, 71.82], [609.58, 71.9], [610.21, 71.97], [610.79, 72.04], [611.31, 72.1], [611.79, 72.15], [612.23, 72.21], [612.67, 72.26], [613.1, 72.31], [613.51, 72.35], [613.88, 72.4], [614.24, 72.44], [614.61, 72.48], [615.01, 72.53], [615.48, 72.58], [616.03, 72.64], [616.63, 72.71], [617.28, 72.79], [617.93, 72.86], [618.59, 72.94], [619.21, 73.01], [619.84, 73.09], [620.52, 73.16], [621.19, 73.24], [621.8, 73.31], [622.32, 73.37], [622.7, 73.41]];
var U0=949.800000,US=997.600000,V0=519.400000,VS=768.000000,PX0=949.000000,PY0=57.000000, DARK=0.610000, GAM=1.000000;
ctx.beginPath(); for(var i=0;i<loc.length;i++){ if(i==0) ctx.moveTo(loc[i][0],loc[i][1]); else ctx.lineTo(loc[i][0],loc[i][1]); } ctx.closePath();
var mask=document.createElement('canvas'); mask.width=W; mask.height=H; var mc=mask.getContext('2d');
mc.fillStyle='#fff'; mc.beginPath(); for(var i=0;i<loc.length;i++){ if(i==0) mc.moveTo(loc[i][0],loc[i][1]); else mc.lineTo(loc[i][0],loc[i][1]); } mc.closePath(); mc.fill();
var md=mc.getImageData(0,0,W,H).data;
function g(c){ return Math.pow(c,GAM); }
for(var py=0;py<H;py++){ for(var px=0;px<W;px++){
  var k=(py*W+px)*4; var a=md[k+3]; if(a==0){ d[k+3]=0; continue; }
  var u=(px+0.5+PX0-U0)/US, v=(V0-(py+0.5+PY0))/VS;
  var den=6*u-16*v+12; var x=9*u/den, y=4*v/den; if(y<=0.0001) y=0.0001;
  var X=x/y, Y=1, Z=(1-x-y)/y;
  var r=3.2406*X-1.5372*Y-0.4986*Z, gg=-0.9689*X+1.8758*Y+0.0415*Z, b=0.0557*X-0.2040*Y+1.0570*Z;
  var out=(r<0||gg<0||b<0);
  if(r<0) r=0; if(gg<0) gg=0; if(b<0) b=0;
  var m=Math.max(r,gg,b); r/=m; gg/=m; b/=m;
  var f= out? DARK:1.0;
  d[k]=Math.round(g(r)*255*f); d[k+1]=Math.round(g(gg)*255*f); d[k+2]=Math.round(g(b)*255*f); d[k+3]=a;
}}
ctx.putImageData(img,0,0);
})();
</script></body></html>
